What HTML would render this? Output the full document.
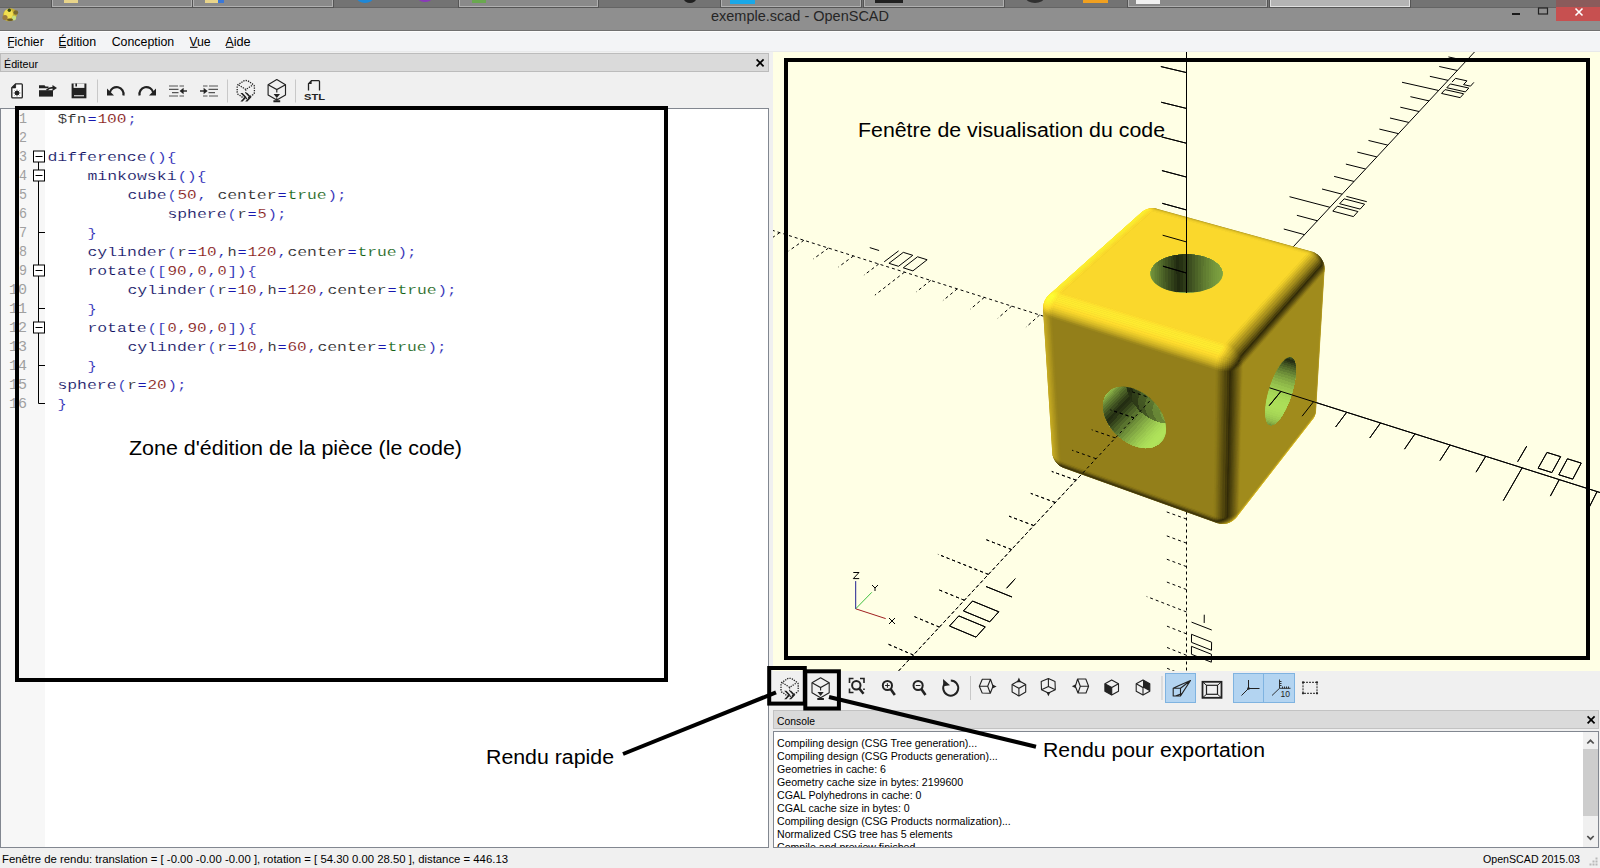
<!DOCTYPE html><html><head><meta charset="utf-8"><style>html,body{margin:0;padding:0;overflow:hidden;background:#f0f0f0}svg{display:block}</style></head><body><svg width="1600" height="868" viewBox="0 0 1600 868"><rect x="0" y="0" width="1600" height="868" fill="#f0f0f0"/>
<rect x="0" y="0" width="1600" height="8" fill="#737373"/>
<rect x="0" y="7" width="1600" height="1" fill="#646464"/>
<rect x="51" y="-2" width="142" height="10" fill="#555555"/>
<rect x="52" y="-2" width="140" height="9" fill="#b0b0b0"/>
<rect x="53" y="-2" width="138" height="8" fill="#8a8a8a"/>
<rect x="192" y="-2" width="142" height="10" fill="#555555"/>
<rect x="193" y="-2" width="140" height="9" fill="#b0b0b0"/>
<rect x="194" y="-2" width="138" height="8" fill="#8a8a8a"/>
<rect x="458" y="-2" width="141" height="10" fill="#555555"/>
<rect x="459" y="-2" width="139" height="9" fill="#b0b0b0"/>
<rect x="460" y="-2" width="137" height="8" fill="#8a8a8a"/>
<rect x="720" y="-2" width="142" height="10" fill="#555555"/>
<rect x="721" y="-2" width="140" height="9" fill="#b0b0b0"/>
<rect x="722" y="-2" width="138" height="8" fill="#8a8a8a"/>
<rect x="863" y="-2" width="142" height="10" fill="#555555"/>
<rect x="864" y="-2" width="140" height="9" fill="#b0b0b0"/>
<rect x="865" y="-2" width="138" height="8" fill="#8a8a8a"/>
<rect x="1127" y="-2" width="141" height="10" fill="#555555"/>
<rect x="1128" y="-2" width="139" height="9" fill="#b0b0b0"/>
<rect x="1129" y="-2" width="137" height="8" fill="#8a8a8a"/>
<rect x="1269" y="-2" width="142" height="10" fill="#555555"/>
<rect x="1270" y="-2" width="140" height="9" fill="#e0e0e0"/>
<rect x="1271" y="-2" width="138" height="8" fill="#b4b4b4"/>
<rect x="64" y="0" width="14" height="3" fill="#e8d48a"/>
<rect x="205" y="0" width="14" height="3" fill="#e8d48a"/>
<rect x="218" y="0" width="6" height="3" fill="#3a78d8"/>
<ellipse cx="365" cy="-2" rx="8" ry="5" fill="#1e88d8"/>
<ellipse cx="425" cy="-2" rx="7" ry="4" fill="#8a3ab8"/>
<rect x="472" y="0" width="14" height="3" fill="#6aa84f"/>
<ellipse cx="690" cy="-1" rx="6" ry="4" fill="#202020"/>
<rect x="730" y="0" width="25" height="4" fill="#1aa8e8"/>
<rect x="875" y="0" width="28" height="3" fill="#202020"/>
<ellipse cx="1035" cy="-2" rx="9" ry="5" fill="#303030"/>
<rect x="1083" y="0" width="25" height="3" fill="#f0a020"/>
<rect x="1136" y="0" width="24" height="4" fill="#f0f0f0"/>
<rect x="0" y="8" width="1600" height="22" fill="#8f8f8f"/>
<rect x="0" y="30" width="1600" height="1" fill="#707070"/>
<rect x="0" y="31" width="1600" height="1" fill="#fdfdfd"/>
<g><ellipse cx="10" cy="14.8" rx="7.3" ry="6.2" transform="rotate(-25 10 14.8)" fill="#c8b030"/><ellipse cx="8.5" cy="14" rx="4.5" ry="4.8" fill="#f2e050"/><ellipse cx="15.8" cy="12.5" rx="2.4" ry="2.2" fill="#7a6a30"/><ellipse cx="5" cy="17.5" rx="2.6" ry="2.6" fill="#9a7a40"/><ellipse cx="14" cy="18" rx="2.2" ry="2.4" fill="#c8e080"/><circle cx="9.3" cy="10.3" r="1.7" fill="#3a4a10"/><ellipse cx="10" cy="19.8" rx="3" ry="1.2" fill="#6a5a20"/></g>
<text x="711" y="20.6" font-family="Liberation Sans" font-size="14.5" fill="#262626" textLength="178" lengthAdjust="spacingAndGlyphs">exemple.scad - OpenSCAD</text>
<rect x="1556" y="0" width="44" height="7" fill="#8a5b5b"/>
<rect x="1556" y="7" width="44" height="14" fill="#c75050"/>
<path d="M1575.5,8.5 L1582.5,15.5 M1582.5,8.5 L1575.5,15.5" stroke="#fff" stroke-width="1.6"/>
<rect x="1512" y="13" width="8" height="2" fill="#1a1a1a"/>
<rect x="1538.5" y="8" width="9" height="6" fill="none" stroke="#222" stroke-width="1.2"/>
<rect x="0" y="32" width="1600" height="19" fill="#f3f4f6"/>
<rect x="0" y="51" width="1600" height="1" fill="#e8e9ea"/>
<text x="7.2" y="45.8" font-family="Liberation Sans" font-size="12" fill="#000" textLength="36.5" lengthAdjust="spacingAndGlyphs">Fichier</text>
<rect x="8" y="46.8" width="6" height="1" fill="#000"/>
<text x="58.2" y="45.8" font-family="Liberation Sans" font-size="12" fill="#000" textLength="38.0" lengthAdjust="spacingAndGlyphs">Édition</text>
<rect x="59" y="46.8" width="7" height="1" fill="#000"/>
<text x="111.7" y="45.8" font-family="Liberation Sans" font-size="12" fill="#000" textLength="62.5" lengthAdjust="spacingAndGlyphs">Conception</text>
<text x="189.2" y="45.8" font-family="Liberation Sans" font-size="12" fill="#000" textLength="21.5" lengthAdjust="spacingAndGlyphs">Vue</text>
<rect x="190" y="46.8" width="7.5" height="1" fill="#000"/>
<text x="225.2" y="45.8" font-family="Liberation Sans" font-size="12" fill="#000" textLength="25.5" lengthAdjust="spacingAndGlyphs">Aide</text>
<rect x="226" y="46.8" width="7.5" height="1" fill="#000"/>
<rect x="0.5" y="53.5" width="768" height="18" fill="#dadada" stroke="#bcbcbc" stroke-width="1"/>
<text x="4" y="67.8" font-family="Liberation Sans" font-size="11" fill="#000" textLength="34" lengthAdjust="spacingAndGlyphs">Éditeur</text>
<path d="M756.6,59.4 L763.6,66.4 M763.6,59.4 L756.6,66.4" stroke="#000" stroke-width="1.7"/>
<rect x="0.5" y="108.5" width="768" height="739" fill="#ffffff" stroke="#828790" stroke-width="1"/>
<rect x="1" y="109" width="44" height="738" fill="#f7f7f7"/>
<path d="M15.6,83.9 L21.4,83.9 Q22.3,83.9 22.3,84.8 L22.3,96.9 Q22.3,97.8 21.4,97.8 L12.7,97.8 Q11.8,97.8 11.8,96.9 L11.8,87.8 Z" fill="#fff" stroke="#222" stroke-width="1.3" stroke-linejoin="round"/>
<path d="M11.8,87.9 L15.6,87.9 L15.6,83.9" fill="#222" stroke="#222" stroke-width="0.8"/>
<circle cx="17" cy="93" r="2.3" fill="#222"/>
<path d="M17,89.6 L17,96.4 M13.6,93 L20.4,93 M14.6,90.6 L19.4,95.4 M19.4,90.6 L14.6,95.4" stroke="#222" stroke-width="0.7"/>
<path d="M39,85.3 L44.5,85.3 L45.5,86.5 L48.5,86.5 L48.5,88.3 L39,88.3 Z" fill="#222"/>
<path d="M39,90.2 L53,90.2 L53,96.6 L39,96.6 Z" fill="#222"/>
<path d="M46.5,90.2 Q49,87.6 53,87.6" fill="none" stroke="#222" stroke-width="1.6"/>
<path d="M52.5,85 L57,88 L52.5,91 Z" fill="#222"/>
<path d="M71.6,83.5 L86.4,83.5 L86.4,98.3 L71.6,98.3 Z" fill="#222"/>
<rect x="73.6" y="83.5" width="10.8" height="4.4" fill="#f0f0f0"/>
<rect x="75.4" y="83.5" width="1.6" height="3" fill="#222"/>
<rect x="74" y="95" width="10" height="1.4" fill="#bdbdbd"/>
<rect x="97" y="79.5" width="1" height="23" fill="#c8c8c8"/>
<path d="M109.8,92.5 A6.6,6.6 0 0 1 123.4,95.6" fill="none" stroke="#222" stroke-width="2.2"/>
<path d="M107,88.6 L107,95.6 L114,95.6 Z" fill="#222"/>
<path d="M153.2,92.5 A6.6,6.6 0 0 0 139.6,95.6" fill="none" stroke="#222" stroke-width="2.2"/>
<path d="M156,88.6 L156,95.6 L149,95.6 Z" fill="#222"/>
<path d="M169,86 L178,86 M179.5,86 L184,86 M169,89.3 L178.5,89.3 M172,92.6 L178.5,92.6 M169,96 L178,96 M179.5,96 L184,96" stroke="#555" stroke-width="1.2"/>
<path d="M181,91 L187,91" stroke="#222" stroke-width="1.4"/><path d="M179.6,91 L183.6,87.8 L183.6,94.2 Z" fill="#222"/>
<path d="M203,86 L207.5,86 M209,86 L218,86 M208.5,89.3 L218,89.3 M208.5,92.6 L215,92.6 M203,96 L207.5,96 M209,96 L218,96" stroke="#555" stroke-width="1.2"/>
<path d="M200,91 L206,91" stroke="#222" stroke-width="1.4"/><path d="M207.6,91 L203.6,87.8 L203.6,94.2 Z" fill="#222"/>
<rect x="227" y="79.5" width="1" height="23" fill="#c8c8c8"/>
<path d="M243.30,81.10 Q245.80,79.90 248.30,81.10 L252.60,84.10 Q254.40,84.70 254.40,86.70 L254.40,92.30 Q254.40,94.30 252.60,94.90 L248.30,97.90 Q245.80,99.10 243.30,97.90 L239.00,94.90 Q237.20,94.30 237.20,92.30 L237.20,86.70 Q237.20,84.70 239.00,84.10 Z" fill="none" stroke="#222" stroke-width="1.3" stroke-dasharray="1.3 1.1"/>
<path d="M238.70,85.00 L245.80,89.50 L252.90,85.00 M245.80,89.50 L245.80,93.00" fill="none" stroke="#222" stroke-width="1.2" stroke-dasharray="1.3 1.1"/>
<path d="M240.40,93.00 L242.60,93.00 L246.60,97.20 L242.60,101.50 L240.40,101.50 L244.40,97.20 Z" fill="#222"/>
<path d="M245.20,93.00 L247.40,93.00 L251.40,97.20 L247.40,101.50 L245.20,101.50 L249.20,97.20 Z" fill="#222"/>
<path d="M276.80,79.50 L285.50,84.65 L285.50,94.95 L276.80,100.10 L268.10,94.95 L268.10,84.65 Z" fill="none" stroke="#222" stroke-width="1.15" stroke-linejoin="round"/>
<path d="M268.1,84.7 L276.8,89.6 L285.5,84.7 M276.8,89.6 L276.8,92.5" fill="none" stroke="#222" stroke-width="1.15"/>
<path d="M273.6,94 L280,94 L276.8,98 Z M273.4,100.2 L280.2,100.2 L280.2,102.2 L273.4,102.2 Z" fill="#222"/>
<path d="M276.8,98 L276.8,100.2" stroke="#222" stroke-width="1"/>
<rect x="295" y="79.5" width="1" height="23" fill="#c8c8c8"/>
<path d="M308.5,90.5 L308.5,83.8 L311.5,80.6 L318.6,80.6 Q319.5,80.6 319.5,81.5 L319.5,90.5" fill="none" stroke="#222" stroke-width="1.3"/>
<path d="M308.5,84 L311.6,84 L311.6,80.8 Z" fill="#222"/>
<text x="304" y="100.3" font-family="Liberation Sans" font-weight="bold" font-size="9" fill="#222" textLength="21" lengthAdjust="spacingAndGlyphs">STL</text>
<text x="19.00" y="122.50" font-family="Liberation Mono" font-size="14" fill="#a0a0a0" textLength="8.00" lengthAdjust="spacingAndGlyphs">1</text>
<text x="57.40" y="122.50" font-family="Liberation Mono" font-size="13.2" fill="#202020" textLength="29.20" lengthAdjust="spacingAndGlyphs" stroke="#fff" stroke-width="0.15">$fn</text>
<text x="87.40" y="122.50" font-family="Liberation Mono" font-size="13.2" fill="#1818b0" textLength="9.20" lengthAdjust="spacingAndGlyphs" stroke="#fff" stroke-width="0.15">=</text>
<text x="97.40" y="122.50" font-family="Liberation Mono" font-size="13.2" fill="#801010" textLength="29.20" lengthAdjust="spacingAndGlyphs" stroke="#fff" stroke-width="0.15">100</text>
<text x="127.40" y="122.50" font-family="Liberation Mono" font-size="13.2" fill="#1818b0" textLength="9.20" lengthAdjust="spacingAndGlyphs" stroke="#fff" stroke-width="0.15">;</text>
<text x="19.00" y="141.50" font-family="Liberation Mono" font-size="14" fill="#a0a0a0" textLength="8.00" lengthAdjust="spacingAndGlyphs">2</text>
<text x="19.00" y="160.50" font-family="Liberation Mono" font-size="14" fill="#a0a0a0" textLength="8.00" lengthAdjust="spacingAndGlyphs">3</text>
<text x="47.40" y="160.50" font-family="Liberation Mono" font-size="13.2" fill="#0c0c60" textLength="99.20" lengthAdjust="spacingAndGlyphs" stroke="#fff" stroke-width="0.15">difference</text>
<text x="147.40" y="160.50" font-family="Liberation Mono" font-size="13.2" fill="#1818b0" textLength="29.20" lengthAdjust="spacingAndGlyphs" stroke="#fff" stroke-width="0.15">(){</text>
<text x="19.00" y="179.50" font-family="Liberation Mono" font-size="14" fill="#a0a0a0" textLength="8.00" lengthAdjust="spacingAndGlyphs">4</text>
<text x="87.40" y="179.50" font-family="Liberation Mono" font-size="13.2" fill="#0c0c60" textLength="89.20" lengthAdjust="spacingAndGlyphs" stroke="#fff" stroke-width="0.15">minkowski</text>
<text x="177.40" y="179.50" font-family="Liberation Mono" font-size="13.2" fill="#1818b0" textLength="29.20" lengthAdjust="spacingAndGlyphs" stroke="#fff" stroke-width="0.15">(){</text>
<text x="19.00" y="198.50" font-family="Liberation Mono" font-size="14" fill="#a0a0a0" textLength="8.00" lengthAdjust="spacingAndGlyphs">5</text>
<text x="127.40" y="198.50" font-family="Liberation Mono" font-size="13.2" fill="#0c0c60" textLength="39.20" lengthAdjust="spacingAndGlyphs" stroke="#fff" stroke-width="0.15">cube</text>
<text x="167.40" y="198.50" font-family="Liberation Mono" font-size="13.2" fill="#1818b0" textLength="9.20" lengthAdjust="spacingAndGlyphs" stroke="#fff" stroke-width="0.15">(</text>
<text x="177.40" y="198.50" font-family="Liberation Mono" font-size="13.2" fill="#801010" textLength="19.20" lengthAdjust="spacingAndGlyphs" stroke="#fff" stroke-width="0.15">50</text>
<text x="197.40" y="198.50" font-family="Liberation Mono" font-size="13.2" fill="#1818b0" textLength="9.20" lengthAdjust="spacingAndGlyphs" stroke="#fff" stroke-width="0.15">,</text>
<text x="217.40" y="198.50" font-family="Liberation Mono" font-size="13.2" fill="#202020" textLength="59.20" lengthAdjust="spacingAndGlyphs" stroke="#fff" stroke-width="0.15">center</text>
<text x="277.40" y="198.50" font-family="Liberation Mono" font-size="13.2" fill="#1818b0" textLength="9.20" lengthAdjust="spacingAndGlyphs" stroke="#fff" stroke-width="0.15">=</text>
<text x="287.40" y="198.50" font-family="Liberation Mono" font-size="13.2" fill="#106010" textLength="39.20" lengthAdjust="spacingAndGlyphs" stroke="#fff" stroke-width="0.15">true</text>
<text x="327.40" y="198.50" font-family="Liberation Mono" font-size="13.2" fill="#1818b0" textLength="19.20" lengthAdjust="spacingAndGlyphs" stroke="#fff" stroke-width="0.15">);</text>
<text x="19.00" y="217.50" font-family="Liberation Mono" font-size="14" fill="#a0a0a0" textLength="8.00" lengthAdjust="spacingAndGlyphs">6</text>
<text x="167.40" y="217.50" font-family="Liberation Mono" font-size="13.2" fill="#0c0c60" textLength="59.20" lengthAdjust="spacingAndGlyphs" stroke="#fff" stroke-width="0.15">sphere</text>
<text x="227.40" y="217.50" font-family="Liberation Mono" font-size="13.2" fill="#1818b0" textLength="9.20" lengthAdjust="spacingAndGlyphs" stroke="#fff" stroke-width="0.15">(</text>
<text x="237.40" y="217.50" font-family="Liberation Mono" font-size="13.2" fill="#202020" textLength="9.20" lengthAdjust="spacingAndGlyphs" stroke="#fff" stroke-width="0.15">r</text>
<text x="247.40" y="217.50" font-family="Liberation Mono" font-size="13.2" fill="#1818b0" textLength="9.20" lengthAdjust="spacingAndGlyphs" stroke="#fff" stroke-width="0.15">=</text>
<text x="257.40" y="217.50" font-family="Liberation Mono" font-size="13.2" fill="#801010" textLength="9.20" lengthAdjust="spacingAndGlyphs" stroke="#fff" stroke-width="0.15">5</text>
<text x="267.40" y="217.50" font-family="Liberation Mono" font-size="13.2" fill="#1818b0" textLength="19.20" lengthAdjust="spacingAndGlyphs" stroke="#fff" stroke-width="0.15">);</text>
<text x="19.00" y="236.50" font-family="Liberation Mono" font-size="14" fill="#a0a0a0" textLength="8.00" lengthAdjust="spacingAndGlyphs">7</text>
<text x="87.40" y="236.50" font-family="Liberation Mono" font-size="13.2" fill="#1818b0" textLength="9.20" lengthAdjust="spacingAndGlyphs" stroke="#fff" stroke-width="0.15">}</text>
<text x="19.00" y="255.50" font-family="Liberation Mono" font-size="14" fill="#a0a0a0" textLength="8.00" lengthAdjust="spacingAndGlyphs">8</text>
<text x="87.40" y="255.50" font-family="Liberation Mono" font-size="13.2" fill="#0c0c60" textLength="79.20" lengthAdjust="spacingAndGlyphs" stroke="#fff" stroke-width="0.15">cylinder</text>
<text x="167.40" y="255.50" font-family="Liberation Mono" font-size="13.2" fill="#1818b0" textLength="9.20" lengthAdjust="spacingAndGlyphs" stroke="#fff" stroke-width="0.15">(</text>
<text x="177.40" y="255.50" font-family="Liberation Mono" font-size="13.2" fill="#202020" textLength="9.20" lengthAdjust="spacingAndGlyphs" stroke="#fff" stroke-width="0.15">r</text>
<text x="187.40" y="255.50" font-family="Liberation Mono" font-size="13.2" fill="#1818b0" textLength="9.20" lengthAdjust="spacingAndGlyphs" stroke="#fff" stroke-width="0.15">=</text>
<text x="197.40" y="255.50" font-family="Liberation Mono" font-size="13.2" fill="#801010" textLength="19.20" lengthAdjust="spacingAndGlyphs" stroke="#fff" stroke-width="0.15">10</text>
<text x="217.40" y="255.50" font-family="Liberation Mono" font-size="13.2" fill="#1818b0" textLength="9.20" lengthAdjust="spacingAndGlyphs" stroke="#fff" stroke-width="0.15">,</text>
<text x="227.40" y="255.50" font-family="Liberation Mono" font-size="13.2" fill="#202020" textLength="9.20" lengthAdjust="spacingAndGlyphs" stroke="#fff" stroke-width="0.15">h</text>
<text x="237.40" y="255.50" font-family="Liberation Mono" font-size="13.2" fill="#1818b0" textLength="9.20" lengthAdjust="spacingAndGlyphs" stroke="#fff" stroke-width="0.15">=</text>
<text x="247.40" y="255.50" font-family="Liberation Mono" font-size="13.2" fill="#801010" textLength="29.20" lengthAdjust="spacingAndGlyphs" stroke="#fff" stroke-width="0.15">120</text>
<text x="277.40" y="255.50" font-family="Liberation Mono" font-size="13.2" fill="#1818b0" textLength="9.20" lengthAdjust="spacingAndGlyphs" stroke="#fff" stroke-width="0.15">,</text>
<text x="287.40" y="255.50" font-family="Liberation Mono" font-size="13.2" fill="#202020" textLength="59.20" lengthAdjust="spacingAndGlyphs" stroke="#fff" stroke-width="0.15">center</text>
<text x="347.40" y="255.50" font-family="Liberation Mono" font-size="13.2" fill="#1818b0" textLength="9.20" lengthAdjust="spacingAndGlyphs" stroke="#fff" stroke-width="0.15">=</text>
<text x="357.40" y="255.50" font-family="Liberation Mono" font-size="13.2" fill="#106010" textLength="39.20" lengthAdjust="spacingAndGlyphs" stroke="#fff" stroke-width="0.15">true</text>
<text x="397.40" y="255.50" font-family="Liberation Mono" font-size="13.2" fill="#1818b0" textLength="19.20" lengthAdjust="spacingAndGlyphs" stroke="#fff" stroke-width="0.15">);</text>
<text x="19.00" y="274.50" font-family="Liberation Mono" font-size="14" fill="#a0a0a0" textLength="8.00" lengthAdjust="spacingAndGlyphs">9</text>
<text x="87.40" y="274.50" font-family="Liberation Mono" font-size="13.2" fill="#0c0c60" textLength="59.20" lengthAdjust="spacingAndGlyphs" stroke="#fff" stroke-width="0.15">rotate</text>
<text x="147.40" y="274.50" font-family="Liberation Mono" font-size="13.2" fill="#1818b0" textLength="19.20" lengthAdjust="spacingAndGlyphs" stroke="#fff" stroke-width="0.15">([</text>
<text x="167.40" y="274.50" font-family="Liberation Mono" font-size="13.2" fill="#801010" textLength="19.20" lengthAdjust="spacingAndGlyphs" stroke="#fff" stroke-width="0.15">90</text>
<text x="187.40" y="274.50" font-family="Liberation Mono" font-size="13.2" fill="#1818b0" textLength="9.20" lengthAdjust="spacingAndGlyphs" stroke="#fff" stroke-width="0.15">,</text>
<text x="197.40" y="274.50" font-family="Liberation Mono" font-size="13.2" fill="#801010" textLength="9.20" lengthAdjust="spacingAndGlyphs" stroke="#fff" stroke-width="0.15">0</text>
<text x="207.40" y="274.50" font-family="Liberation Mono" font-size="13.2" fill="#1818b0" textLength="9.20" lengthAdjust="spacingAndGlyphs" stroke="#fff" stroke-width="0.15">,</text>
<text x="217.40" y="274.50" font-family="Liberation Mono" font-size="13.2" fill="#801010" textLength="9.20" lengthAdjust="spacingAndGlyphs" stroke="#fff" stroke-width="0.15">0</text>
<text x="227.40" y="274.50" font-family="Liberation Mono" font-size="13.2" fill="#1818b0" textLength="19.20" lengthAdjust="spacingAndGlyphs" stroke="#fff" stroke-width="0.15">])</text>
<text x="247.40" y="274.50" font-family="Liberation Mono" font-size="13.2" fill="#1818b0" textLength="9.20" lengthAdjust="spacingAndGlyphs" stroke="#fff" stroke-width="0.15">{</text>
<text x="9.00" y="293.50" font-family="Liberation Mono" font-size="14" fill="#a0a0a0" textLength="18.00" lengthAdjust="spacingAndGlyphs">10</text>
<text x="127.40" y="293.50" font-family="Liberation Mono" font-size="13.2" fill="#0c0c60" textLength="79.20" lengthAdjust="spacingAndGlyphs" stroke="#fff" stroke-width="0.15">cylinder</text>
<text x="207.40" y="293.50" font-family="Liberation Mono" font-size="13.2" fill="#1818b0" textLength="9.20" lengthAdjust="spacingAndGlyphs" stroke="#fff" stroke-width="0.15">(</text>
<text x="217.40" y="293.50" font-family="Liberation Mono" font-size="13.2" fill="#202020" textLength="9.20" lengthAdjust="spacingAndGlyphs" stroke="#fff" stroke-width="0.15">r</text>
<text x="227.40" y="293.50" font-family="Liberation Mono" font-size="13.2" fill="#1818b0" textLength="9.20" lengthAdjust="spacingAndGlyphs" stroke="#fff" stroke-width="0.15">=</text>
<text x="237.40" y="293.50" font-family="Liberation Mono" font-size="13.2" fill="#801010" textLength="19.20" lengthAdjust="spacingAndGlyphs" stroke="#fff" stroke-width="0.15">10</text>
<text x="257.40" y="293.50" font-family="Liberation Mono" font-size="13.2" fill="#1818b0" textLength="9.20" lengthAdjust="spacingAndGlyphs" stroke="#fff" stroke-width="0.15">,</text>
<text x="267.40" y="293.50" font-family="Liberation Mono" font-size="13.2" fill="#202020" textLength="9.20" lengthAdjust="spacingAndGlyphs" stroke="#fff" stroke-width="0.15">h</text>
<text x="277.40" y="293.50" font-family="Liberation Mono" font-size="13.2" fill="#1818b0" textLength="9.20" lengthAdjust="spacingAndGlyphs" stroke="#fff" stroke-width="0.15">=</text>
<text x="287.40" y="293.50" font-family="Liberation Mono" font-size="13.2" fill="#801010" textLength="29.20" lengthAdjust="spacingAndGlyphs" stroke="#fff" stroke-width="0.15">120</text>
<text x="317.40" y="293.50" font-family="Liberation Mono" font-size="13.2" fill="#1818b0" textLength="9.20" lengthAdjust="spacingAndGlyphs" stroke="#fff" stroke-width="0.15">,</text>
<text x="327.40" y="293.50" font-family="Liberation Mono" font-size="13.2" fill="#202020" textLength="59.20" lengthAdjust="spacingAndGlyphs" stroke="#fff" stroke-width="0.15">center</text>
<text x="387.40" y="293.50" font-family="Liberation Mono" font-size="13.2" fill="#1818b0" textLength="9.20" lengthAdjust="spacingAndGlyphs" stroke="#fff" stroke-width="0.15">=</text>
<text x="397.40" y="293.50" font-family="Liberation Mono" font-size="13.2" fill="#106010" textLength="39.20" lengthAdjust="spacingAndGlyphs" stroke="#fff" stroke-width="0.15">true</text>
<text x="437.40" y="293.50" font-family="Liberation Mono" font-size="13.2" fill="#1818b0" textLength="19.20" lengthAdjust="spacingAndGlyphs" stroke="#fff" stroke-width="0.15">);</text>
<text x="9.00" y="312.50" font-family="Liberation Mono" font-size="14" fill="#a0a0a0" textLength="18.00" lengthAdjust="spacingAndGlyphs">11</text>
<text x="87.40" y="312.50" font-family="Liberation Mono" font-size="13.2" fill="#1818b0" textLength="9.20" lengthAdjust="spacingAndGlyphs" stroke="#fff" stroke-width="0.15">}</text>
<text x="9.00" y="331.50" font-family="Liberation Mono" font-size="14" fill="#a0a0a0" textLength="18.00" lengthAdjust="spacingAndGlyphs">12</text>
<text x="87.40" y="331.50" font-family="Liberation Mono" font-size="13.2" fill="#0c0c60" textLength="59.20" lengthAdjust="spacingAndGlyphs" stroke="#fff" stroke-width="0.15">rotate</text>
<text x="147.40" y="331.50" font-family="Liberation Mono" font-size="13.2" fill="#1818b0" textLength="19.20" lengthAdjust="spacingAndGlyphs" stroke="#fff" stroke-width="0.15">([</text>
<text x="167.40" y="331.50" font-family="Liberation Mono" font-size="13.2" fill="#801010" textLength="9.20" lengthAdjust="spacingAndGlyphs" stroke="#fff" stroke-width="0.15">0</text>
<text x="177.40" y="331.50" font-family="Liberation Mono" font-size="13.2" fill="#1818b0" textLength="9.20" lengthAdjust="spacingAndGlyphs" stroke="#fff" stroke-width="0.15">,</text>
<text x="187.40" y="331.50" font-family="Liberation Mono" font-size="13.2" fill="#801010" textLength="19.20" lengthAdjust="spacingAndGlyphs" stroke="#fff" stroke-width="0.15">90</text>
<text x="207.40" y="331.50" font-family="Liberation Mono" font-size="13.2" fill="#1818b0" textLength="9.20" lengthAdjust="spacingAndGlyphs" stroke="#fff" stroke-width="0.15">,</text>
<text x="217.40" y="331.50" font-family="Liberation Mono" font-size="13.2" fill="#801010" textLength="9.20" lengthAdjust="spacingAndGlyphs" stroke="#fff" stroke-width="0.15">0</text>
<text x="227.40" y="331.50" font-family="Liberation Mono" font-size="13.2" fill="#1818b0" textLength="19.20" lengthAdjust="spacingAndGlyphs" stroke="#fff" stroke-width="0.15">])</text>
<text x="247.40" y="331.50" font-family="Liberation Mono" font-size="13.2" fill="#1818b0" textLength="9.20" lengthAdjust="spacingAndGlyphs" stroke="#fff" stroke-width="0.15">{</text>
<text x="9.00" y="350.50" font-family="Liberation Mono" font-size="14" fill="#a0a0a0" textLength="18.00" lengthAdjust="spacingAndGlyphs">13</text>
<text x="127.40" y="350.50" font-family="Liberation Mono" font-size="13.2" fill="#0c0c60" textLength="79.20" lengthAdjust="spacingAndGlyphs" stroke="#fff" stroke-width="0.15">cylinder</text>
<text x="207.40" y="350.50" font-family="Liberation Mono" font-size="13.2" fill="#1818b0" textLength="9.20" lengthAdjust="spacingAndGlyphs" stroke="#fff" stroke-width="0.15">(</text>
<text x="217.40" y="350.50" font-family="Liberation Mono" font-size="13.2" fill="#202020" textLength="9.20" lengthAdjust="spacingAndGlyphs" stroke="#fff" stroke-width="0.15">r</text>
<text x="227.40" y="350.50" font-family="Liberation Mono" font-size="13.2" fill="#1818b0" textLength="9.20" lengthAdjust="spacingAndGlyphs" stroke="#fff" stroke-width="0.15">=</text>
<text x="237.40" y="350.50" font-family="Liberation Mono" font-size="13.2" fill="#801010" textLength="19.20" lengthAdjust="spacingAndGlyphs" stroke="#fff" stroke-width="0.15">10</text>
<text x="257.40" y="350.50" font-family="Liberation Mono" font-size="13.2" fill="#1818b0" textLength="9.20" lengthAdjust="spacingAndGlyphs" stroke="#fff" stroke-width="0.15">,</text>
<text x="267.40" y="350.50" font-family="Liberation Mono" font-size="13.2" fill="#202020" textLength="9.20" lengthAdjust="spacingAndGlyphs" stroke="#fff" stroke-width="0.15">h</text>
<text x="277.40" y="350.50" font-family="Liberation Mono" font-size="13.2" fill="#1818b0" textLength="9.20" lengthAdjust="spacingAndGlyphs" stroke="#fff" stroke-width="0.15">=</text>
<text x="287.40" y="350.50" font-family="Liberation Mono" font-size="13.2" fill="#801010" textLength="19.20" lengthAdjust="spacingAndGlyphs" stroke="#fff" stroke-width="0.15">60</text>
<text x="307.40" y="350.50" font-family="Liberation Mono" font-size="13.2" fill="#1818b0" textLength="9.20" lengthAdjust="spacingAndGlyphs" stroke="#fff" stroke-width="0.15">,</text>
<text x="317.40" y="350.50" font-family="Liberation Mono" font-size="13.2" fill="#202020" textLength="59.20" lengthAdjust="spacingAndGlyphs" stroke="#fff" stroke-width="0.15">center</text>
<text x="377.40" y="350.50" font-family="Liberation Mono" font-size="13.2" fill="#1818b0" textLength="9.20" lengthAdjust="spacingAndGlyphs" stroke="#fff" stroke-width="0.15">=</text>
<text x="387.40" y="350.50" font-family="Liberation Mono" font-size="13.2" fill="#106010" textLength="39.20" lengthAdjust="spacingAndGlyphs" stroke="#fff" stroke-width="0.15">true</text>
<text x="427.40" y="350.50" font-family="Liberation Mono" font-size="13.2" fill="#1818b0" textLength="19.20" lengthAdjust="spacingAndGlyphs" stroke="#fff" stroke-width="0.15">);</text>
<text x="9.00" y="369.50" font-family="Liberation Mono" font-size="14" fill="#a0a0a0" textLength="18.00" lengthAdjust="spacingAndGlyphs">14</text>
<text x="87.40" y="369.50" font-family="Liberation Mono" font-size="13.2" fill="#1818b0" textLength="9.20" lengthAdjust="spacingAndGlyphs" stroke="#fff" stroke-width="0.15">}</text>
<text x="9.00" y="388.50" font-family="Liberation Mono" font-size="14" fill="#a0a0a0" textLength="18.00" lengthAdjust="spacingAndGlyphs">15</text>
<text x="57.40" y="388.50" font-family="Liberation Mono" font-size="13.2" fill="#0c0c60" textLength="59.20" lengthAdjust="spacingAndGlyphs" stroke="#fff" stroke-width="0.15">sphere</text>
<text x="117.40" y="388.50" font-family="Liberation Mono" font-size="13.2" fill="#1818b0" textLength="9.20" lengthAdjust="spacingAndGlyphs" stroke="#fff" stroke-width="0.15">(</text>
<text x="127.40" y="388.50" font-family="Liberation Mono" font-size="13.2" fill="#202020" textLength="9.20" lengthAdjust="spacingAndGlyphs" stroke="#fff" stroke-width="0.15">r</text>
<text x="137.40" y="388.50" font-family="Liberation Mono" font-size="13.2" fill="#1818b0" textLength="9.20" lengthAdjust="spacingAndGlyphs" stroke="#fff" stroke-width="0.15">=</text>
<text x="147.40" y="388.50" font-family="Liberation Mono" font-size="13.2" fill="#801010" textLength="19.20" lengthAdjust="spacingAndGlyphs" stroke="#fff" stroke-width="0.15">20</text>
<text x="167.40" y="388.50" font-family="Liberation Mono" font-size="13.2" fill="#1818b0" textLength="19.20" lengthAdjust="spacingAndGlyphs" stroke="#fff" stroke-width="0.15">);</text>
<text x="9.00" y="407.50" font-family="Liberation Mono" font-size="14" fill="#a0a0a0" textLength="18.00" lengthAdjust="spacingAndGlyphs">16</text>
<text x="57.40" y="407.50" font-family="Liberation Mono" font-size="13.2" fill="#1818b0" textLength="9.20" lengthAdjust="spacingAndGlyphs" stroke="#fff" stroke-width="0.15">}</text>
<line x1="38.5" y1="162.0" x2="38.5" y2="403.5" stroke="#000" stroke-width="1"/>
<line x1="38.5" y1="232.5" x2="45" y2="232.5" stroke="#000" stroke-width="1"/>
<line x1="38.5" y1="308.5" x2="45" y2="308.5" stroke="#000" stroke-width="1"/>
<line x1="38.5" y1="365.5" x2="45" y2="365.5" stroke="#000" stroke-width="1"/>
<line x1="38.5" y1="403.5" x2="45" y2="403.5" stroke="#000" stroke-width="1"/>
<rect x="33.5" y="151.0" width="11" height="11" fill="#fff" stroke="#000" stroke-width="1"/>
<line x1="35.5" y1="156.5" x2="42.5" y2="156.5" stroke="#000" stroke-width="1"/>
<rect x="33.5" y="170.0" width="11" height="11" fill="#fff" stroke="#000" stroke-width="1"/>
<line x1="35.5" y1="175.5" x2="42.5" y2="175.5" stroke="#000" stroke-width="1"/>
<rect x="33.5" y="265.0" width="11" height="11" fill="#fff" stroke="#000" stroke-width="1"/>
<line x1="35.5" y1="270.5" x2="42.5" y2="270.5" stroke="#000" stroke-width="1"/>
<rect x="33.5" y="322.0" width="11" height="11" fill="#fff" stroke="#000" stroke-width="1"/>
<line x1="35.5" y1="327.5" x2="42.5" y2="327.5" stroke="#000" stroke-width="1"/>
<rect x="773" y="52" width="827" height="619" fill="#ffffe5"/>
<defs><clipPath id="vp"><rect x="773" y="52" width="827" height="619"/></clipPath></defs>
<g clip-path="url(#vp)">
<path d="M1186.50,361.50 L3418.97,1068.83 M1186.50,361.50 L1619.75,-104.13 M1186.50,361.50 L1186.50,-2672.58 M1217.42,371.30 L1205.16,384.99 M1202.88,343.90 L1180.49,336.94 M1186.50,332.80 L1163.56,325.72 M1248.88,381.27 L1236.90,395.21 M1218.75,326.84 L1196.60,320.10 M1186.50,303.33 L1163.25,296.35 M1280.91,391.41 L1269.22,405.61 M1234.14,310.30 L1212.23,303.77 M1186.50,273.06 L1162.94,266.19 M1313.51,401.74 L1302.12,416.19 M1249.06,294.26 L1227.40,287.92 M1186.50,241.95 L1162.61,235.19 M1346.71,412.26 L1335.63,426.98 M1263.55,278.69 L1242.11,272.54 M1186.50,209.98 L1162.28,203.34 M1380.51,422.97 L1369.76,437.96 M1277.61,263.58 L1256.40,257.61 M1186.50,177.09 L1161.94,170.59 M1414.94,433.88 L1404.53,449.15 M1291.26,248.91 L1270.28,243.10 M1186.50,143.26 L1161.59,136.91 M1450.01,444.99 L1439.96,460.55 M1304.53,234.65 L1283.77,229.00 M1186.50,108.44 L1161.23,102.24 M1485.75,456.31 L1476.06,472.17 M1317.43,220.79 L1296.88,215.30 M1186.50,72.58 L1160.86,66.56 M1522.16,467.85 L1503.31,500.60 M1329.97,207.31 L1289.53,196.69 M1186.50,35.65 L1134.83,24.05 M1559.27,479.61 L1550.37,496.08 M1342.17,194.20 L1322.04,189.00 M1186.50,-2.41 L1160.08,-8.06 M1597.10,491.59 L1588.63,508.39 M1354.04,181.44 L1334.12,176.38 M1186.50,-41.65 L1159.67,-47.09 M1635.67,503.81 L1627.64,520.94 M1365.60,169.01 L1345.88,164.09 M1186.50,-82.13 L1159.25,-87.34 M1675.01,516.28 L1667.43,533.75 M1376.85,156.92 L1357.33,152.12 M1186.50,-123.91 L1158.82,-128.87 M1715.13,528.99 L1708.03,546.81 M1387.82,145.13 L1368.49,140.46 M1186.50,-167.05 L1158.37,-171.74 M1756.06,541.96 L1749.46,560.15 M1398.51,133.65 L1379.37,129.09 M1186.50,-211.61 L1157.91,-216.02 M1797.82,555.19 L1791.75,573.75 M1408.92,122.45 L1389.97,118.01 M1186.50,-257.67 L1157.43,-261.78 M1840.45,568.69 L1834.92,587.65 M1419.08,111.53 L1400.31,107.20 M1186.50,-305.31 L1156.94,-309.09 M1883.96,582.48 L1879.00,601.83 M1428.99,100.88 L1410.40,96.66 M1186.50,-354.60 L1156.43,-358.03 M1928.38,596.56 L1919.54,636.67 M1438.66,90.49 L1402.02,82.28 M1186.50,-405.64 L1125.83,-411.68 M1973.75,610.93 L1970.02,631.12 M1448.10,80.35 L1429.86,76.32 M1186.50,-458.53 L1155.36,-461.16 M2020.10,625.61 L2017.01,646.24 M1457.31,70.45 L1439.25,66.51 M1186.50,-513.35 L1154.79,-515.54 M2067.45,640.62 L2065.04,661.70 M1466.31,60.77 L1448.41,56.93 M1186.50,-570.23 L1154.20,-571.94 M2115.83,655.95 L2114.14,677.50 M1475.10,51.33 L1457.37,47.57 M1186.50,-629.28 L1153.59,-630.46 M2165.30,671.62 L2164.35,693.65 M1483.69,42.09 L1466.12,38.43 M1186.50,-690.62 L1152.96,-691.24 M2215.87,687.64 L2215.70,710.18 M1492.09,33.07 L1474.68,29.49 M1186.50,-754.39 L1152.30,-754.41 M2267.59,704.03 L2268.23,727.08 M1500.29,24.25 L1483.04,20.74 M1186.50,-820.74 L1151.62,-820.11 M2320.50,720.79 L2321.99,744.38 M1508.32,15.62 L1491.22,12.19 M1186.50,-889.83 L1150.90,-888.49 M2374.63,737.94 L2377.02,762.09 M1516.17,7.18 L1499.23,3.83 M1186.50,-961.84 L1150.16,-959.72 M2430.04,755.50 L2436.80,805.76 M1523.85,-1.07 L1490.40,-7.61 M1186.50,-1036.94 L1113.04,-1031.10 M2486.76,773.47 L2491.07,798.79 M1531.37,-9.15 L1514.72,-12.36 M1186.50,-1115.35 L1148.58,-1111.49 M2544.85,791.88 L2550.18,817.81 M1538.73,-17.06 L1522.22,-20.20 M1186.50,-1197.28 L1147.73,-1192.44 M2604.36,810.73 L2610.76,837.31 M1545.93,-24.80 L1529.57,-27.88 M1186.50,-1282.99 L1146.85,-1277.07 M2665.33,830.05 L2672.86,857.29 M1552.99,-32.38 L1536.76,-35.40 M1186.50,-1372.73 L1145.93,-1365.65 M2727.82,849.85 L2736.53,877.78 M1559.90,-39.81 L1543.81,-42.77 M1186.50,-1466.81 L1144.96,-1458.44 M2791.89,870.15 L2801.85,898.80 M1566.67,-47.09 L1550.71,-49.98 M1186.50,-1565.53 L1143.95,-1555.78 M2857.61,890.97 L2868.86,920.36 M1573.30,-54.22 L1557.48,-57.05 M1186.50,-1669.26 L1142.88,-1657.98 M2925.02,912.33 L2937.64,942.49 M1579.80,-61.20 L1564.11,-63.99 M1186.50,-1778.39 L1141.76,-1765.43 M2994.21,934.25 L3008.27,965.22 M1586.18,-68.05 L1570.62,-70.78 M1186.50,-1893.34 L1140.58,-1878.55 M3065.24,956.75 L3096.96,1021.57 M1592.43,-74.77 L1561.68,-80.10 M1186.50,-2014.60 L1093.42,-1981.42 M3138.18,979.87 L3155.34,1012.55 M1598.56,-81.36 L1583.25,-83.98 M1186.50,-2142.70 L1138.03,-2123.66 M3213.12,1003.61 L3231.94,1037.20 M1604.57,-87.82 L1589.38,-90.39 M1186.50,-2278.24 L1136.64,-2256.74 M3290.14,1028.01 L3310.72,1062.55 M1610.46,-94.16 L1595.40,-96.68 M1186.50,-2421.88 L1135.17,-2397.65 M3369.32,1053.10 L3391.75,1088.62 M1616.25,-100.38 L1601.30,-102.85 M1186.50,-2574.37 L1133.61,-2547.13 M1526.72,446.14 L1517.64,461.73 M1546.98,452.44 L1560.61,456.67 L1551.90,472.54 L1538.12,468.19 L1546.98,452.44 M1567.46,458.80 L1581.23,463.09 L1572.74,479.12 L1558.82,474.72 L1567.46,458.80 M1353.45,216.58 L1357.95,211.56 L1337.37,206.18 L1332.79,211.14 L1353.45,216.58 M1360.18,209.08 L1364.61,204.14 L1344.15,198.84 L1339.64,203.72 L1360.18,209.08 M1366.80,201.69 L1346.39,196.42 M1219.49,50.07 L1219.68,36.04 L1193.09,30.13 L1193.05,44.08 L1219.49,50.07 M1219.77,28.97 L1219.96,14.70 L1193.14,8.90 L1193.10,23.09 L1219.77,28.97 M1220.06,7.51 L1193.16,1.74 M927.13,259.76 L917.56,256.78 L903.29,267.82 L912.92,270.86 L927.13,259.76 M912.79,255.30 L903.31,252.35 L888.95,263.30 L898.50,266.31 L912.79,255.30 M898.59,250.88 L884.20,261.80 M879.11,250.54 L869.77,247.62 M1015.27,578.67 L1006.60,588.23 M1012.03,597.01 L986.00,586.51 M998.76,611.79 L989.76,621.82 L963.44,610.93 L972.56,601.06 L998.76,611.79 M985.21,626.89 L976.00,637.15 L949.50,626.02 L958.83,615.92 L985.21,626.89 M1204.26,614.71 L1204.19,622.96 M1211.76,630.02 L1191.52,622.13 M1211.60,642.22 L1211.49,650.26 L1191.47,642.33 L1191.49,634.30 L1211.60,642.22 M1211.44,654.25 L1211.34,662.19 L1191.44,654.25 L1191.46,646.32 L1211.44,654.25 M1925.47,570.09 L1941.88,575.19 L1940.36,582.31 L1923.86,577.15 L1921.15,589.08 L1937.79,594.33 M1950.14,577.76 L1966.74,582.92 L1962.98,602.29 L1946.15,596.97 L1950.14,577.76 M1975.09,585.52 L1991.89,590.74 L1988.48,610.33 L1971.45,604.96 L1975.09,585.52 M1460.19,97.64 L1463.66,93.78 L1445.05,89.62 L1441.52,93.45 L1460.19,97.64 M1465.38,91.86 L1468.80,88.05 L1450.30,83.95 L1446.81,87.72 L1465.38,91.86 M1473.87,82.39 L1470.50,86.15 L1463.55,84.62 L1466.95,80.87 L1455.47,78.35 L1452.03,82.07 M1225.38,-392.05 L1225.64,-411.55 L1194.26,-414.58 L1194.21,-395.23 L1225.38,-392.05 M1225.77,-421.40 L1226.03,-441.29 L1194.34,-444.09 L1194.28,-424.35 L1225.77,-421.40 M1226.44,-471.64 L1226.17,-451.34 L1214.17,-452.37 L1214.36,-472.61 L1194.42,-474.20 L1194.36,-454.06 M687.88,185.39 L679.66,182.83 L664.04,192.31 L672.30,194.92 L687.88,185.39 M675.57,181.56 L667.41,179.02 L651.74,188.43 L659.93,191.01 L675.57,181.56 M655.26,175.25 L663.35,177.76 L657.50,181.26 L649.40,178.72 L639.53,184.58 L647.65,187.14 M645.36,177.46 L637.33,174.95 M729.15,894.00 L715.88,908.62 M720.26,922.11 L706.69,937.24 L695.54,931.05 L709.16,916.03 L690.85,905.99 L677.14,920.83 M699.81,944.90 L685.86,960.44 L656.12,943.58 L670.20,928.34 L699.81,944.90 M678.79,968.32 L664.46,984.29 L634.52,966.96 L648.99,951.30 L678.79,968.32 M1202.41,814.23 L1202.35,820.85 M1209.14,827.19 L1209.05,833.73 L1202.26,830.68 L1202.32,824.14 L1191.00,819.10 L1190.99,825.64 M1209.01,836.98 L1208.92,843.45 L1190.96,835.36 L1190.98,828.89 L1209.01,836.98 M1208.88,846.66 L1208.79,853.06 L1190.94,844.96 L1190.95,838.57 L1208.88,846.66 M2415.85,722.53 L2436.26,728.87 L2437.51,737.73 L2416.97,731.31 L2437.51,737.73 L2439.63,752.73 L2418.87,746.17 M2446.54,732.07 L2467.21,738.50 L2471.10,762.66 L2450.07,756.02 L2446.54,732.07 M2477.62,741.73 L2498.57,748.24 L2502.99,772.72 L2481.68,766.00 L2477.62,741.73 M1543.68,4.61 L1546.43,1.54 L1529.48,-1.76 L1526.67,1.28 L1543.68,4.61 M1547.80,0.02 L1550.53,-3.02 L1533.65,-6.28 L1530.88,-3.28 L1547.80,0.02 M1554.57,-7.52 L1551.88,-4.52 L1545.54,-5.75 L1548.25,-8.73 L1545.54,-5.75 L1535.03,-7.78 L1537.78,-10.75 M1233.83,-1026.30 L1234.21,-1055.24 L1195.94,-1052.04 L1195.86,-1023.44 L1233.83,-1026.30 M1234.41,-1069.89 L1234.80,-1099.54 L1196.06,-1095.83 L1195.98,-1066.52 L1234.41,-1069.89 M1235.41,-1144.95 L1235.00,-1114.55 L1220.31,-1113.08 L1220.59,-1143.34 L1220.31,-1113.08 L1196.09,-1110.66 L1196.17,-1140.69 M481.26,121.16 L474.12,118.94 L457.65,127.17 L464.81,129.43 L481.26,121.16 M470.57,117.83 L463.48,115.63 L446.97,123.80 L454.08,126.04 L470.57,117.83 M452.92,112.35 L459.95,114.53 L453.79,117.57 L446.75,115.37 L453.79,117.57 L443.43,122.68 L436.37,120.45 M443.24,114.27 L436.25,112.09 M266.12,1404.31 L243.32,1429.44 M244.04,1452.75 L220.46,1479.02 L208.11,1468.25 L231.72,1442.22 L208.11,1468.25 L187.79,1450.52 L211.45,1424.91 M208.46,1492.39 L184.02,1519.62 L151.23,1490.08 L175.75,1463.55 L208.46,1492.39 M171.58,1533.48 L146.23,1561.72 L113.35,1531.09 L138.76,1503.59 L171.58,1533.48 M1200.91,976.06 L1200.85,981.48 M1207.01,987.22 L1206.94,992.59 L1200.78,989.56 L1200.83,984.18 L1200.78,989.56 L1190.57,984.52 L1190.58,979.15 M1206.90,995.26 L1206.83,1000.58 L1190.55,992.51 L1190.56,987.20 L1206.90,995.26 M1206.79,1003.22 L1206.72,1008.48 L1190.53,1000.42 L1190.54,995.16 L1206.79,1003.22 M3033.56,914.54 L3038.97,925.76 L3065.24,933.97 L3059.63,922.65 L3074.78,953.19 M3072.76,926.73 L3099.21,934.95 L3115.20,965.95 L3088.18,957.42 L3072.76,926.73 M3112.54,939.10 L3139.38,947.44 L3156.23,978.90 L3128.81,970.25 L3112.54,939.10 M1610.77,-70.15 L1613.01,-72.64 L1597.45,-75.33 L1595.16,-72.86 L1610.77,-70.15 M1614.13,-73.89 L1616.34,-76.36 L1600.85,-79.02 L1598.59,-76.57 L1614.13,-73.89 M1619.64,-80.03 L1613.84,-81.02 L1611.63,-78.58 L1617.45,-77.58 L1601.98,-80.24 M1246.96,-2012.72 L1247.59,-2060.06 L1198.55,-2042.25 L1198.43,-1995.73 L1246.96,-2012.72 M1247.91,-2084.10 L1248.56,-2132.95 L1198.74,-2113.86 L1198.61,-2065.87 L1247.91,-2084.10 M1249.57,-2208.20 L1230.41,-2200.46 L1229.95,-2150.38 L1248.90,-2157.77 L1198.80,-2138.22 M301.02,65.13 L294.76,63.18 L277.77,70.40 L284.04,72.38 L301.02,65.13 M291.65,62.21 L285.43,60.28 L268.41,67.44 L274.64,69.41 L291.65,62.21 M276.17,57.40 L269.81,60.05 L275.99,61.98 L282.34,59.32 L265.31,66.46 M266.73,59.09 L260.60,57.18 M-611.37,2371.39 L-659.39,2424.32 M-672.41,2473.91 L-684.02,2451.46 L-734.55,2507.15 L-723.10,2530.39 L-753.27,2469.14 M-749.12,2559.38 L-802.55,2618.91 L-832.00,2554.36 L-779.06,2497.06 L-749.12,2559.38 M-829.99,2649.49 L-886.40,2712.34 L-915.00,2644.20 L-859.17,2583.77 L-829.99,2649.49 M1199.66,1109.94 L1199.62,1114.47 M1205.24,1119.71 L1199.60,1116.72 L1199.56,1121.21 L1205.18,1124.20 L1190.22,1116.26 M1205.15,1126.43 L1205.09,1130.87 L1190.20,1122.95 L1190.21,1118.50 L1205.15,1126.43 M1205.06,1133.09 L1205.01,1137.49 L1190.19,1129.58 L1190.20,1125.17 L1205.06,1133.09" stroke="#000" stroke-width="1" fill="none"/>
<path d="M1186.50,361.50 L200.98,49.25 M1186.50,361.50 L-1406.48,3148.30 M1186.50,361.50 L1186.50,1159.44 M1156.11,351.87 L1143.34,365.10 M1169.59,379.68 L1146.69,372.27 M1186.50,389.46 L1164.15,382.20 M1126.25,342.41 L1113.23,355.41 M1152.12,398.45 L1128.96,390.80 M1186.50,416.70 L1164.43,409.36 M1096.88,333.11 L1083.63,345.89 M1134.06,417.86 L1110.63,409.95 M1186.50,443.26 L1164.71,435.85 M1068.01,323.96 L1054.54,336.52 M1115.38,437.93 L1091.69,429.75 M1186.50,469.16 L1164.98,461.68 M1039.63,314.97 L1025.94,327.32 M1096.06,458.70 L1072.09,450.23 M1186.50,494.42 L1165.24,486.88 M1011.71,306.12 L997.81,318.27 M1076.05,480.21 L1051.80,471.44 M1186.50,519.07 L1165.49,511.48 M984.24,297.42 L970.15,309.37 M1055.32,502.49 L1030.79,493.40 M1186.50,543.13 L1165.74,535.49 M957.23,288.86 L942.95,300.62 M1033.83,525.59 L1009.01,516.16 M1186.50,566.62 L1165.99,558.93 M930.65,280.44 L916.19,292.00 M1011.53,549.55 L986.42,539.77 M1186.50,589.56 L1166.23,581.83 M904.49,272.15 L874.90,295.17 M988.39,574.42 L937.95,554.26 M1186.50,611.97 L1146.65,596.51 M878.75,263.99 L863.95,275.20 M964.35,600.26 L938.63,589.71 M1186.50,633.86 L1166.69,626.06 M853.41,255.97 L838.46,266.99 M939.36,627.12 L913.33,616.15 M1186.50,655.27 L1166.91,647.43 M828.47,248.06 L813.36,258.92 M913.35,655.06 L887.02,643.65 M1186.50,676.19 L1167.13,668.32 M803.92,240.28 L788.66,250.97 M886.28,684.16 L859.63,672.27 M1186.50,696.65 L1167.34,688.76 M779.74,232.62 L764.35,243.14 M858.06,714.49 L831.10,702.09 M1186.50,716.66 L1167.55,708.75 M755.93,225.08 L740.41,235.44 M828.64,746.12 L801.35,733.18 M1186.50,736.24 L1167.75,728.31 M732.48,217.65 L716.83,227.85 M797.91,779.13 L770.30,765.63 M1186.50,755.40 L1167.95,747.46 M709.39,210.33 L693.61,220.38 M765.81,813.63 L737.88,799.52 M1186.50,774.16 L1168.15,766.20 M686.63,203.12 L670.75,213.02 M732.24,849.72 L703.97,834.95 M1186.50,792.52 L1168.34,784.55 M664.22,196.02 L631.89,215.73 M697.08,887.51 L640.43,856.86 M1186.50,810.50 L1150.74,794.62 M642.13,189.02 L626.03,198.63 M660.23,927.11 L631.31,910.89 M1186.50,828.11 L1168.71,820.12 M620.37,182.13 L604.17,191.60 M621.56,968.67 L592.31,951.65 M1186.50,845.37 L1168.89,837.37 M598.92,175.33 L582.62,184.66 M580.93,1012.33 L551.36,994.44 M1186.50,862.27 L1169.07,854.28 M577.78,168.64 L561.39,177.83 M538.19,1058.27 L508.31,1039.44 M1186.50,878.84 L1169.24,870.85 M556.94,162.03 L540.46,171.10 M493.18,1106.65 L462.99,1086.81 M1186.50,895.09 L1169.41,887.09 M536.40,155.52 L519.84,164.46 M445.70,1157.68 L415.21,1136.74 M1186.50,911.02 L1169.58,903.02 M516.15,149.11 L499.50,157.92 M395.54,1211.58 L364.77,1189.46 M1186.50,926.63 L1169.74,918.64 M496.17,142.78 L479.46,151.47 M342.48,1268.61 L311.44,1245.19 M1186.50,941.95 L1169.90,933.96 M476.48,136.54 L459.69,145.11 M286.25,1329.04 L254.96,1304.22 M1186.50,956.98 L1170.05,949.00 M457.06,130.39 L423.02,147.45 M226.56,1393.19 L164.31,1341.10 M1186.50,971.73 L1154.07,955.85 M437.90,124.32 L420.98,132.65 M163.09,1461.41 L131.40,1433.36 M1186.50,986.20 L1170.36,978.23 M419.01,118.33 L402.02,126.55 M95.45,1534.10 L63.62,1504.19 M1186.50,1000.41 L1170.51,992.45 M400.36,112.42 L383.32,120.53 M23.23,1611.72 L-8.69,1579.76 M1186.50,1014.36 L1170.65,1006.40 M381.97,106.60 L364.88,114.60 M-54.06,1694.79 L-86.00,1660.56 M1186.50,1028.05 L1170.80,1020.11 M363.83,100.85 L346.68,108.74 M-136.96,1783.89 L-168.86,1747.15 M1186.50,1041.50 L1170.94,1033.57 M345.92,95.17 L328.72,102.96 M-226.12,1879.71 L-257.86,1840.17 M1186.50,1054.71 L1171.07,1046.79 M328.25,89.57 L311.00,97.26 M-322.27,1983.05 L-353.74,1940.37 M1186.50,1067.68 L1171.21,1059.78 M310.81,84.05 L293.52,91.63 M-426.26,2094.82 L-457.31,2048.61 M1186.50,1080.43 L1171.34,1072.54 M293.60,78.60 L276.27,86.08 M-539.10,2216.09 L-569.54,2165.91 M1186.50,1092.96 L1171.47,1085.08 M276.61,73.21 L241.56,88.13 M-661.97,2348.14 L-720.15,2240.64 M1186.50,1105.27 L1156.83,1089.62 M259.83,67.90 L242.43,75.19 M-796.25,2492.46 L-824.74,2432.61 M1186.50,1117.38 L1171.73,1109.53 M243.27,62.65 L225.83,69.85 M-943.64,2650.86 L-970.63,2585.09 M1186.50,1129.28 L1171.85,1121.45 M226.92,57.47 L209.45,64.58 M-1106.12,2825.50 L-1131.18,2752.88 M1186.50,1140.98 L1171.97,1133.16 M210.77,52.35 L193.27,59.38 M-1286.17,3019.00 L-1308.71,2938.42 M1186.50,1152.48 L1172.09,1144.69" stroke="#000" stroke-width="1" fill="none" stroke-dasharray="3 3"/>
<path d="M1043.48,307.62 L1043.64,306.16 L1043.81,304.85 L1044.18,303.35 L1044.60,302.07 L1045.20,300.60 L1045.82,299.43 L1046.63,298.07 L1047.39,297.06 L1048.37,295.90 L1049.19,295.07 L1140.79,213.27 L1141.87,212.35 L1142.57,211.79 L1143.86,210.98 L1144.71,210.48 L1146.16,209.84 L1147.13,209.47 L1148.68,209.04 L1149.74,208.86 L1151.30,208.65 L1152.85,208.63 L1153.85,208.70 L1155.31,208.86 L1156.73,209.17 L1311.11,251.78 L1312.62,252.28 L1313.13,252.47 L1314.49,253.06 L1315.81,253.79 L1317.08,254.67 L1318.34,255.68 L1319.46,256.77 L1320.54,258.06 L1321.37,259.21 L1322.30,260.82 L1322.88,262.09 L1323.57,264.08 L1323.89,265.48 L1324.02,266.35 L1324.20,267.86 L1324.20,269.38 L1315.55,411.05 L1315.38,412.43 L1315.09,413.58 L1314.71,414.95 L1314.14,416.26 L1313.65,417.35 L1312.90,418.54 L1312.26,419.50 L1236.84,516.48 L1235.95,517.49 L1235.11,518.44 L1234.15,519.28 L1233.25,520.01 L1232.28,520.69 L1230.42,521.74 L1229.37,522.17 L1228.78,522.40 L1227.68,522.80 L1225.99,523.20 L1224.80,523.37 L1223.18,523.52 L1221.62,523.50 L1220.10,523.34 L1219.16,523.17 L1217.83,522.87 L1216.54,522.47 L1064.03,467.66 L1062.89,467.19 L1062.02,466.75 L1060.81,466.10 L1059.66,465.32 L1058.56,464.41 L1057.64,463.57 L1056.61,462.43 L1055.86,461.44 L1055.00,460.12 L1054.46,459.06 L1053.83,457.65 L1053.48,456.63 L1053.23,455.66 L1052.96,454.51 L1052.82,453.34 L1052.72,452.14 L1043.49,309.07 Z" fill="#a08a22"/>
<path d="M1313.7,417.3 1314.1,416.3 1314.7,415.0 1314.2,416.1Z" fill="#e1c328" stroke="#e1c328" stroke-width="0.6"/>
<path d="M1312.3,419.5 1312.9,418.5 1313.7,417.3 1313.0,418.3Z" fill="#eaca29" stroke="#eaca29" stroke-width="0.6"/>
<path d="M1315.1,413.6 1315.4,412.4 1315.6,411.0 1315.3,412.2Z" fill="#c2a722" stroke="#c2a722" stroke-width="0.6"/>
<path d="M1314.2,416.1 1314.7,415.0 1315.1,413.6 1314.6,414.7Z" fill="#cfb325" stroke="#cfb325" stroke-width="0.6"/>
<path d="M1313.0,418.3 1313.7,417.3 1314.2,416.1 1313.5,417.1Z" fill="#d9bb26" stroke="#d9bb26" stroke-width="0.6"/>
<path d="M1314.6,414.7 1315.1,413.6 1315.3,412.2 1314.8,413.2Z" fill="#baa121" stroke="#baa121" stroke-width="0.6"/>
<path d="M1313.5,417.1 1314.2,416.1 1314.6,414.7 1313.9,415.7Z" fill="#c6ab23" stroke="#c6ab23" stroke-width="0.6"/>
<path d="M1313.9,415.7 1314.6,414.7 1314.8,413.2 1314.1,414.3Z" fill="#b1991f" stroke="#b1991f" stroke-width="0.6"/>
<path d="M1148.7,209.0 1150.3,208.8 1151.3,208.7 1149.7,208.9Z" fill="#e3c428" stroke="#e3c428" stroke-width="0.6"/>
<path d="M1152.9,208.6 1154.4,208.8 1155.3,208.9 1153.9,208.7Z" fill="#c1a722" stroke="#c1a722" stroke-width="0.6"/>
<path d="M1146.2,209.8 1147.7,209.4 1148.7,209.0 1147.1,209.5Z" fill="#f8d62c" stroke="#f8d62c" stroke-width="0.6"/>
<path d="M1141.9,212.3 1143.1,211.6 1143.9,211.0 1142.6,211.8Z" fill="#ffe82f" stroke="#ffe82f" stroke-width="0.6"/>
<path d="M1143.9,211.0 1145.2,210.4 1146.2,209.8 1144.7,210.5Z" fill="#ffe22e" stroke="#ffe22e" stroke-width="0.6"/>
<path d="M1154.4,208.8 1155.9,209.1 1156.7,209.2 1155.3,208.9Z" fill="#b79e20" stroke="#b79e20" stroke-width="0.6"/>
<path d="M1150.3,208.8 1151.9,208.8 1152.9,208.6 1151.3,208.7Z" fill="#ddbf27" stroke="#ddbf27" stroke-width="0.6"/>
<path d="M1147.7,209.4 1149.3,209.2 1150.3,208.8 1148.7,209.0Z" fill="#f5d32b" stroke="#f5d32b" stroke-width="0.6"/>
<path d="M1151.9,208.8 1153.4,208.9 1154.4,208.8 1152.9,208.6Z" fill="#d5b826" stroke="#d5b826" stroke-width="0.6"/>
<path d="M1145.2,210.4 1146.7,209.9 1147.7,209.4 1146.2,209.8Z" fill="#ffe22e" stroke="#ffe22e" stroke-width="0.6"/>
<path d="M1143.1,211.6 1144.4,211.0 1145.2,210.4 1143.9,211.0Z" fill="#ffeb30" stroke="#ffeb30" stroke-width="0.6"/>
<path d="M1149.3,209.2 1150.9,209.1 1151.9,208.8 1150.3,208.8Z" fill="#efce2a" stroke="#efce2a" stroke-width="0.6"/>
<path d="M1153.4,208.9 1155.0,209.3 1155.9,209.1 1154.4,208.8Z" fill="#cbaf24" stroke="#cbaf24" stroke-width="0.6"/>
<path d="M1146.7,209.9 1148.3,209.7 1149.3,209.2 1147.7,209.4Z" fill="#ffe02e" stroke="#ffe02e" stroke-width="0.6"/>
<path d="M1144.4,211.0 1145.8,210.6 1146.7,209.9 1145.2,210.4Z" fill="#ffec30" stroke="#ffec30" stroke-width="0.6"/>
<path d="M1150.9,209.1 1152.5,209.3 1153.4,208.9 1151.9,208.8Z" fill="#e7c829" stroke="#e7c829" stroke-width="0.6"/>
<path d="M1148.3,209.7 1149.9,209.6 1150.9,209.1 1149.3,209.2Z" fill="#ffdc2d" stroke="#ffdc2d" stroke-width="0.6"/>
<path d="M1152.5,209.3 1154.1,209.6 1155.0,209.3 1153.4,208.9Z" fill="#ddbf27" stroke="#ddbf27" stroke-width="0.6"/>
<path d="M1145.8,210.6 1147.4,210.4 1148.3,209.7 1146.7,209.9Z" fill="#ffeb30" stroke="#ffeb30" stroke-width="0.6"/>
<path d="M1149.9,209.6 1151.5,209.8 1152.5,209.3 1150.9,209.1Z" fill="#f7d52c" stroke="#f7d52c" stroke-width="0.6"/>
<path d="M1147.4,210.4 1149.0,210.4 1149.9,209.6 1148.3,209.7Z" fill="#ffe72f" stroke="#ffe72f" stroke-width="0.6"/>
<path d="M1151.5,209.8 1153.2,210.2 1154.1,209.6 1152.5,209.3Z" fill="#edcd2a" stroke="#edcd2a" stroke-width="0.6"/>
<path d="M1149.0,210.4 1150.6,210.6 1151.5,209.8 1149.9,209.6Z" fill="#ffe12e" stroke="#ffe12e" stroke-width="0.6"/>
<path d="M1150.6,210.6 1152.2,210.9 1153.2,210.2 1151.5,209.8Z" fill="#fbd82c" stroke="#fbd82c" stroke-width="0.6"/>
<path d="M1315.3,412.2 1315.6,411.0 1324.1,270.4 1323.8,271.5Z" fill="#b79e20" stroke="#b79e20" stroke-width="0.6"/>
<path d="M1314.8,413.2 1315.3,412.2 1323.8,271.5 1323.3,272.5Z" fill="#af971f" stroke="#af971f" stroke-width="0.6"/>
<path d="M1058.6,464.4 1059.7,465.3 1058.8,464.6 1057.6,463.6Z" fill="#322b09" stroke="#322b09" stroke-width="0.6"/>
<path d="M1053.5,456.6 1053.2,455.7 1053.0,454.5 1053.2,455.6Z" fill="#ab941e" stroke="#ab941e" stroke-width="0.6"/>
<path d="M1062.9,467.2 1064.0,467.7 1063.3,467.3 1062.0,466.7Z" fill="#6b5c13" stroke="#6b5c13" stroke-width="0.6"/>
<path d="M1056.6,462.4 1057.6,463.6 1056.9,462.6 1055.9,461.4Z" fill="#574b0f" stroke="#574b0f" stroke-width="0.6"/>
<path d="M1053.8,457.7 1054.5,459.1 1054.1,458.0 1053.5,456.6Z" fill="#97821b" stroke="#97821b" stroke-width="0.6"/>
<path d="M1059.7,465.3 1060.8,466.1 1060.0,465.4 1058.8,464.6Z" fill="#3d340b" stroke="#3d340b" stroke-width="0.6"/>
<path d="M1055.0,460.1 1055.9,461.4 1055.3,460.4 1054.5,459.1Z" fill="#796915" stroke="#796915" stroke-width="0.6"/>
<path d="M1053.2,455.6 1053.0,454.5 1052.8,453.3 1053.1,454.5Z" fill="#bda321" stroke="#bda321" stroke-width="0.6"/>
<path d="M1314.1,414.3 1314.8,413.2 1323.3,272.5 1322.6,273.5Z" fill="#a68f1d" stroke="#a68f1d" stroke-width="0.6"/>
<path d="M1057.6,463.6 1058.8,464.6 1058.0,463.6 1056.9,462.6Z" fill="#4c420d" stroke="#4c420d" stroke-width="0.6"/>
<path d="M1060.8,466.1 1062.0,466.7 1061.2,466.1 1060.0,465.4Z" fill="#473e0d" stroke="#473e0d" stroke-width="0.6"/>
<path d="M1053.5,456.6 1054.1,458.0 1053.8,456.8 1053.2,455.6Z" fill="#aa931e" stroke="#aa931e" stroke-width="0.6"/>
<path d="M1055.9,461.4 1056.9,462.6 1056.3,461.5 1055.3,460.4Z" fill="#706114" stroke="#706114" stroke-width="0.6"/>
<path d="M1054.5,459.1 1055.3,460.4 1054.8,459.2 1054.1,458.0Z" fill="#907c19" stroke="#907c19" stroke-width="0.6"/>
<path d="M1062.0,466.7 1063.3,467.3 1062.6,466.7 1061.2,466.1Z" fill="#52470e" stroke="#52470e" stroke-width="0.6"/>
<path d="M1058.8,464.6 1060.0,465.4 1059.2,464.5 1058.0,463.6Z" fill="#41380c" stroke="#41380c" stroke-width="0.6"/>
<path d="M1053.2,455.6 1053.8,456.8 1053.7,455.7 1053.1,454.5Z" fill="#bca221" stroke="#bca221" stroke-width="0.6"/>
<path d="M1056.9,462.6 1058.0,463.6 1057.4,462.6 1056.3,461.5Z" fill="#665812" stroke="#665812" stroke-width="0.6"/>
<path d="M1054.1,458.0 1054.8,459.2 1054.5,458.0 1053.8,456.8Z" fill="#a48e1d" stroke="#a48e1d" stroke-width="0.6"/>
<path d="M1055.3,460.4 1056.3,461.5 1055.8,460.4 1054.8,459.2Z" fill="#877518" stroke="#877518" stroke-width="0.6"/>
<path d="M1060.0,465.4 1061.2,466.1 1060.6,465.3 1059.2,464.5Z" fill="#362f0a" stroke="#362f0a" stroke-width="0.6"/>
<path d="M1058.0,463.6 1059.2,464.5 1058.7,463.5 1057.4,462.6Z" fill="#5b4e10" stroke="#5b4e10" stroke-width="0.6"/>
<path d="M1061.2,466.1 1062.6,466.7 1062.0,465.9 1060.6,465.3Z" fill="#38310a" stroke="#38310a" stroke-width="0.6"/>
<path d="M1053.8,456.8 1054.5,458.0 1054.4,456.8 1053.7,455.7Z" fill="#b89f21" stroke="#b89f21" stroke-width="0.6"/>
<path d="M1056.3,461.5 1057.4,462.6 1056.9,461.4 1055.8,460.4Z" fill="#7e6d16" stroke="#7e6d16" stroke-width="0.6"/>
<path d="M1054.8,459.2 1055.8,460.4 1055.5,459.1 1054.5,458.0Z" fill="#9e881c" stroke="#9e881c" stroke-width="0.6"/>
<path d="M1059.2,464.5 1060.6,465.3 1060.0,464.3 1058.7,463.5Z" fill="#50450e" stroke="#50450e" stroke-width="0.6"/>
<path d="M1057.4,462.6 1058.7,463.5 1058.2,462.4 1056.9,461.4Z" fill="#746414" stroke="#746414" stroke-width="0.6"/>
<path d="M1054.5,458.0 1055.5,459.1 1055.3,457.8 1054.4,456.8Z" fill="#b39a20" stroke="#b39a20" stroke-width="0.6"/>
<path d="M1055.8,460.4 1056.9,461.4 1056.6,460.1 1055.5,459.1Z" fill="#95811a" stroke="#95811a" stroke-width="0.6"/>
<path d="M1060.6,465.3 1062.0,465.9 1061.5,464.9 1060.0,464.3Z" fill="#453b0c" stroke="#453b0c" stroke-width="0.6"/>
<path d="M1058.7,463.5 1060.0,464.3 1059.6,463.1 1058.2,462.4Z" fill="#695b13" stroke="#695b13" stroke-width="0.6"/>
<path d="M1056.9,461.4 1058.2,462.4 1057.9,461.1 1056.6,460.1Z" fill="#8c7919" stroke="#8c7919" stroke-width="0.6"/>
<path d="M1055.5,459.1 1056.6,460.1 1056.4,458.8 1055.3,457.8Z" fill="#ac941e" stroke="#ac941e" stroke-width="0.6"/>
<path d="M1060.0,464.3 1061.5,464.9 1061.2,463.8 1059.6,463.1Z" fill="#5e5111" stroke="#5e5111" stroke-width="0.6"/>
<path d="M1058.2,462.4 1059.6,463.1 1059.3,461.8 1057.9,461.1Z" fill="#827017" stroke="#827017" stroke-width="0.6"/>
<path d="M1056.6,460.1 1057.9,461.1 1057.7,459.6 1056.4,458.8Z" fill="#a38d1d" stroke="#a38d1d" stroke-width="0.6"/>
<path d="M1236.8,516.5 1312.3,419.5 1313.0,418.3 1237.6,515.3Z" fill="#e5c628" stroke="#e5c628" stroke-width="0.6"/>
<path d="M1059.6,463.1 1061.2,463.8 1060.9,462.5 1059.3,461.8Z" fill="#766615" stroke="#766615" stroke-width="0.6"/>
<path d="M1057.9,461.1 1059.3,461.8 1059.2,460.4 1057.7,459.6Z" fill="#99841b" stroke="#99841b" stroke-width="0.6"/>
<path d="M1237.6,515.3 1313.0,418.3 1313.5,417.1 1238.1,514.0Z" fill="#d4b725" stroke="#d4b725" stroke-width="0.6"/>
<path d="M1059.3,461.8 1060.9,462.5 1060.8,461.0 1059.2,460.4Z" fill="#8e7b19" stroke="#8e7b19" stroke-width="0.6"/>
<path d="M1238.1,514.0 1313.5,417.1 1313.9,415.7 1238.4,512.6Z" fill="#c1a622" stroke="#c1a622" stroke-width="0.6"/>
<path d="M1238.4,512.6 1313.9,415.7 1314.1,414.3 1238.6,511.1Z" fill="#ac941e" stroke="#ac941e" stroke-width="0.6"/>
<path d="M1155.9,209.1 1310.4,251.8 1311.1,251.8 1156.7,209.2Z" fill="#b29a1f" stroke="#b29a1f" stroke-width="0.6"/>
<path d="M1155.0,209.3 1309.7,252.0 1310.4,251.8 1155.9,209.1Z" fill="#c6ab23" stroke="#c6ab23" stroke-width="0.6"/>
<path d="M1154.1,209.6 1308.9,252.4 1309.7,252.0 1155.0,209.3Z" fill="#d7ba26" stroke="#d7ba26" stroke-width="0.6"/>
<path d="M1153.2,210.2 1308.1,253.0 1308.9,252.4 1154.1,209.6Z" fill="#e7c829" stroke="#e7c829" stroke-width="0.6"/>
<path d="M1152.2,210.9 1307.3,253.8 1308.1,253.0 1153.2,210.2Z" fill="#f5d32b" stroke="#f5d32b" stroke-width="0.6"/>
<path d="M1064.0,467.7 1216.5,522.5 1215.9,522.1 1063.3,467.3Z" fill="#6f6014" stroke="#6f6014" stroke-width="0.6"/>
<path d="M1063.3,467.3 1215.9,522.1 1215.4,521.6 1062.6,466.7Z" fill="#574b0f" stroke="#574b0f" stroke-width="0.6"/>
<path d="M1062.6,466.7 1215.4,521.6 1215.0,520.8 1062.0,465.9Z" fill="#3e350b" stroke="#3e350b" stroke-width="0.6"/>
<path d="M1049.2,295.1 1140.8,213.3 1141.9,212.3 1050.3,294.1Z" fill="#ffe62f" stroke="#ffe62f" stroke-width="0.6"/>
<path d="M1062.0,465.9 1215.0,520.8 1214.6,519.9 1061.5,464.9Z" fill="#3f360b" stroke="#3f360b" stroke-width="0.6"/>
<path d="M1050.3,294.1 1051.5,293.4 1143.1,211.6 1141.9,212.3Z" fill="#ffec30" stroke="#ffec30" stroke-width="0.6"/>
<path d="M1061.5,464.9 1214.6,519.9 1214.4,518.7 1061.2,463.8Z" fill="#584c10" stroke="#584c10" stroke-width="0.6"/>
<path d="M1051.5,293.4 1052.9,292.8 1144.4,211.0 1143.1,211.6Z" fill="#fff031" stroke="#fff031" stroke-width="0.6"/>
<path d="M1317.1,254.7 1318.3,255.7 1318.3,255.7 1317.2,254.8Z" fill="#554a0f" stroke="#554a0f" stroke-width="0.6"/>
<path d="M1312.6,252.3 1314.1,252.9 1314.5,253.1 1313.1,252.5Z" fill="#8c7919" stroke="#8c7919" stroke-width="0.6"/>
<path d="M1324.1,270.4 1324.2,269.4 1324.2,267.9 1324.1,268.8Z" fill="#b39a20" stroke="#b39a20" stroke-width="0.6"/>
<path d="M1061.2,463.8 1214.4,518.7 1214.3,517.4 1060.9,462.5Z" fill="#706114" stroke="#706114" stroke-width="0.6"/>
<path d="M1318.3,255.7 1319.5,256.9 1319.5,256.8 1318.3,255.7Z" fill="#483e0d" stroke="#483e0d" stroke-width="0.6"/>
<path d="M1324.0,266.3 1323.9,265.5 1323.6,264.1 1323.6,264.8Z" fill="#8c7919" stroke="#8c7919" stroke-width="0.6"/>
<path d="M1323.1,262.7 1322.9,262.1 1322.3,260.8 1322.4,261.3Z" fill="#655712" stroke="#655712" stroke-width="0.6"/>
<path d="M1314.1,252.9 1315.5,253.8 1315.8,253.8 1314.5,253.1Z" fill="#806f17" stroke="#806f17" stroke-width="0.6"/>
<path d="M1321.5,259.6 1321.4,259.2 1320.5,258.1 1320.6,258.4Z" fill="#3d350b" stroke="#3d350b" stroke-width="0.6"/>
<path d="M1052.9,292.8 1054.4,292.5 1145.8,210.6 1144.4,211.0Z" fill="#fff131" stroke="#fff131" stroke-width="0.6"/>
<path d="M1319.5,256.9 1320.6,258.4 1320.5,258.1 1319.5,256.8Z" fill="#3a320a" stroke="#3a320a" stroke-width="0.6"/>
<path d="M1315.5,253.8 1316.9,254.7 1317.1,254.7 1315.8,253.8Z" fill="#736414" stroke="#736414" stroke-width="0.6"/>
<path d="M1324.1,268.8 1324.2,267.9 1324.0,266.3 1323.9,267.2Z" fill="#9d871c" stroke="#9d871c" stroke-width="0.6"/>
<path d="M1323.6,264.8 1323.6,264.1 1323.1,262.7 1323.1,263.4Z" fill="#756515" stroke="#756515" stroke-width="0.6"/>
<path d="M1310.4,251.8 1312.0,252.3 1312.6,252.3 1311.1,251.8Z" fill="#ac951e" stroke="#ac951e" stroke-width="0.6"/>
<path d="M1322.4,261.3 1322.3,260.8 1321.5,259.6 1321.5,260.0Z" fill="#4c420d" stroke="#4c420d" stroke-width="0.6"/>
<path d="M1316.9,254.7 1318.2,255.9 1318.3,255.7 1317.1,254.7Z" fill="#665812" stroke="#665812" stroke-width="0.6"/>
<path d="M1060.9,462.5 1214.3,517.4 1214.2,516.0 1060.8,461.0Z" fill="#887518" stroke="#887518" stroke-width="0.6"/>
<path d="M1323.8,271.5 1324.1,270.4 1324.1,268.8 1323.8,269.8Z" fill="#ac951e" stroke="#ac951e" stroke-width="0.6"/>
<path d="M1312.0,252.3 1313.6,253.0 1314.1,252.9 1312.6,252.3Z" fill="#a08a1c" stroke="#a08a1c" stroke-width="0.6"/>
<path d="M1323.9,267.2 1324.0,266.3 1323.6,264.8 1323.5,265.7Z" fill="#857317" stroke="#857317" stroke-width="0.6"/>
<path d="M1054.4,292.5 1055.9,292.3 1147.4,210.4 1145.8,210.6Z" fill="#fff031" stroke="#fff031" stroke-width="0.6"/>
<path d="M1318.2,255.9 1319.4,257.2 1319.5,256.9 1318.3,255.7Z" fill="#574b0f" stroke="#574b0f" stroke-width="0.6"/>
<path d="M1323.1,263.4 1323.1,262.7 1322.4,261.3 1322.3,261.9Z" fill="#5c4f10" stroke="#5c4f10" stroke-width="0.6"/>
<path d="M1313.6,253.0 1315.1,253.9 1315.5,253.8 1314.1,252.9Z" fill="#937f1a" stroke="#937f1a" stroke-width="0.6"/>
<path d="M1321.5,260.0 1321.5,259.6 1320.6,258.4 1320.5,258.7Z" fill="#322b09" stroke="#322b09" stroke-width="0.6"/>
<path d="M1319.4,257.2 1320.5,258.7 1320.6,258.4 1319.5,256.9Z" fill="#473d0c" stroke="#473d0c" stroke-width="0.6"/>
<path d="M1323.8,269.8 1324.1,268.8 1323.9,267.2 1323.6,268.2Z" fill="#95811a" stroke="#95811a" stroke-width="0.6"/>
<path d="M1315.1,253.9 1316.5,255.0 1316.9,254.7 1315.5,253.8Z" fill="#847217" stroke="#847217" stroke-width="0.6"/>
<path d="M1323.5,265.7 1323.6,264.8 1323.1,263.4 1322.9,264.1Z" fill="#6c5d13" stroke="#6c5d13" stroke-width="0.6"/>
<path d="M1322.3,261.9 1322.4,261.3 1321.5,260.0 1321.4,260.5Z" fill="#42390c" stroke="#42390c" stroke-width="0.6"/>
<path d="M1309.7,252.0 1311.4,252.5 1312.0,252.3 1310.4,251.8Z" fill="#c0a622" stroke="#c0a622" stroke-width="0.6"/>
<path d="M1055.9,292.3 1057.6,292.3 1149.0,210.4 1147.4,210.4Z" fill="#ffec30" stroke="#ffec30" stroke-width="0.6"/>
<path d="M1316.5,255.0 1317.9,256.2 1318.2,255.9 1316.9,254.7Z" fill="#756515" stroke="#756515" stroke-width="0.6"/>
<path d="M1323.3,272.5 1323.8,271.5 1323.8,269.8 1323.3,270.8Z" fill="#a48e1d" stroke="#a48e1d" stroke-width="0.6"/>
<path d="M1311.4,252.5 1313.0,253.3 1313.6,253.0 1312.0,252.3Z" fill="#b39a20" stroke="#b39a20" stroke-width="0.6"/>
<path d="M1323.6,268.2 1323.9,267.2 1323.5,265.7 1323.2,266.5Z" fill="#7d6c16" stroke="#7d6c16" stroke-width="0.6"/>
<path d="M1317.9,256.2 1319.1,257.6 1319.4,257.2 1318.2,255.9Z" fill="#645612" stroke="#645612" stroke-width="0.6"/>
<path d="M1322.9,264.1 1323.1,263.4 1322.3,261.9 1322.1,262.6Z" fill="#53470f" stroke="#53470f" stroke-width="0.6"/>
<path d="M1321.4,260.5 1321.5,260.0 1320.5,258.7 1320.2,259.2Z" fill="#3d340b" stroke="#3d340b" stroke-width="0.6"/>
<path d="M1313.0,253.3 1314.6,254.2 1315.1,253.9 1313.6,253.0Z" fill="#a48e1d" stroke="#a48e1d" stroke-width="0.6"/>
<path d="M1319.1,257.6 1320.2,259.2 1320.5,258.7 1319.4,257.2Z" fill="#52470f" stroke="#52470f" stroke-width="0.6"/>
<path d="M1057.6,292.3 1059.3,292.6 1150.6,210.6 1149.0,210.4Z" fill="#ffe62f" stroke="#ffe62f" stroke-width="0.6"/>
<path d="M1323.3,270.8 1323.8,269.8 1323.6,268.2 1323.1,269.1Z" fill="#8c7919" stroke="#8c7919" stroke-width="0.6"/>
<path d="M1323.2,266.5 1323.5,265.7 1322.9,264.1 1322.6,264.8Z" fill="#635612" stroke="#635612" stroke-width="0.6"/>
<path d="M1314.6,254.2 1316.1,255.3 1316.5,255.0 1315.1,253.9Z" fill="#94801a" stroke="#94801a" stroke-width="0.6"/>
<path d="M1322.1,262.6 1322.3,261.9 1321.4,260.5 1321.1,261.1Z" fill="#38300a" stroke="#38300a" stroke-width="0.6"/>
<path d="M1308.9,252.4 1310.7,253.0 1311.4,252.5 1309.7,252.0Z" fill="#d1b525" stroke="#d1b525" stroke-width="0.6"/>
<path d="M1322.6,273.5 1323.3,272.5 1323.3,270.8 1322.6,271.7Z" fill="#9a851b" stroke="#9a851b" stroke-width="0.6"/>
<path d="M1316.1,255.3 1317.5,256.6 1317.9,256.2 1316.5,255.0Z" fill="#837117" stroke="#837117" stroke-width="0.6"/>
<path d="M1323.1,269.1 1323.6,268.2 1323.2,266.5 1322.7,267.4Z" fill="#736414" stroke="#736414" stroke-width="0.6"/>
<path d="M1059.3,292.6 1061.1,293.0 1152.2,210.9 1150.6,210.6Z" fill="#ffdd2d" stroke="#ffdd2d" stroke-width="0.6"/>
<path d="M1322.6,264.8 1322.9,264.1 1322.1,262.6 1321.7,263.2Z" fill="#493f0d" stroke="#493f0d" stroke-width="0.6"/>
<path d="M1317.5,256.6 1318.8,258.1 1319.1,257.6 1317.9,256.2Z" fill="#706114" stroke="#706114" stroke-width="0.6"/>
<path d="M1310.7,253.0 1312.4,253.8 1313.0,253.3 1311.4,252.5Z" fill="#c3a923" stroke="#c3a923" stroke-width="0.6"/>
<path d="M1321.1,261.1 1321.4,260.5 1320.2,259.2 1319.9,259.7Z" fill="#473d0c" stroke="#473d0c" stroke-width="0.6"/>
<path d="M1318.8,258.1 1319.9,259.7 1320.2,259.2 1319.1,257.6Z" fill="#5d5010" stroke="#5d5010" stroke-width="0.6"/>
<path d="M1312.4,253.8 1314.0,254.7 1314.6,254.2 1313.0,253.3Z" fill="#b49b20" stroke="#b49b20" stroke-width="0.6"/>
<path d="M1322.6,271.7 1323.3,270.8 1323.1,269.1 1322.4,270.0Z" fill="#827117" stroke="#827117" stroke-width="0.6"/>
<path d="M1322.7,267.4 1323.2,266.5 1322.6,264.8 1322.1,265.6Z" fill="#5a4e10" stroke="#5a4e10" stroke-width="0.6"/>
<path d="M1321.7,263.2 1322.1,262.6 1321.1,261.1 1320.7,261.7Z" fill="#352e09" stroke="#352e09" stroke-width="0.6"/>
<path d="M1314.0,254.7 1315.6,255.9 1316.1,255.3 1314.6,254.2Z" fill="#a38c1d" stroke="#a38c1d" stroke-width="0.6"/>
<path d="M1308.1,253.0 1309.9,253.6 1310.7,253.0 1308.9,252.4Z" fill="#e1c228" stroke="#e1c228" stroke-width="0.6"/>
<path d="M1315.6,255.9 1317.0,257.2 1317.5,256.6 1316.1,255.3Z" fill="#907c19" stroke="#907c19" stroke-width="0.6"/>
<path d="M1322.4,270.0 1323.1,269.1 1322.7,267.4 1322.0,268.2Z" fill="#6a5b13" stroke="#6a5b13" stroke-width="0.6"/>
<path d="M1320.7,261.7 1321.1,261.1 1319.9,259.7 1319.5,260.2Z" fill="#50450e" stroke="#50450e" stroke-width="0.6"/>
<path d="M1322.1,265.6 1322.6,264.8 1321.7,263.2 1321.2,264.0Z" fill="#40370b" stroke="#40370b" stroke-width="0.6"/>
<path d="M1317.0,257.2 1318.3,258.6 1318.8,258.1 1317.5,256.6Z" fill="#7c6b16" stroke="#7c6b16" stroke-width="0.6"/>
<path d="M1318.3,258.6 1319.5,260.2 1319.9,259.7 1318.8,258.1Z" fill="#675912" stroke="#675912" stroke-width="0.6"/>
<path d="M1309.9,253.6 1311.6,254.4 1312.4,253.8 1310.7,253.0Z" fill="#d2b625" stroke="#d2b625" stroke-width="0.6"/>
<path d="M1321.2,264.0 1321.7,263.2 1320.7,261.7 1320.2,262.4Z" fill="#3f360b" stroke="#3f360b" stroke-width="0.6"/>
<path d="M1311.6,254.4 1313.3,255.4 1314.0,254.7 1312.4,253.8Z" fill="#c2a722" stroke="#c2a722" stroke-width="0.6"/>
<path d="M1322.0,268.2 1322.7,267.4 1322.1,265.6 1321.4,266.5Z" fill="#50450e" stroke="#50450e" stroke-width="0.6"/>
<path d="M1313.3,255.4 1314.9,256.5 1315.6,255.9 1314.0,254.7Z" fill="#b0981f" stroke="#b0981f" stroke-width="0.6"/>
<path d="M1320.2,262.4 1320.7,261.7 1319.5,260.2 1319.0,260.8Z" fill="#594d10" stroke="#594d10" stroke-width="0.6"/>
<path d="M1307.3,253.8 1309.1,254.4 1309.9,253.6 1308.1,253.0Z" fill="#eece2a" stroke="#eece2a" stroke-width="0.6"/>
<path d="M1314.9,256.5 1316.4,257.8 1317.0,257.2 1315.6,255.9Z" fill="#9c871c" stroke="#9c871c" stroke-width="0.6"/>
<path d="M1052.8,453.3 1052.7,452.1 1043.5,309.1 1043.6,310.2Z" fill="#c4aa23" stroke="#c4aa23" stroke-width="0.6"/>
<path d="M1321.4,266.5 1322.1,265.6 1321.2,264.0 1320.6,264.7Z" fill="#362f0a" stroke="#362f0a" stroke-width="0.6"/>
<path d="M1316.4,257.8 1317.8,259.3 1318.3,258.6 1317.0,257.2Z" fill="#877418" stroke="#877418" stroke-width="0.6"/>
<path d="M1317.8,259.3 1319.0,260.8 1319.5,260.2 1318.3,258.6Z" fill="#706114" stroke="#706114" stroke-width="0.6"/>
<path d="M1309.1,254.4 1310.8,255.2 1311.6,254.4 1309.9,253.6Z" fill="#dfc127" stroke="#dfc127" stroke-width="0.6"/>
<path d="M1320.6,264.7 1321.2,264.0 1320.2,262.4 1319.6,263.1Z" fill="#483e0d" stroke="#483e0d" stroke-width="0.6"/>
<path d="M1310.8,255.2 1312.6,256.2 1313.3,255.4 1311.6,254.4Z" fill="#ceb224" stroke="#ceb224" stroke-width="0.6"/>
<path d="M1319.6,263.1 1320.2,262.4 1319.0,260.8 1318.5,261.5Z" fill="#615411" stroke="#615411" stroke-width="0.6"/>
<path d="M1312.6,256.2 1314.2,257.3 1314.9,256.5 1313.3,255.4Z" fill="#bba221" stroke="#bba221" stroke-width="0.6"/>
<path d="M1317.2,260.0 1318.5,261.5 1319.0,260.8 1317.8,259.3Z" fill="#796815" stroke="#796815" stroke-width="0.6"/>
<path d="M1314.2,257.3 1315.8,258.6 1316.4,257.8 1314.9,256.5Z" fill="#a7901d" stroke="#a7901d" stroke-width="0.6"/>
<path d="M1315.8,258.6 1317.2,260.0 1317.8,259.3 1316.4,257.8Z" fill="#907d1a" stroke="#907d1a" stroke-width="0.6"/>
<path d="M1053.1,454.5 1052.8,453.3 1043.6,310.2 1043.9,311.3Z" fill="#c5aa23" stroke="#c5aa23" stroke-width="0.6"/>
<path d="M1053.1,454.5 1053.7,455.7 1044.5,312.4 1043.9,311.3Z" fill="#c4a923" stroke="#c4a923" stroke-width="0.6"/>
<path d="M1053.7,455.7 1054.4,456.8 1045.2,313.5 1044.5,312.4Z" fill="#c1a722" stroke="#c1a722" stroke-width="0.6"/>
<path d="M1054.4,456.8 1055.3,457.8 1046.2,314.4 1045.2,313.5Z" fill="#bda321" stroke="#bda321" stroke-width="0.6"/>
<path d="M1055.3,457.8 1056.4,458.8 1047.4,315.3 1046.2,314.4Z" fill="#b69d20" stroke="#b69d20" stroke-width="0.6"/>
<path d="M1056.4,458.8 1057.7,459.6 1048.8,316.1 1047.4,315.3Z" fill="#ae961f" stroke="#ae961f" stroke-width="0.6"/>
<path d="M1057.7,459.6 1059.2,460.4 1050.3,316.9 1048.8,316.1Z" fill="#a48e1d" stroke="#a48e1d" stroke-width="0.6"/>
<path d="M1059.2,460.4 1060.8,461.0 1052.0,317.5 1050.3,316.9Z" fill="#99841b" stroke="#99841b" stroke-width="0.6"/>
<path d="M1238.6,511.1 1314.1,414.3 1322.6,273.5 1242.4,364.9Z" fill="#a08b1c" stroke="#a08b1c" stroke-width="0.6"/>
<path d="M1235.1,518.4 1235.9,517.5 1236.8,516.5 1235.9,517.5Z" fill="#efce2a" stroke="#efce2a" stroke-width="0.6"/>
<path d="M1227.7,522.8 1229.4,522.2 1230.4,521.7 1228.8,522.4Z" fill="#dbbd27" stroke="#dbbd27" stroke-width="0.6"/>
<path d="M1230.4,521.7 1231.4,521.2 1232.3,520.7 1231.2,521.2Z" fill="#e4c528" stroke="#e4c528" stroke-width="0.6"/>
<path d="M1219.2,523.2 1220.5,523.4 1221.6,523.5 1220.1,523.3Z" fill="#9b861b" stroke="#9b861b" stroke-width="0.6"/>
<path d="M1224.8,523.4 1226.5,523.0 1227.7,522.8 1226.0,523.2Z" fill="#c6ab23" stroke="#c6ab23" stroke-width="0.6"/>
<path d="M1232.3,520.7 1233.2,520.0 1234.1,519.3 1233.1,520.0Z" fill="#e5c528" stroke="#e5c528" stroke-width="0.6"/>
<path d="M1220.5,523.4 1222.0,523.4 1223.2,523.5 1221.6,523.5Z" fill="#a38d1d" stroke="#a38d1d" stroke-width="0.6"/>
<path d="M1216.5,522.5 1217.8,522.9 1217.4,522.6 1215.9,522.1Z" fill="#746414" stroke="#746414" stroke-width="0.6"/>
<path d="M1234.1,519.3 1235.1,518.4 1235.9,517.5 1234.9,518.4Z" fill="#e3c428" stroke="#e3c428" stroke-width="0.6"/>
<path d="M1226.5,523.0 1228.2,522.5 1229.4,522.2 1227.7,522.8Z" fill="#c9ae24" stroke="#c9ae24" stroke-width="0.6"/>
<path d="M1229.4,522.2 1230.4,521.7 1231.2,521.2 1230.0,521.7Z" fill="#d5b826" stroke="#d5b826" stroke-width="0.6"/>
<path d="M1222.0,523.4 1223.5,523.3 1224.8,523.4 1223.2,523.5Z" fill="#aa931e" stroke="#aa931e" stroke-width="0.6"/>
<path d="M1235.9,517.5 1236.8,516.5 1237.6,515.3 1236.6,516.4Z" fill="#e0c128" stroke="#e0c128" stroke-width="0.6"/>
<path d="M1217.8,522.9 1219.2,523.2 1218.8,522.9 1217.4,522.6Z" fill="#7d6c16" stroke="#7d6c16" stroke-width="0.6"/>
<path d="M1231.2,521.2 1232.3,520.7 1233.1,520.0 1231.9,520.6Z" fill="#d6b926" stroke="#d6b926" stroke-width="0.6"/>
<path d="M1223.5,523.3 1225.2,523.1 1226.5,523.0 1224.8,523.4Z" fill="#b0981f" stroke="#b0981f" stroke-width="0.6"/>
<path d="M1219.2,523.2 1220.5,523.4 1220.4,523.1 1218.8,522.9Z" fill="#857318" stroke="#857318" stroke-width="0.6"/>
<path d="M1233.1,520.0 1234.1,519.3 1234.9,518.4 1233.7,519.1Z" fill="#d6b926" stroke="#d6b926" stroke-width="0.6"/>
<path d="M1228.2,522.5 1229.4,522.2 1230.0,521.7 1228.7,522.0Z" fill="#c3a923" stroke="#c3a923" stroke-width="0.6"/>
<path d="M1225.2,523.1 1226.9,522.7 1228.2,522.5 1226.5,523.0Z" fill="#b59c20" stroke="#b59c20" stroke-width="0.6"/>
<path d="M1220.5,523.4 1222.0,523.4 1222.0,523.1 1220.4,523.1Z" fill="#8d7a19" stroke="#8d7a19" stroke-width="0.6"/>
<path d="M1234.9,518.4 1235.9,517.5 1236.6,516.4 1235.5,517.3Z" fill="#d4b725" stroke="#d4b725" stroke-width="0.6"/>
<path d="M1236.6,516.4 1237.6,515.3 1238.1,514.0 1237.1,515.1Z" fill="#ceb224" stroke="#ceb224" stroke-width="0.6"/>
<path d="M1230.0,521.7 1231.2,521.2 1231.9,520.6 1230.5,521.0Z" fill="#c6ab23" stroke="#c6ab23" stroke-width="0.6"/>
<path d="M1215.9,522.1 1217.4,522.6 1217.0,522.0 1215.4,521.6Z" fill="#5c4f10" stroke="#5c4f10" stroke-width="0.6"/>
<path d="M1222.0,523.4 1223.5,523.3 1223.7,522.9 1222.0,523.1Z" fill="#95811a" stroke="#95811a" stroke-width="0.6"/>
<path d="M1231.9,520.6 1233.1,520.0 1233.7,519.1 1232.4,519.8Z" fill="#c7ac23" stroke="#c7ac23" stroke-width="0.6"/>
<path d="M1217.4,522.6 1218.8,522.9 1218.6,522.4 1217.0,522.0Z" fill="#665812" stroke="#665812" stroke-width="0.6"/>
<path d="M1223.5,523.3 1225.2,523.1 1225.4,522.6 1223.7,522.9Z" fill="#9c871c" stroke="#9c871c" stroke-width="0.6"/>
<path d="M1226.9,522.7 1228.2,522.5 1228.7,522.0 1227.2,522.1Z" fill="#b0981f" stroke="#b0981f" stroke-width="0.6"/>
<path d="M1233.7,519.1 1234.9,518.4 1235.5,517.3 1234.2,518.1Z" fill="#c6ab23" stroke="#c6ab23" stroke-width="0.6"/>
<path d="M1225.2,523.1 1226.9,522.7 1227.2,522.1 1225.4,522.6Z" fill="#a38c1d" stroke="#a38c1d" stroke-width="0.6"/>
<path d="M1218.8,522.9 1220.4,523.1 1220.2,522.5 1218.6,522.4Z" fill="#6f6014" stroke="#6f6014" stroke-width="0.6"/>
<path d="M1228.7,522.0 1230.0,521.7 1230.5,521.0 1229.1,521.3Z" fill="#b49b20" stroke="#b49b20" stroke-width="0.6"/>
<path d="M1235.5,517.3 1236.6,516.4 1237.1,515.1 1236.0,516.1Z" fill="#c2a722" stroke="#c2a722" stroke-width="0.6"/>
<path d="M1237.1,515.1 1238.1,514.0 1238.4,512.6 1237.4,513.8Z" fill="#bba121" stroke="#bba121" stroke-width="0.6"/>
<path d="M1220.4,523.1 1222.0,523.1 1222.0,522.5 1220.2,522.5Z" fill="#786815" stroke="#786815" stroke-width="0.6"/>
<path d="M1230.5,521.0 1231.9,520.6 1232.4,519.8 1230.9,520.2Z" fill="#b69d20" stroke="#b69d20" stroke-width="0.6"/>
<path d="M1215.4,521.6 1217.0,522.0 1216.6,521.3 1215.0,520.8Z" fill="#433a0c" stroke="#433a0c" stroke-width="0.6"/>
<path d="M1222.0,523.1 1223.7,522.9 1223.8,522.4 1222.0,522.5Z" fill="#817017" stroke="#817017" stroke-width="0.6"/>
<path d="M1232.4,519.8 1233.7,519.1 1234.2,518.1 1232.8,518.8Z" fill="#b69d20" stroke="#b69d20" stroke-width="0.6"/>
<path d="M1227.2,522.1 1228.7,522.0 1229.1,521.3 1227.5,521.5Z" fill="#9f891c" stroke="#9f891c" stroke-width="0.6"/>
<path d="M1223.7,522.9 1225.4,522.6 1225.6,522.0 1223.8,522.4Z" fill="#897718" stroke="#897718" stroke-width="0.6"/>
<path d="M1217.0,522.0 1218.6,522.4 1218.4,521.7 1216.6,521.3Z" fill="#4e430e" stroke="#4e430e" stroke-width="0.6"/>
<path d="M1234.2,518.1 1235.5,517.3 1236.0,516.1 1234.6,517.0Z" fill="#b49b20" stroke="#b49b20" stroke-width="0.6"/>
<path d="M1236.0,516.1 1237.1,515.1 1237.4,513.8 1236.2,514.8Z" fill="#ae971f" stroke="#ae971f" stroke-width="0.6"/>
<path d="M1225.4,522.6 1227.2,522.1 1227.5,521.5 1225.6,522.0Z" fill="#917d1a" stroke="#917d1a" stroke-width="0.6"/>
<path d="M1229.1,521.3 1230.5,521.0 1230.9,520.2 1229.4,520.6Z" fill="#a38d1d" stroke="#a38d1d" stroke-width="0.6"/>
<path d="M1237.4,513.8 1238.4,512.6 1238.6,511.1 1237.6,512.3Z" fill="#a68f1d" stroke="#a68f1d" stroke-width="0.6"/>
<path d="M1218.6,522.4 1220.2,522.5 1220.1,521.8 1218.4,521.7Z" fill="#594d10" stroke="#594d10" stroke-width="0.6"/>
<path d="M1230.9,520.2 1232.4,519.8 1232.8,518.8 1231.3,519.3Z" fill="#a58e1d" stroke="#a58e1d" stroke-width="0.6"/>
<path d="M1220.2,522.5 1222.0,522.5 1222.0,521.8 1220.1,521.8Z" fill="#635511" stroke="#635511" stroke-width="0.6"/>
<path d="M1232.8,518.8 1234.2,518.1 1234.6,517.0 1233.1,517.7Z" fill="#a48e1d" stroke="#a48e1d" stroke-width="0.6"/>
<path d="M1215.0,520.8 1216.6,521.3 1216.4,520.4 1214.6,519.9Z" fill="#39310a" stroke="#39310a" stroke-width="0.6"/>
<path d="M1222.0,522.5 1223.8,522.4 1223.9,521.6 1222.0,521.8Z" fill="#6d5e13" stroke="#6d5e13" stroke-width="0.6"/>
<path d="M1227.5,521.5 1229.1,521.3 1229.4,520.6 1227.7,520.7Z" fill="#8e7b19" stroke="#8e7b19" stroke-width="0.6"/>
<path d="M1234.6,517.0 1236.0,516.1 1236.2,514.8 1234.9,515.7Z" fill="#a08b1c" stroke="#a08b1c" stroke-width="0.6"/>
<path d="M1223.8,522.4 1225.6,522.0 1225.8,521.3 1223.9,521.6Z" fill="#776615" stroke="#776615" stroke-width="0.6"/>
<path d="M1236.2,514.8 1237.4,513.8 1237.6,512.3 1236.4,513.3Z" fill="#99851b" stroke="#99851b" stroke-width="0.6"/>
<path d="M1216.6,521.3 1218.4,521.7 1218.2,520.8 1216.4,520.4Z" fill="#362f0a" stroke="#362f0a" stroke-width="0.6"/>
<path d="M1229.4,520.6 1230.9,520.2 1231.3,519.3 1229.6,519.7Z" fill="#927e1a" stroke="#927e1a" stroke-width="0.6"/>
<path d="M1225.6,522.0 1227.5,521.5 1227.7,520.7 1225.8,521.3Z" fill="#806e17" stroke="#806e17" stroke-width="0.6"/>
<path d="M1231.3,519.3 1232.8,518.8 1233.1,517.7 1231.5,518.3Z" fill="#937f1a" stroke="#937f1a" stroke-width="0.6"/>
<path d="M1218.4,521.7 1220.1,521.8 1220.1,520.9 1218.2,520.8Z" fill="#42390c" stroke="#42390c" stroke-width="0.6"/>
<path d="M1233.1,517.7 1234.6,517.0 1234.9,515.7 1233.3,516.5Z" fill="#917d1a" stroke="#917d1a" stroke-width="0.6"/>
<path d="M1220.1,521.8 1222.0,521.8 1222.0,520.9 1220.1,520.9Z" fill="#4d430e" stroke="#4d430e" stroke-width="0.6"/>
<path d="M1234.9,515.7 1236.2,514.8 1236.4,513.3 1235.0,514.3Z" fill="#8c7919" stroke="#8c7919" stroke-width="0.6"/>
<path d="M1227.7,520.7 1229.4,520.6 1229.6,519.7 1227.8,519.9Z" fill="#7d6c16" stroke="#7d6c16" stroke-width="0.6"/>
<path d="M1214.6,519.9 1216.4,520.4 1216.2,519.3 1214.4,518.7Z" fill="#52470e" stroke="#52470e" stroke-width="0.6"/>
<path d="M1222.0,521.8 1223.9,521.6 1223.9,520.8 1222.0,520.9Z" fill="#594d10" stroke="#594d10" stroke-width="0.6"/>
<path d="M1223.9,521.6 1225.8,521.3 1225.9,520.4 1223.9,520.8Z" fill="#645612" stroke="#645612" stroke-width="0.6"/>
<path d="M1229.6,519.7 1231.3,519.3 1231.5,518.3 1229.8,518.7Z" fill="#806f17" stroke="#806f17" stroke-width="0.6"/>
<path d="M1225.8,521.3 1227.7,520.7 1227.8,519.9 1225.9,520.4Z" fill="#6e5f14" stroke="#6e5f14" stroke-width="0.6"/>
<path d="M1216.4,520.4 1218.2,520.8 1218.1,519.7 1216.2,519.3Z" fill="#453c0c" stroke="#453c0c" stroke-width="0.6"/>
<path d="M1231.5,518.3 1233.1,517.7 1233.3,516.5 1231.7,517.1Z" fill="#806f17" stroke="#806f17" stroke-width="0.6"/>
<path d="M1233.3,516.5 1234.9,515.7 1235.0,514.3 1233.4,515.1Z" fill="#7d6c16" stroke="#7d6c16" stroke-width="0.6"/>
<path d="M1218.2,520.8 1220.1,520.9 1220.0,519.9 1218.1,519.7Z" fill="#39310a" stroke="#39310a" stroke-width="0.6"/>
<path d="M1227.8,519.9 1229.6,519.7 1229.8,518.7 1227.9,518.9Z" fill="#6d5e13" stroke="#6d5e13" stroke-width="0.6"/>
<path d="M1220.1,520.9 1222.0,520.9 1222.0,519.9 1220.0,519.9Z" fill="#38300a" stroke="#38300a" stroke-width="0.6"/>
<path d="M1222.0,520.9 1223.9,520.8 1224.0,519.8 1222.0,519.9Z" fill="#443b0c" stroke="#443b0c" stroke-width="0.6"/>
<path d="M1229.8,518.7 1231.5,518.3 1231.7,517.1 1229.9,517.6Z" fill="#6f5f14" stroke="#6f5f14" stroke-width="0.6"/>
<path d="M1214.4,518.7 1216.2,519.3 1216.1,518.0 1214.3,517.4Z" fill="#6a5b13" stroke="#6a5b13" stroke-width="0.6"/>
<path d="M1225.9,520.4 1227.8,519.9 1227.9,518.9 1226.0,519.4Z" fill="#5d5111" stroke="#5d5111" stroke-width="0.6"/>
<path d="M1223.9,520.8 1225.9,520.4 1226.0,519.4 1224.0,519.8Z" fill="#51460e" stroke="#51460e" stroke-width="0.6"/>
<path d="M1231.7,517.1 1233.3,516.5 1233.4,515.1 1231.7,515.9Z" fill="#6d5e13" stroke="#6d5e13" stroke-width="0.6"/>
<path d="M1216.2,519.3 1218.1,519.7 1218.0,518.4 1216.1,518.0Z" fill="#5d5010" stroke="#5d5010" stroke-width="0.6"/>
<path d="M1227.9,518.9 1229.8,518.7 1229.9,517.6 1228.0,518.0Z" fill="#5c4f10" stroke="#5c4f10" stroke-width="0.6"/>
<path d="M1218.1,519.7 1220.0,519.9 1220.0,518.6 1218.0,518.4Z" fill="#4f450e" stroke="#4f450e" stroke-width="0.6"/>
<path d="M1229.9,517.6 1231.7,517.1 1231.7,515.9 1229.9,516.5Z" fill="#5c5010" stroke="#5c5010" stroke-width="0.6"/>
<path d="M1226.0,519.4 1227.9,518.9 1228.0,518.0 1226.0,518.4Z" fill="#4c420e" stroke="#4c420e" stroke-width="0.6"/>
<path d="M1220.0,519.9 1222.0,519.9 1222.0,518.7 1220.0,518.6Z" fill="#42390c" stroke="#42390c" stroke-width="0.6"/>
<path d="M1224.0,519.8 1226.0,519.4 1226.0,518.4 1224.0,518.6Z" fill="#3e360b" stroke="#3e360b" stroke-width="0.6"/>
<path d="M1222.0,519.9 1224.0,519.8 1224.0,518.6 1222.0,518.7Z" fill="#332c09" stroke="#332c09" stroke-width="0.6"/>
<path d="M1214.3,517.4 1216.1,518.0 1216.1,516.5 1214.2,516.0Z" fill="#817017" stroke="#817017" stroke-width="0.6"/>
<path d="M1228.0,518.0 1229.9,517.6 1229.9,516.5 1228.0,516.9Z" fill="#4b410d" stroke="#4b410d" stroke-width="0.6"/>
<path d="M1216.1,518.0 1218.0,518.4 1218.0,517.0 1216.1,516.5Z" fill="#746415" stroke="#746415" stroke-width="0.6"/>
<path d="M1226.0,518.4 1228.0,518.0 1228.0,516.9 1226.1,517.2Z" fill="#3c340b" stroke="#3c340b" stroke-width="0.6"/>
<path d="M1218.0,518.4 1220.0,518.6 1220.0,517.3 1218.0,517.0Z" fill="#665812" stroke="#665812" stroke-width="0.6"/>
<path d="M1224.0,518.6 1226.0,518.4 1226.1,517.2 1224.1,517.4Z" fill="#38300a" stroke="#38300a" stroke-width="0.6"/>
<path d="M1220.0,518.6 1222.0,518.7 1222.0,517.4 1220.0,517.3Z" fill="#574b0f" stroke="#574b0f" stroke-width="0.6"/>
<path d="M1222.0,518.7 1224.0,518.6 1224.1,517.4 1222.0,517.4Z" fill="#473e0d" stroke="#473e0d" stroke-width="0.6"/>
<path d="M1061.1,293.0 1225.5,343.7 1307.3,253.8 1152.2,210.9Z" fill="#fad82c" stroke="#fad82c" stroke-width="0.6"/>
<path d="M1060.8,461.0 1214.2,516.0 1216.2,369.4 1052.0,317.5Z" fill="#937f1a" stroke="#937f1a" stroke-width="0.6"/>
<path d="M1045.2,300.6 1045.8,299.4 1046.6,298.1 1046.0,299.2Z" fill="#ffe22e" stroke="#ffe22e" stroke-width="0.6"/>
<path d="M1046.6,298.1 1047.4,297.1 1048.4,295.9 1047.6,296.8Z" fill="#ffe72f" stroke="#ffe72f" stroke-width="0.6"/>
<path d="M1044.2,303.3 1044.6,302.1 1045.2,300.6 1044.8,301.9Z" fill="#fcda2d" stroke="#fcda2d" stroke-width="0.6"/>
<path d="M1043.6,310.2 1043.5,309.1 1043.5,307.6 1043.6,308.9Z" fill="#ceb124" stroke="#ceb124" stroke-width="0.6"/>
<path d="M1048.4,295.9 1049.2,295.1 1050.3,294.1 1049.5,294.9Z" fill="#ffe930" stroke="#ffe930" stroke-width="0.6"/>
<path d="M1043.6,306.2 1043.8,304.9 1044.2,303.3 1044.0,304.7Z" fill="#efce2a" stroke="#efce2a" stroke-width="0.6"/>
<path d="M1043.6,308.9 1043.5,307.6 1043.6,306.2 1043.7,307.5Z" fill="#dfc027" stroke="#dfc027" stroke-width="0.6"/>
<path d="M1046.0,299.2 1046.6,298.1 1047.6,296.8 1047.0,297.9Z" fill="#ffec30" stroke="#ffec30" stroke-width="0.6"/>
<path d="M1044.8,301.9 1045.2,300.6 1046.0,299.2 1045.5,300.4Z" fill="#ffe52f" stroke="#ffe52f" stroke-width="0.6"/>
<path d="M1047.6,296.8 1048.4,295.9 1049.5,294.9 1048.8,295.7Z" fill="#ffef31" stroke="#ffef31" stroke-width="0.6"/>
<path d="M1044.0,304.7 1044.2,303.3 1044.8,301.9 1044.5,303.2Z" fill="#fedb2d" stroke="#fedb2d" stroke-width="0.6"/>
<path d="M1049.5,294.9 1050.7,294.2 1051.5,293.4 1050.3,294.1Z" fill="#ffef31" stroke="#ffef31" stroke-width="0.6"/>
<path d="M1043.9,311.3 1043.6,310.2 1043.6,308.9 1043.9,310.1Z" fill="#ceb124" stroke="#ceb124" stroke-width="0.6"/>
<path d="M1043.7,307.5 1043.6,306.2 1044.0,304.7 1044.0,306.1Z" fill="#efce2a" stroke="#efce2a" stroke-width="0.6"/>
<path d="M1045.5,300.4 1046.0,299.2 1047.0,297.9 1046.5,299.1Z" fill="#ffef31" stroke="#ffef31" stroke-width="0.6"/>
<path d="M1047.0,297.9 1047.6,296.8 1048.8,295.7 1048.2,296.7Z" fill="#fff332" stroke="#fff332" stroke-width="0.6"/>
<path d="M1044.5,303.2 1044.8,301.9 1045.5,300.4 1045.2,301.8Z" fill="#ffe72f" stroke="#ffe72f" stroke-width="0.6"/>
<path d="M1043.9,310.1 1043.6,308.9 1043.7,307.5 1044.0,308.9Z" fill="#ddbf27" stroke="#ddbf27" stroke-width="0.6"/>
<path d="M1048.8,295.7 1049.9,295.2 1050.7,294.2 1049.5,294.9Z" fill="#fff532" stroke="#fff532" stroke-width="0.6"/>
<path d="M1044.0,306.1 1044.0,304.7 1044.5,303.2 1044.4,304.7Z" fill="#fddb2d" stroke="#fddb2d" stroke-width="0.6"/>
<path d="M1050.7,294.2 1052.0,293.7 1052.9,292.8 1051.5,293.4Z" fill="#fff332" stroke="#fff332" stroke-width="0.6"/>
<path d="M1043.9,311.3 1044.5,312.4 1044.4,311.1 1043.9,310.1Z" fill="#cdb124" stroke="#cdb124" stroke-width="0.6"/>
<path d="M1046.5,299.1 1047.0,297.9 1048.2,296.7 1047.7,297.8Z" fill="#fff632" stroke="#fff632" stroke-width="0.6"/>
<path d="M1044.0,308.9 1043.7,307.5 1044.0,306.1 1044.2,307.6Z" fill="#eccc2a" stroke="#eccc2a" stroke-width="0.6"/>
<path d="M1045.2,301.8 1045.5,300.4 1046.5,299.1 1046.1,300.4Z" fill="#fff031" stroke="#fff031" stroke-width="0.6"/>
<path d="M1048.2,296.7 1049.3,296.3 1049.9,295.2 1048.8,295.7Z" fill="#fff933" stroke="#fff933" stroke-width="0.6"/>
<path d="M1044.4,304.7 1044.5,303.2 1045.2,301.8 1045.0,303.3Z" fill="#ffe62f" stroke="#ffe62f" stroke-width="0.6"/>
<path d="M1043.9,310.1 1044.4,311.1 1044.6,309.7 1044.0,308.9Z" fill="#dcbe27" stroke="#dcbe27" stroke-width="0.6"/>
<path d="M1044.2,307.6 1044.0,306.1 1044.4,304.7 1044.6,306.2Z" fill="#fad82c" stroke="#fad82c" stroke-width="0.6"/>
<path d="M1049.9,295.2 1051.2,294.8 1052.0,293.7 1050.7,294.2Z" fill="#fff933" stroke="#fff933" stroke-width="0.6"/>
<path d="M1046.1,300.4 1046.5,299.1 1047.7,297.8 1047.2,299.0Z" fill="#fff833" stroke="#fff833" stroke-width="0.6"/>
<path d="M1052.0,293.7 1053.4,293.4 1054.4,292.5 1052.9,292.8Z" fill="#fff532" stroke="#fff532" stroke-width="0.6"/>
<path d="M1045.0,303.3 1045.2,301.8 1046.1,300.4 1045.9,301.8Z" fill="#fff031" stroke="#fff031" stroke-width="0.6"/>
<path d="M1047.7,297.8 1048.7,297.5 1049.3,296.3 1048.2,296.7Z" fill="#fffc34" stroke="#fffc34" stroke-width="0.6"/>
<path d="M1044.0,308.9 1044.6,309.7 1044.8,308.2 1044.2,307.6Z" fill="#ebcb2a" stroke="#ebcb2a" stroke-width="0.6"/>
<path d="M1044.5,312.4 1045.2,313.5 1045.2,312.0 1044.4,311.1Z" fill="#caaf24" stroke="#caaf24" stroke-width="0.6"/>
<path d="M1044.6,306.2 1044.4,304.7 1045.0,303.3 1045.1,304.8Z" fill="#ffe32e" stroke="#ffe32e" stroke-width="0.6"/>
<path d="M1049.3,296.3 1050.4,296.0 1051.2,294.8 1049.9,295.2Z" fill="#fffe34" stroke="#fffe34" stroke-width="0.6"/>
<path d="M1045.9,301.8 1046.1,300.4 1047.2,299.0 1046.9,300.4Z" fill="#fff833" stroke="#fff833" stroke-width="0.6"/>
<path d="M1047.2,299.0 1048.2,298.9 1048.7,297.5 1047.7,297.8Z" fill="#fffd34" stroke="#fffd34" stroke-width="0.6"/>
<path d="M1044.2,307.6 1044.8,308.2 1045.2,306.8 1044.6,306.2Z" fill="#f9d72c" stroke="#f9d72c" stroke-width="0.6"/>
<path d="M1051.2,294.8 1052.5,294.6 1053.4,293.4 1052.0,293.7Z" fill="#fffb33" stroke="#fffb33" stroke-width="0.6"/>
<path d="M1045.1,304.8 1045.0,303.3 1045.9,301.8 1045.8,303.4Z" fill="#ffed30" stroke="#ffed30" stroke-width="0.6"/>
<path d="M1044.4,311.1 1045.2,312.0 1045.4,310.5 1044.6,309.7Z" fill="#dcbe27" stroke="#dcbe27" stroke-width="0.6"/>
<path d="M1053.4,293.4 1054.9,293.3 1055.9,292.3 1054.4,292.5Z" fill="#fff432" stroke="#fff432" stroke-width="0.6"/>
<path d="M1048.7,297.5 1049.8,297.4 1050.4,296.0 1049.3,296.3Z" fill="#ffff34" stroke="#ffff34" stroke-width="0.6"/>
<path d="M1044.6,306.2 1045.2,306.8 1045.8,305.2 1045.1,304.8Z" fill="#ffe22e" stroke="#ffe22e" stroke-width="0.6"/>
<path d="M1045.8,303.4 1045.9,301.8 1046.9,300.4 1046.7,301.9Z" fill="#fff532" stroke="#fff532" stroke-width="0.6"/>
<path d="M1045.2,313.5 1046.2,314.4 1046.2,312.8 1045.2,312.0Z" fill="#c6ab23" stroke="#c6ab23" stroke-width="0.6"/>
<path d="M1044.6,309.7 1045.4,310.5 1045.7,308.9 1044.8,308.2Z" fill="#eccb2a" stroke="#eccb2a" stroke-width="0.6"/>
<path d="M1046.9,300.4 1047.8,300.4 1048.2,298.9 1047.2,299.0Z" fill="#fffd34" stroke="#fffd34" stroke-width="0.6"/>
<path d="M1050.4,296.0 1051.7,295.9 1052.5,294.6 1051.2,294.8Z" fill="#ffff34" stroke="#ffff34" stroke-width="0.6"/>
<path d="M1052.5,294.6 1054.0,294.5 1054.9,293.3 1053.4,293.4Z" fill="#fffa33" stroke="#fffa33" stroke-width="0.6"/>
<path d="M1045.1,304.8 1045.8,305.2 1046.6,303.7 1045.8,303.4Z" fill="#ffec30" stroke="#ffec30" stroke-width="0.6"/>
<path d="M1054.9,293.3 1056.5,293.4 1057.6,292.3 1055.9,292.3Z" fill="#fff031" stroke="#fff031" stroke-width="0.6"/>
<path d="M1048.2,298.9 1049.3,298.9 1049.8,297.4 1048.7,297.5Z" fill="#ffff35" stroke="#ffff35" stroke-width="0.6"/>
<path d="M1044.8,308.2 1045.7,308.9 1046.1,307.3 1045.2,306.8Z" fill="#fad82c" stroke="#fad82c" stroke-width="0.6"/>
<path d="M1045.2,312.0 1046.2,312.8 1046.4,311.2 1045.4,310.5Z" fill="#d9bb26" stroke="#d9bb26" stroke-width="0.6"/>
<path d="M1046.7,301.9 1047.6,302.1 1047.8,300.4 1046.9,300.4Z" fill="#fffa33" stroke="#fffa33" stroke-width="0.6"/>
<path d="M1045.8,303.4 1046.6,303.7 1047.6,302.1 1046.7,301.9Z" fill="#fff432" stroke="#fff432" stroke-width="0.6"/>
<path d="M1049.8,297.4 1051.0,297.3 1051.7,295.9 1050.4,296.0Z" fill="#ffff35" stroke="#ffff35" stroke-width="0.6"/>
<path d="M1046.2,314.4 1047.4,315.3 1047.4,313.7 1046.2,312.8Z" fill="#c1a622" stroke="#c1a622" stroke-width="0.6"/>
<path d="M1045.2,306.8 1046.1,307.3 1046.7,305.6 1045.8,305.2Z" fill="#ffe32f" stroke="#ffe32f" stroke-width="0.6"/>
<path d="M1051.7,295.9 1053.1,295.9 1054.0,294.5 1052.5,294.6Z" fill="#ffff34" stroke="#ffff34" stroke-width="0.6"/>
<path d="M1045.4,310.5 1046.4,311.2 1046.7,309.5 1045.7,308.9Z" fill="#eaca29" stroke="#eaca29" stroke-width="0.6"/>
<path d="M1047.8,300.4 1048.9,300.5 1049.3,298.9 1048.2,298.9Z" fill="#ffff34" stroke="#ffff34" stroke-width="0.6"/>
<path d="M1056.5,293.4 1058.2,293.7 1059.3,292.6 1057.6,292.3Z" fill="#ffea30" stroke="#ffea30" stroke-width="0.6"/>
<path d="M1054.0,294.5 1055.5,294.7 1056.5,293.4 1054.9,293.3Z" fill="#fff733" stroke="#fff733" stroke-width="0.6"/>
<path d="M1045.8,305.2 1046.7,305.6 1047.6,304.0 1046.6,303.7Z" fill="#ffed31" stroke="#ffed31" stroke-width="0.6"/>
<path d="M1049.3,298.9 1050.4,298.9 1051.0,297.3 1049.8,297.4Z" fill="#ffff35" stroke="#ffff35" stroke-width="0.6"/>
<path d="M1046.2,312.8 1047.4,313.7 1047.5,311.9 1046.4,311.2Z" fill="#d4b725" stroke="#d4b725" stroke-width="0.6"/>
<path d="M1045.7,308.9 1046.7,309.5 1047.1,307.8 1046.1,307.3Z" fill="#f9d72c" stroke="#f9d72c" stroke-width="0.6"/>
<path d="M1047.6,302.1 1048.6,302.3 1048.9,300.5 1047.8,300.4Z" fill="#fffb33" stroke="#fffb33" stroke-width="0.6"/>
<path d="M1051.0,297.3 1052.4,297.4 1053.1,295.9 1051.7,295.9Z" fill="#ffff35" stroke="#ffff35" stroke-width="0.6"/>
<path d="M1046.6,303.7 1047.6,304.0 1048.6,302.3 1047.6,302.1Z" fill="#fff532" stroke="#fff532" stroke-width="0.6"/>
<path d="M1047.4,315.3 1048.8,316.1 1048.8,314.4 1047.4,313.7Z" fill="#b9a021" stroke="#b9a021" stroke-width="0.6"/>
<path d="M1058.2,293.7 1060.0,294.1 1061.1,293.0 1059.3,292.6Z" fill="#ffe22e" stroke="#ffe22e" stroke-width="0.6"/>
<path d="M1053.1,295.9 1054.6,296.1 1055.5,294.7 1054.0,294.5Z" fill="#fffb33" stroke="#fffb33" stroke-width="0.6"/>
<path d="M1055.5,294.7 1057.2,295.0 1058.2,293.7 1056.5,293.4Z" fill="#fff131" stroke="#fff131" stroke-width="0.6"/>
<path d="M1046.1,307.3 1047.1,307.8 1047.8,306.1 1046.7,305.6Z" fill="#ffe32e" stroke="#ffe32e" stroke-width="0.6"/>
<path d="M1048.9,300.5 1050.0,300.7 1050.4,298.9 1049.3,298.9Z" fill="#ffff34" stroke="#ffff34" stroke-width="0.6"/>
<path d="M1046.4,311.2 1047.5,311.9 1047.8,310.2 1046.7,309.5Z" fill="#e6c629" stroke="#e6c629" stroke-width="0.6"/>
<path d="M1050.4,298.9 1051.7,299.1 1052.4,297.4 1051.0,297.3Z" fill="#ffff34" stroke="#ffff34" stroke-width="0.6"/>
<path d="M1046.7,305.6 1047.8,306.1 1048.6,304.3 1047.6,304.0Z" fill="#ffec30" stroke="#ffec30" stroke-width="0.6"/>
<path d="M1047.4,313.7 1048.8,314.4 1048.9,312.6 1047.5,311.9Z" fill="#cdb124" stroke="#cdb124" stroke-width="0.6"/>
<path d="M1046.7,309.5 1047.8,310.2 1048.3,308.3 1047.1,307.8Z" fill="#f5d42b" stroke="#f5d42b" stroke-width="0.6"/>
<path d="M1048.6,302.3 1049.6,302.6 1050.0,300.7 1048.9,300.5Z" fill="#fffb33" stroke="#fffb33" stroke-width="0.6"/>
<path d="M1052.4,297.4 1053.8,297.7 1054.6,296.1 1053.1,295.9Z" fill="#fffd34" stroke="#fffd34" stroke-width="0.6"/>
<path d="M1048.8,316.1 1050.3,316.9 1050.3,315.1 1048.8,314.4Z" fill="#af971f" stroke="#af971f" stroke-width="0.6"/>
<path d="M1057.2,295.0 1058.9,295.4 1060.0,294.1 1058.2,293.7Z" fill="#ffe930" stroke="#ffe930" stroke-width="0.6"/>
<path d="M1054.6,296.1 1056.2,296.4 1057.2,295.0 1055.5,294.7Z" fill="#fff632" stroke="#fff632" stroke-width="0.6"/>
<path d="M1047.6,304.0 1048.6,304.3 1049.6,302.6 1048.6,302.3Z" fill="#fff432" stroke="#fff432" stroke-width="0.6"/>
<path d="M1050.0,300.7 1051.2,300.9 1051.7,299.1 1050.4,298.9Z" fill="#fffe34" stroke="#fffe34" stroke-width="0.6"/>
<path d="M1047.1,307.8 1048.3,308.3 1049.0,306.5 1047.8,306.1Z" fill="#ffe02e" stroke="#ffe02e" stroke-width="0.6"/>
<path d="M1047.5,311.9 1048.9,312.6 1049.2,310.8 1047.8,310.2Z" fill="#dfc127" stroke="#dfc127" stroke-width="0.6"/>
<path d="M1051.7,299.1 1053.0,299.4 1053.8,297.7 1052.4,297.4Z" fill="#fffd34" stroke="#fffd34" stroke-width="0.6"/>
<path d="M1048.8,314.4 1050.3,315.1 1050.4,313.3 1048.9,312.6Z" fill="#c4a923" stroke="#c4a923" stroke-width="0.6"/>
<path d="M1047.8,306.1 1049.0,306.5 1049.8,304.7 1048.6,304.3Z" fill="#ffea30" stroke="#ffea30" stroke-width="0.6"/>
<path d="M1050.3,316.9 1052.0,317.5 1052.0,315.7 1050.3,315.1Z" fill="#a48e1d" stroke="#a48e1d" stroke-width="0.6"/>
<path d="M1053.8,297.7 1055.3,298.0 1056.2,296.4 1054.6,296.1Z" fill="#fff833" stroke="#fff833" stroke-width="0.6"/>
<path d="M1049.6,302.6 1050.7,302.9 1051.2,300.9 1050.0,300.7Z" fill="#fff833" stroke="#fff833" stroke-width="0.6"/>
<path d="M1056.2,296.4 1057.8,296.9 1058.9,295.4 1057.2,295.0Z" fill="#ffee31" stroke="#ffee31" stroke-width="0.6"/>
<path d="M1047.8,310.2 1049.2,310.8 1049.6,308.9 1048.3,308.3Z" fill="#f0cf2a" stroke="#f0cf2a" stroke-width="0.6"/>
<path d="M1048.6,304.3 1049.8,304.7 1050.7,302.9 1049.6,302.6Z" fill="#fff231" stroke="#fff231" stroke-width="0.6"/>
<path d="M1051.2,300.9 1052.4,301.2 1053.0,299.4 1051.7,299.1Z" fill="#fffa33" stroke="#fffa33" stroke-width="0.6"/>
<path d="M1048.9,312.6 1050.4,313.3 1050.7,311.3 1049.2,310.8Z" fill="#d7ba26" stroke="#d7ba26" stroke-width="0.6"/>
<path d="M1048.3,308.3 1049.6,308.9 1050.2,307.0 1049.0,306.5Z" fill="#fedb2d" stroke="#fedb2d" stroke-width="0.6"/>
<path d="M1053.0,299.4 1054.4,299.7 1055.3,298.0 1053.8,297.7Z" fill="#fff733" stroke="#fff733" stroke-width="0.6"/>
<path d="M1050.3,315.1 1052.0,315.7 1052.1,313.8 1050.4,313.3Z" fill="#baa021" stroke="#baa021" stroke-width="0.6"/>
<path d="M1055.3,298.0 1056.8,298.4 1057.8,296.9 1056.2,296.4Z" fill="#fff031" stroke="#fff031" stroke-width="0.6"/>
<path d="M1049.0,306.5 1050.2,307.0 1051.0,305.1 1049.8,304.7Z" fill="#ffe52f" stroke="#ffe52f" stroke-width="0.6"/>
<path d="M1050.7,302.9 1051.9,303.2 1052.4,301.2 1051.2,300.9Z" fill="#fff432" stroke="#fff432" stroke-width="0.6"/>
<path d="M1049.8,304.7 1051.0,305.1 1051.9,303.2 1050.7,302.9Z" fill="#ffed31" stroke="#ffed31" stroke-width="0.6"/>
<path d="M1049.2,310.8 1050.7,311.3 1051.1,309.4 1049.6,308.9Z" fill="#e8c829" stroke="#e8c829" stroke-width="0.6"/>
<path d="M1052.4,301.2 1053.7,301.6 1054.4,299.7 1053.0,299.4Z" fill="#fff432" stroke="#fff432" stroke-width="0.6"/>
<path d="M1050.4,313.3 1052.1,313.8 1052.3,311.9 1050.7,311.3Z" fill="#cdb124" stroke="#cdb124" stroke-width="0.6"/>
<path d="M1049.6,308.9 1051.1,309.4 1051.6,307.4 1050.2,307.0Z" fill="#f7d52c" stroke="#f7d52c" stroke-width="0.6"/>
<path d="M1054.4,299.7 1055.9,300.2 1056.8,298.4 1055.3,298.0Z" fill="#fff031" stroke="#fff031" stroke-width="0.6"/>
<path d="M1051.9,303.2 1053.1,303.5 1053.7,301.6 1052.4,301.2Z" fill="#ffef31" stroke="#ffef31" stroke-width="0.6"/>
<path d="M1050.2,307.0 1051.6,307.4 1052.3,305.5 1051.0,305.1Z" fill="#ffe02e" stroke="#ffe02e" stroke-width="0.6"/>
<path d="M1051.0,305.1 1052.3,305.5 1053.1,303.5 1051.9,303.2Z" fill="#ffe82f" stroke="#ffe82f" stroke-width="0.6"/>
<path d="M1050.7,311.3 1052.3,311.9 1052.6,309.9 1051.1,309.4Z" fill="#dec027" stroke="#dec027" stroke-width="0.6"/>
<path d="M1053.7,301.6 1055.1,302.0 1055.9,300.2 1054.4,299.7Z" fill="#ffed31" stroke="#ffed31" stroke-width="0.6"/>
<path d="M1242.4,364.9 1322.6,273.5 1322.6,271.7 1242.3,363.1Z" fill="#95811a" stroke="#95811a" stroke-width="0.6"/>
<path d="M1051.1,309.4 1052.6,309.9 1053.1,307.9 1051.6,307.4Z" fill="#eecd2a" stroke="#eecd2a" stroke-width="0.6"/>
<path d="M1053.1,303.5 1054.3,303.9 1055.1,302.0 1053.7,301.6Z" fill="#ffe82f" stroke="#ffe82f" stroke-width="0.6"/>
<path d="M1051.6,307.4 1053.1,307.9 1053.6,305.9 1052.3,305.5Z" fill="#fad82c" stroke="#fad82c" stroke-width="0.6"/>
<path d="M1052.3,305.5 1053.6,305.9 1054.3,303.9 1053.1,303.5Z" fill="#ffe12e" stroke="#ffe12e" stroke-width="0.6"/>
<path d="M1242.3,363.1 1322.6,271.7 1322.4,270.0 1242.0,361.2Z" fill="#7d6c16" stroke="#7d6c16" stroke-width="0.6"/>
<path d="M1242.0,361.2 1322.4,270.0 1322.0,268.2 1241.5,359.4Z" fill="#645712" stroke="#645712" stroke-width="0.6"/>
<path d="M1241.5,359.4 1322.0,268.2 1321.4,266.5 1240.8,357.5Z" fill="#4b410d" stroke="#4b410d" stroke-width="0.6"/>
<path d="M1225.5,343.7 1227.4,344.4 1309.1,254.4 1307.3,253.8Z" fill="#f4d32b" stroke="#f4d32b" stroke-width="0.6"/>
<path d="M1240.8,357.5 1321.4,266.5 1320.6,264.7 1239.9,355.7Z" fill="#322c09" stroke="#322c09" stroke-width="0.6"/>
<path d="M1227.4,344.4 1229.3,345.3 1310.8,255.2 1309.1,254.4Z" fill="#e5c628" stroke="#e5c628" stroke-width="0.6"/>
<path d="M1239.9,355.7 1320.6,264.7 1319.6,263.1 1238.8,353.9Z" fill="#4c420d" stroke="#4c420d" stroke-width="0.6"/>
<path d="M1229.3,345.3 1231.1,346.4 1312.6,256.2 1310.8,255.2Z" fill="#d4b725" stroke="#d4b725" stroke-width="0.6"/>
<path d="M1238.8,353.9 1319.6,263.1 1318.5,261.5 1237.6,352.2Z" fill="#665812" stroke="#665812" stroke-width="0.6"/>
<path d="M1236.2,350.5 1237.6,352.2 1318.5,261.5 1317.2,260.0Z" fill="#7d6c16" stroke="#7d6c16" stroke-width="0.6"/>
<path d="M1231.1,346.4 1232.9,347.6 1314.2,257.3 1312.6,256.2Z" fill="#c1a622" stroke="#c1a622" stroke-width="0.6"/>
<path d="M1234.6,349.0 1236.2,350.5 1317.2,260.0 1315.8,258.6Z" fill="#95811a" stroke="#95811a" stroke-width="0.6"/>
<path d="M1232.9,347.6 1234.6,349.0 1315.8,258.6 1314.2,257.3Z" fill="#ac941e" stroke="#ac941e" stroke-width="0.6"/>
<path d="M1237.6,512.3 1238.6,511.1 1242.4,364.9 1241.3,366.0Z" fill="#9b861b" stroke="#9b861b" stroke-width="0.6"/>
<path d="M1236.4,513.3 1237.6,512.3 1241.3,366.0 1240.0,367.0Z" fill="#8f7b19" stroke="#8f7b19" stroke-width="0.6"/>
<path d="M1235.0,514.3 1236.4,513.3 1240.0,367.0 1238.5,367.9Z" fill="#816f17" stroke="#816f17" stroke-width="0.6"/>
<path d="M1233.4,515.1 1235.0,514.3 1238.5,367.9 1236.8,368.7Z" fill="#736314" stroke="#736314" stroke-width="0.6"/>
<path d="M1231.7,515.9 1233.4,515.1 1236.8,368.7 1235.0,369.4Z" fill="#635612" stroke="#635612" stroke-width="0.6"/>
<path d="M1229.9,516.5 1231.7,515.9 1235.0,369.4 1233.1,369.9Z" fill="#53480f" stroke="#53480f" stroke-width="0.6"/>
<path d="M1214.2,516.0 1216.1,516.5 1218.2,370.0 1216.2,369.4Z" fill="#8d7a19" stroke="#8d7a19" stroke-width="0.6"/>
<path d="M1228.0,516.9 1229.9,516.5 1233.1,369.9 1231.1,370.4Z" fill="#433a0c" stroke="#433a0c" stroke-width="0.6"/>
<path d="M1216.1,516.5 1218.0,517.0 1220.3,370.4 1218.2,370.0Z" fill="#7f6e16" stroke="#7f6e16" stroke-width="0.6"/>
<path d="M1226.1,517.2 1228.0,516.9 1231.1,370.4 1229.0,370.7Z" fill="#332c09" stroke="#332c09" stroke-width="0.6"/>
<path d="M1218.0,517.0 1220.0,517.3 1222.4,370.7 1220.3,370.4Z" fill="#716114" stroke="#716114" stroke-width="0.6"/>
<path d="M1224.1,517.4 1226.1,517.2 1229.0,370.7 1226.8,370.8Z" fill="#41380b" stroke="#41380b" stroke-width="0.6"/>
<path d="M1220.0,517.3 1222.0,517.4 1224.6,370.8 1222.4,370.7Z" fill="#615411" stroke="#615411" stroke-width="0.6"/>
<path d="M1222.0,517.4 1224.1,517.4 1226.8,370.8 1224.6,370.8Z" fill="#51460e" stroke="#51460e" stroke-width="0.6"/>
<path d="M1060.0,294.1 1224.5,344.9 1225.5,343.7 1061.1,293.0Z" fill="#ffdd2d" stroke="#ffdd2d" stroke-width="0.6"/>
<path d="M1058.9,295.4 1223.5,346.3 1224.5,344.9 1060.0,294.1Z" fill="#ffe42f" stroke="#ffe42f" stroke-width="0.6"/>
<path d="M1052.0,317.5 1216.2,369.4 1216.3,367.6 1052.0,315.7Z" fill="#9e891c" stroke="#9e891c" stroke-width="0.6"/>
<path d="M1057.8,296.9 1222.5,347.9 1223.5,346.3 1058.9,295.4Z" fill="#ffe930" stroke="#ffe930" stroke-width="0.6"/>
<path d="M1052.0,315.7 1216.3,367.6 1216.5,365.7 1052.1,313.8Z" fill="#b49b20" stroke="#b49b20" stroke-width="0.6"/>
<path d="M1056.8,298.4 1221.5,349.6 1222.5,347.9 1057.8,296.9Z" fill="#ffeb30" stroke="#ffeb30" stroke-width="0.6"/>
<path d="M1052.1,313.8 1216.5,365.7 1216.8,363.7 1052.3,311.9Z" fill="#c7ac23" stroke="#c7ac23" stroke-width="0.6"/>
<path d="M1055.9,300.2 1220.7,351.4 1221.5,349.6 1056.8,298.4Z" fill="#ffeb30" stroke="#ffeb30" stroke-width="0.6"/>
<path d="M1052.3,311.9 1216.8,363.7 1217.2,361.6 1052.6,309.9Z" fill="#d9bb26" stroke="#d9bb26" stroke-width="0.6"/>
<path d="M1055.1,302.0 1219.8,353.3 1220.7,351.4 1055.9,300.2Z" fill="#ffe930" stroke="#ffe930" stroke-width="0.6"/>
<path d="M1052.6,309.9 1217.2,361.6 1217.7,359.5 1053.1,307.9Z" fill="#e8c929" stroke="#e8c929" stroke-width="0.6"/>
<path d="M1054.3,303.9 1219.0,355.4 1219.8,353.3 1055.1,302.0Z" fill="#ffe42f" stroke="#ffe42f" stroke-width="0.6"/>
<path d="M1053.1,307.9 1217.7,359.5 1218.4,357.4 1053.6,305.9Z" fill="#f6d42b" stroke="#f6d42b" stroke-width="0.6"/>
<path d="M1053.6,305.9 1218.4,357.4 1219.0,355.4 1054.3,303.9Z" fill="#ffdd2d" stroke="#ffdd2d" stroke-width="0.6"/>
<path d="M1241.3,366.0 1242.4,364.9 1242.3,363.1 1241.2,364.2Z" fill="#8f7c19" stroke="#8f7c19" stroke-width="0.6"/>
<path d="M1241.2,364.2 1242.3,363.1 1242.0,361.2 1241.0,362.3Z" fill="#786715" stroke="#786715" stroke-width="0.6"/>
<path d="M1240.0,367.0 1241.3,366.0 1241.2,364.2 1239.9,365.2Z" fill="#837117" stroke="#837117" stroke-width="0.6"/>
<path d="M1241.0,362.3 1242.0,361.2 1241.5,359.4 1240.5,360.4Z" fill="#5f5211" stroke="#5f5211" stroke-width="0.6"/>
<path d="M1239.9,365.2 1241.2,364.2 1241.0,362.3 1239.7,363.4Z" fill="#6c5d13" stroke="#6c5d13" stroke-width="0.6"/>
<path d="M1238.5,367.9 1240.0,367.0 1239.9,365.2 1238.5,366.2Z" fill="#766615" stroke="#766615" stroke-width="0.6"/>
<path d="M1240.5,360.4 1241.5,359.4 1240.8,357.5 1239.9,358.5Z" fill="#463c0c" stroke="#463c0c" stroke-width="0.6"/>
<path d="M1239.7,363.4 1241.0,362.3 1240.5,360.4 1239.3,361.5Z" fill="#54490f" stroke="#54490f" stroke-width="0.6"/>
<path d="M1239.9,358.5 1240.8,357.5 1239.9,355.7 1239.0,356.6Z" fill="#37300a" stroke="#37300a" stroke-width="0.6"/>
<path d="M1238.5,366.2 1239.9,365.2 1239.7,363.4 1238.3,364.4Z" fill="#605311" stroke="#605311" stroke-width="0.6"/>
<path d="M1224.5,344.9 1226.4,345.6 1227.4,344.4 1225.5,343.7Z" fill="#f9d72c" stroke="#f9d72c" stroke-width="0.6"/>
<path d="M1236.8,368.7 1238.5,367.9 1238.5,366.2 1236.8,367.0Z" fill="#685a12" stroke="#685a12" stroke-width="0.6"/>
<path d="M1239.3,361.5 1240.5,360.4 1239.9,358.5 1238.7,359.6Z" fill="#3b330b" stroke="#3b330b" stroke-width="0.6"/>
<path d="M1239.0,356.6 1239.9,355.7 1238.8,353.9 1238.0,354.8Z" fill="#51460e" stroke="#51460e" stroke-width="0.6"/>
<path d="M1226.4,345.6 1228.3,346.5 1229.3,345.3 1227.4,344.4Z" fill="#eaca29" stroke="#eaca29" stroke-width="0.6"/>
<path d="M1238.3,364.4 1239.7,363.4 1239.3,361.5 1237.9,362.5Z" fill="#483f0d" stroke="#483f0d" stroke-width="0.6"/>
<path d="M1238.0,354.8 1238.8,353.9 1237.6,352.2 1236.8,353.0Z" fill="#6a5b13" stroke="#6a5b13" stroke-width="0.6"/>
<path d="M1228.3,346.5 1230.2,347.5 1231.1,346.4 1229.3,345.3Z" fill="#d9bb26" stroke="#d9bb26" stroke-width="0.6"/>
<path d="M1236.8,367.0 1238.5,366.2 1238.3,364.4 1236.7,365.3Z" fill="#53470f" stroke="#53470f" stroke-width="0.6"/>
<path d="M1235.0,369.4 1236.8,368.7 1236.8,367.0 1235.0,367.8Z" fill="#594d10" stroke="#594d10" stroke-width="0.6"/>
<path d="M1238.7,359.6 1239.9,358.5 1239.0,356.6 1238.0,357.6Z" fill="#41380b" stroke="#41380b" stroke-width="0.6"/>
<path d="M1235.3,351.4 1236.8,353.0 1237.6,352.2 1236.2,350.5Z" fill="#816f17" stroke="#816f17" stroke-width="0.6"/>
<path d="M1230.2,347.5 1232.0,348.7 1232.9,347.6 1231.1,346.4Z" fill="#c5aa23" stroke="#c5aa23" stroke-width="0.6"/>
<path d="M1223.5,346.3 1225.4,347.0 1226.4,345.6 1224.5,344.9Z" fill="#ffde2e" stroke="#ffde2e" stroke-width="0.6"/>
<path d="M1233.7,350.0 1235.3,351.4 1236.2,350.5 1234.6,349.0Z" fill="#99841b" stroke="#99841b" stroke-width="0.6"/>
<path d="M1232.0,348.7 1233.7,350.0 1234.6,349.0 1232.9,347.6Z" fill="#b0981f" stroke="#b0981f" stroke-width="0.6"/>
<path d="M1237.9,362.5 1239.3,361.5 1238.7,359.6 1237.4,360.6Z" fill="#332c09" stroke="#332c09" stroke-width="0.6"/>
<path d="M1238.0,357.6 1239.0,356.6 1238.0,354.8 1237.1,355.7Z" fill="#594d10" stroke="#594d10" stroke-width="0.6"/>
<path d="M1233.1,369.9 1235.0,369.4 1235.0,367.8 1233.1,368.5Z" fill="#4a400d" stroke="#4a400d" stroke-width="0.6"/>
<path d="M1236.7,365.3 1238.3,364.4 1237.9,362.5 1236.4,363.5Z" fill="#3d340b" stroke="#3d340b" stroke-width="0.6"/>
<path d="M1225.4,347.0 1227.3,347.8 1228.3,346.5 1226.4,345.6Z" fill="#f3d22b" stroke="#f3d22b" stroke-width="0.6"/>
<path d="M1237.1,355.7 1238.0,354.8 1236.8,353.0 1236.0,353.8Z" fill="#716214" stroke="#716214" stroke-width="0.6"/>
<path d="M1235.0,367.8 1236.8,367.0 1236.7,365.3 1234.9,366.2Z" fill="#453c0c" stroke="#453c0c" stroke-width="0.6"/>
<path d="M1237.4,360.6 1238.7,359.6 1238.0,357.6 1236.8,358.6Z" fill="#4a400d" stroke="#4a400d" stroke-width="0.6"/>
<path d="M1234.4,352.4 1236.0,353.8 1236.8,353.0 1235.3,351.4Z" fill="#897618" stroke="#897618" stroke-width="0.6"/>
<path d="M1227.3,347.8 1229.1,348.7 1230.2,347.5 1228.3,346.5Z" fill="#e1c328" stroke="#e1c328" stroke-width="0.6"/>
<path d="M1216.2,369.4 1218.2,370.0 1218.3,368.2 1216.3,367.6Z" fill="#98831b" stroke="#98831b" stroke-width="0.6"/>
<path d="M1222.5,347.9 1224.3,348.5 1225.4,347.0 1223.5,346.3Z" fill="#ffe32f" stroke="#ffe32f" stroke-width="0.6"/>
<path d="M1232.7,351.1 1234.4,352.4 1235.3,351.4 1233.7,350.0Z" fill="#a18b1d" stroke="#a18b1d" stroke-width="0.6"/>
<path d="M1231.1,370.4 1233.1,369.9 1233.1,368.5 1231.1,369.1Z" fill="#3b330a" stroke="#3b330a" stroke-width="0.6"/>
<path d="M1229.1,348.7 1231.0,349.8 1232.0,348.7 1230.2,347.5Z" fill="#ceb224" stroke="#ceb224" stroke-width="0.6"/>
<path d="M1236.4,363.5 1237.9,362.5 1237.4,360.6 1236.0,361.6Z" fill="#3d350b" stroke="#3d350b" stroke-width="0.6"/>
<path d="M1236.8,358.6 1238.0,357.6 1237.1,355.7 1236.0,356.7Z" fill="#625411" stroke="#625411" stroke-width="0.6"/>
<path d="M1231.0,349.8 1232.7,351.1 1233.7,350.0 1232.0,348.7Z" fill="#b99f21" stroke="#b99f21" stroke-width="0.6"/>
<path d="M1233.1,368.5 1235.0,367.8 1234.9,366.2 1233.0,367.0Z" fill="#37300a" stroke="#37300a" stroke-width="0.6"/>
<path d="M1234.9,366.2 1236.7,365.3 1236.4,363.5 1234.7,364.5Z" fill="#332c09" stroke="#332c09" stroke-width="0.6"/>
<path d="M1236.0,356.7 1237.1,355.7 1236.0,353.8 1235.1,354.7Z" fill="#796815" stroke="#796815" stroke-width="0.6"/>
<path d="M1229.0,370.7 1231.1,370.4 1231.1,369.1 1229.0,369.2Z" fill="#39310a" stroke="#39310a" stroke-width="0.6"/>
<path d="M1218.2,370.0 1220.3,370.4 1220.4,368.6 1218.3,368.2Z" fill="#8a7718" stroke="#8a7718" stroke-width="0.6"/>
<path d="M1224.3,348.5 1226.2,349.3 1227.3,347.8 1225.4,347.0Z" fill="#f9d72c" stroke="#f9d72c" stroke-width="0.6"/>
<path d="M1236.0,361.6 1237.4,360.6 1236.8,358.6 1235.5,359.7Z" fill="#54480f" stroke="#54480f" stroke-width="0.6"/>
<path d="M1233.4,353.4 1235.1,354.7 1236.0,353.8 1234.4,352.4Z" fill="#907c19" stroke="#907c19" stroke-width="0.6"/>
<path d="M1231.1,369.1 1233.1,368.5 1233.0,367.0 1231.0,367.7Z" fill="#3a320a" stroke="#3a320a" stroke-width="0.6"/>
<path d="M1220.3,370.4 1222.4,370.7 1222.5,369.0 1220.4,368.6Z" fill="#7b6b16" stroke="#7b6b16" stroke-width="0.6"/>
<path d="M1226.8,370.8 1229.0,370.7 1229.0,369.2 1226.8,369.3Z" fill="#4a400d" stroke="#4a400d" stroke-width="0.6"/>
<path d="M1234.7,364.5 1236.4,363.5 1236.0,361.6 1234.4,362.7Z" fill="#483e0d" stroke="#483e0d" stroke-width="0.6"/>
<path d="M1226.2,349.3 1228.0,350.1 1229.1,348.7 1227.3,347.8Z" fill="#e8c829" stroke="#e8c829" stroke-width="0.6"/>
<path d="M1216.3,367.6 1218.3,368.2 1218.5,366.2 1216.5,365.7Z" fill="#ad961f" stroke="#ad961f" stroke-width="0.6"/>
<path d="M1233.0,367.0 1234.9,366.2 1234.7,364.5 1232.9,365.4Z" fill="#3f370b" stroke="#3f370b" stroke-width="0.6"/>
<path d="M1221.5,349.6 1223.3,350.2 1224.3,348.5 1222.5,347.9Z" fill="#ffe62f" stroke="#ffe62f" stroke-width="0.6"/>
<path d="M1231.7,352.2 1233.4,353.4 1234.4,352.4 1232.7,351.1Z" fill="#a9921e" stroke="#a9921e" stroke-width="0.6"/>
<path d="M1235.5,359.7 1236.8,358.6 1236.0,356.7 1234.8,357.7Z" fill="#6a5c13" stroke="#6a5c13" stroke-width="0.6"/>
<path d="M1222.4,370.7 1224.6,370.8 1224.7,369.2 1222.5,369.0Z" fill="#6c5d13" stroke="#6c5d13" stroke-width="0.6"/>
<path d="M1224.6,370.8 1226.8,370.8 1226.8,369.3 1224.7,369.2Z" fill="#5b4f10" stroke="#5b4f10" stroke-width="0.6"/>
<path d="M1228.0,350.1 1229.9,351.1 1231.0,349.8 1229.1,348.7Z" fill="#d5b826" stroke="#d5b826" stroke-width="0.6"/>
<path d="M1229.9,351.1 1231.7,352.2 1232.7,351.1 1231.0,349.8Z" fill="#c0a622" stroke="#c0a622" stroke-width="0.6"/>
<path d="M1234.8,357.7 1236.0,356.7 1235.1,354.7 1234.1,355.7Z" fill="#806f17" stroke="#806f17" stroke-width="0.6"/>
<path d="M1229.0,369.2 1231.1,369.1 1231.0,367.7 1229.0,367.7Z" fill="#4a400d" stroke="#4a400d" stroke-width="0.6"/>
<path d="M1234.4,362.7 1236.0,361.6 1235.5,359.7 1234.0,360.8Z" fill="#5d5010" stroke="#5d5010" stroke-width="0.6"/>
<path d="M1232.3,354.6 1234.1,355.7 1235.1,354.7 1233.4,353.4Z" fill="#96821b" stroke="#96821b" stroke-width="0.6"/>
<path d="M1218.3,368.2 1220.4,368.6 1220.5,366.7 1218.5,366.2Z" fill="#9f8a1c" stroke="#9f8a1c" stroke-width="0.6"/>
<path d="M1231.0,367.7 1233.0,367.0 1232.9,365.4 1231.0,366.3Z" fill="#4b410d" stroke="#4b410d" stroke-width="0.6"/>
<path d="M1223.3,350.2 1225.1,350.9 1226.2,349.3 1224.3,348.5Z" fill="#fdda2d" stroke="#fdda2d" stroke-width="0.6"/>
<path d="M1232.9,365.4 1234.7,364.5 1234.4,362.7 1232.7,363.7Z" fill="#52470f" stroke="#52470f" stroke-width="0.6"/>
<path d="M1226.8,369.3 1229.0,369.2 1229.0,367.7 1226.8,367.6Z" fill="#5c5010" stroke="#5c5010" stroke-width="0.6"/>
<path d="M1216.5,365.7 1218.5,366.2 1218.7,364.2 1216.8,363.7Z" fill="#c1a722" stroke="#c1a722" stroke-width="0.6"/>
<path d="M1220.7,351.4 1222.3,351.9 1223.3,350.2 1221.5,349.6Z" fill="#ffe62f" stroke="#ffe62f" stroke-width="0.6"/>
<path d="M1234.0,360.8 1235.5,359.7 1234.8,357.7 1233.5,358.8Z" fill="#726214" stroke="#726214" stroke-width="0.6"/>
<path d="M1220.4,368.6 1222.5,369.0 1222.6,367.1 1220.5,366.7Z" fill="#907d19" stroke="#907d19" stroke-width="0.6"/>
<path d="M1230.5,353.5 1232.3,354.6 1233.4,353.4 1231.7,352.2Z" fill="#af971f" stroke="#af971f" stroke-width="0.6"/>
<path d="M1225.1,350.9 1226.9,351.6 1228.0,350.1 1226.2,349.3Z" fill="#eccc2a" stroke="#eccc2a" stroke-width="0.6"/>
<path d="M1233.5,358.8 1234.8,357.7 1234.1,355.7 1232.9,356.8Z" fill="#877418" stroke="#877418" stroke-width="0.6"/>
<path d="M1224.7,369.2 1226.8,369.3 1226.8,367.6 1224.7,367.4Z" fill="#6f5f14" stroke="#6f5f14" stroke-width="0.6"/>
<path d="M1229.0,367.7 1231.0,367.7 1231.0,366.3 1228.9,366.1Z" fill="#5b4e10" stroke="#5b4e10" stroke-width="0.6"/>
<path d="M1222.5,369.0 1224.7,369.2 1224.7,367.4 1222.6,367.1Z" fill="#806e17" stroke="#806e17" stroke-width="0.6"/>
<path d="M1226.9,351.6 1228.7,352.5 1229.9,351.1 1228.0,350.1Z" fill="#dabc27" stroke="#dabc27" stroke-width="0.6"/>
<path d="M1228.7,352.5 1230.5,353.5 1231.7,352.2 1229.9,351.1Z" fill="#c6ab23" stroke="#c6ab23" stroke-width="0.6"/>
<path d="M1232.7,363.7 1234.4,362.7 1234.0,360.8 1232.4,361.9Z" fill="#665812" stroke="#665812" stroke-width="0.6"/>
<path d="M1231.0,366.3 1232.9,365.4 1232.7,363.7 1230.9,364.7Z" fill="#5d5010" stroke="#5d5010" stroke-width="0.6"/>
<path d="M1231.1,355.8 1232.9,356.8 1234.1,355.7 1232.3,354.6Z" fill="#9d871c" stroke="#9d871c" stroke-width="0.6"/>
<path d="M1222.3,351.9 1224.0,352.6 1225.1,350.9 1223.3,350.2Z" fill="#fedb2d" stroke="#fedb2d" stroke-width="0.6"/>
<path d="M1218.5,366.2 1220.5,366.7 1220.7,364.7 1218.7,364.2Z" fill="#b39b20" stroke="#b39b20" stroke-width="0.6"/>
<path d="M1219.8,353.3 1221.4,353.8 1222.3,351.9 1220.7,351.4Z" fill="#ffe42f" stroke="#ffe42f" stroke-width="0.6"/>
<path d="M1216.8,363.7 1218.7,364.2 1219.0,362.1 1217.2,361.6Z" fill="#d3b625" stroke="#d3b625" stroke-width="0.6"/>
<path d="M1232.4,361.9 1234.0,360.8 1233.5,358.8 1232.1,360.0Z" fill="#7a6915" stroke="#7a6915" stroke-width="0.6"/>
<path d="M1226.8,367.6 1229.0,367.7 1228.9,366.1 1226.8,365.9Z" fill="#6e5f14" stroke="#6e5f14" stroke-width="0.6"/>
<path d="M1228.9,366.1 1231.0,366.3 1230.9,364.7 1228.8,364.4Z" fill="#6c5d13" stroke="#6c5d13" stroke-width="0.6"/>
<path d="M1230.9,364.7 1232.7,363.7 1232.4,361.9 1230.7,363.0Z" fill="#6e5f14" stroke="#6e5f14" stroke-width="0.6"/>
<path d="M1232.1,360.0 1233.5,358.8 1232.9,356.8 1231.6,358.0Z" fill="#8d7a19" stroke="#8d7a19" stroke-width="0.6"/>
<path d="M1229.3,354.9 1231.1,355.8 1232.3,354.6 1230.5,353.5Z" fill="#b49c20" stroke="#b49c20" stroke-width="0.6"/>
<path d="M1224.0,352.6 1225.8,353.3 1226.9,351.6 1225.1,350.9Z" fill="#efce2a" stroke="#efce2a" stroke-width="0.6"/>
<path d="M1220.5,366.7 1222.6,367.1 1222.7,365.2 1220.7,364.7Z" fill="#a48e1d" stroke="#a48e1d" stroke-width="0.6"/>
<path d="M1224.7,367.4 1226.8,367.6 1226.8,365.9 1224.7,365.5Z" fill="#827017" stroke="#827017" stroke-width="0.6"/>
<path d="M1219.0,355.4 1220.4,355.8 1221.4,353.8 1219.8,353.3Z" fill="#ffe02e" stroke="#ffe02e" stroke-width="0.6"/>
<path d="M1222.6,367.1 1224.7,367.4 1224.7,365.5 1222.7,365.2Z" fill="#937f1a" stroke="#937f1a" stroke-width="0.6"/>
<path d="M1217.2,361.6 1219.0,362.1 1219.4,360.0 1217.7,359.5Z" fill="#e3c428" stroke="#e3c428" stroke-width="0.6"/>
<path d="M1225.8,353.3 1227.5,354.0 1228.7,352.5 1226.9,351.6Z" fill="#ddbf27" stroke="#ddbf27" stroke-width="0.6"/>
<path d="M1227.5,354.0 1229.3,354.9 1230.5,353.5 1228.7,352.5Z" fill="#caae24" stroke="#caae24" stroke-width="0.6"/>
<path d="M1221.4,353.8 1222.9,354.4 1224.0,352.6 1222.3,351.9Z" fill="#fcda2d" stroke="#fcda2d" stroke-width="0.6"/>
<path d="M1229.8,357.1 1231.6,358.0 1232.9,356.8 1231.1,355.8Z" fill="#a28c1d" stroke="#a28c1d" stroke-width="0.6"/>
<path d="M1218.7,364.2 1220.7,364.7 1220.9,362.7 1219.0,362.1Z" fill="#c6ab23" stroke="#c6ab23" stroke-width="0.6"/>
<path d="M1230.7,363.0 1232.4,361.9 1232.1,360.0 1230.5,361.2Z" fill="#816f17" stroke="#816f17" stroke-width="0.6"/>
<path d="M1218.4,357.4 1219.9,357.9 1220.4,355.8 1219.0,355.4Z" fill="#fcd92c" stroke="#fcd92c" stroke-width="0.6"/>
<path d="M1217.7,359.5 1219.4,360.0 1219.9,357.9 1218.4,357.4Z" fill="#f0d02a" stroke="#f0d02a" stroke-width="0.6"/>
<path d="M1228.8,364.4 1230.9,364.7 1230.7,363.0 1228.7,362.5Z" fill="#7d6c16" stroke="#7d6c16" stroke-width="0.6"/>
<path d="M1226.8,365.9 1228.9,366.1 1228.8,364.4 1226.8,364.0Z" fill="#806f17" stroke="#806f17" stroke-width="0.6"/>
<path d="M1230.5,361.2 1232.1,360.0 1231.6,358.0 1230.2,359.2Z" fill="#937f1a" stroke="#937f1a" stroke-width="0.6"/>
<path d="M1222.9,354.4 1224.6,355.0 1225.8,353.3 1224.0,352.6Z" fill="#efce2a" stroke="#efce2a" stroke-width="0.6"/>
<path d="M1220.4,355.8 1221.9,356.3 1222.9,354.4 1221.4,353.8Z" fill="#f9d72c" stroke="#f9d72c" stroke-width="0.6"/>
<path d="M1220.7,364.7 1222.7,365.2 1222.8,363.1 1220.9,362.7Z" fill="#b79e20" stroke="#b79e20" stroke-width="0.6"/>
<path d="M1228.0,356.4 1229.8,357.1 1231.1,355.8 1229.3,354.9Z" fill="#b89f21" stroke="#b89f21" stroke-width="0.6"/>
<path d="M1219.0,362.1 1220.9,362.7 1221.2,360.5 1219.4,360.0Z" fill="#d6b926" stroke="#d6b926" stroke-width="0.6"/>
<path d="M1224.7,365.5 1226.8,365.9 1226.8,364.0 1224.8,363.6Z" fill="#94801a" stroke="#94801a" stroke-width="0.6"/>
<path d="M1224.6,355.0 1226.3,355.6 1227.5,354.0 1225.8,353.3Z" fill="#dfc027" stroke="#dfc027" stroke-width="0.6"/>
<path d="M1222.7,365.2 1224.7,365.5 1224.8,363.6 1222.8,363.1Z" fill="#a68f1d" stroke="#a68f1d" stroke-width="0.6"/>
<path d="M1228.7,362.5 1230.7,363.0 1230.5,361.2 1228.5,360.6Z" fill="#8e7b19" stroke="#8e7b19" stroke-width="0.6"/>
<path d="M1226.3,355.6 1228.0,356.4 1229.3,354.9 1227.5,354.0Z" fill="#cdb124" stroke="#cdb124" stroke-width="0.6"/>
<path d="M1228.3,358.5 1230.2,359.2 1231.6,358.0 1229.8,357.1Z" fill="#a7901d" stroke="#a7901d" stroke-width="0.6"/>
<path d="M1219.9,357.9 1221.5,358.4 1221.9,356.3 1220.4,355.8Z" fill="#f1d02b" stroke="#f1d02b" stroke-width="0.6"/>
<path d="M1219.4,360.0 1221.2,360.5 1221.5,358.4 1219.9,357.9Z" fill="#e5c528" stroke="#e5c528" stroke-width="0.6"/>
<path d="M1226.8,364.0 1228.8,364.4 1228.7,362.5 1226.7,362.1Z" fill="#927e1a" stroke="#927e1a" stroke-width="0.6"/>
<path d="M1221.9,356.3 1223.4,356.8 1224.6,355.0 1222.9,354.4Z" fill="#eccc2a" stroke="#eccc2a" stroke-width="0.6"/>
<path d="M1228.5,360.6 1230.5,361.2 1230.2,359.2 1228.3,358.5Z" fill="#a08a1c" stroke="#a08a1c" stroke-width="0.6"/>
<path d="M1220.9,362.7 1222.8,363.1 1223.0,361.1 1221.2,360.5Z" fill="#c8ac23" stroke="#c8ac23" stroke-width="0.6"/>
<path d="M1226.6,357.9 1228.3,358.5 1229.8,357.1 1228.0,356.4Z" fill="#bba221" stroke="#bba221" stroke-width="0.6"/>
<path d="M1224.8,363.6 1226.8,364.0 1226.7,362.1 1224.8,361.6Z" fill="#a68f1d" stroke="#a68f1d" stroke-width="0.6"/>
<path d="M1221.5,358.4 1223.2,358.9 1223.4,356.8 1221.9,356.3Z" fill="#e5c528" stroke="#e5c528" stroke-width="0.6"/>
<path d="M1223.4,356.8 1224.9,357.3 1226.3,355.6 1224.6,355.0Z" fill="#dec027" stroke="#dec027" stroke-width="0.6"/>
<path d="M1222.8,363.1 1224.8,363.6 1224.8,361.6 1223.0,361.1Z" fill="#b89f20" stroke="#b89f20" stroke-width="0.6"/>
<path d="M1226.7,362.1 1228.7,362.5 1228.5,360.6 1226.7,360.0Z" fill="#a48d1d" stroke="#a48d1d" stroke-width="0.6"/>
<path d="M1221.2,360.5 1223.0,361.1 1223.2,358.9 1221.5,358.4Z" fill="#d7ba26" stroke="#d7ba26" stroke-width="0.6"/>
<path d="M1224.9,357.3 1226.6,357.9 1228.0,356.4 1226.3,355.6Z" fill="#ceb224" stroke="#ceb224" stroke-width="0.6"/>
<path d="M1226.7,360.0 1228.5,360.6 1228.3,358.5 1226.6,357.9Z" fill="#b49c20" stroke="#b49c20" stroke-width="0.6"/>
<path d="M1223.2,358.9 1224.9,359.5 1224.9,357.3 1223.4,356.8Z" fill="#d6b926" stroke="#d6b926" stroke-width="0.6"/>
<path d="M1224.8,361.6 1226.7,362.1 1226.7,360.0 1224.9,359.5Z" fill="#b79e20" stroke="#b79e20" stroke-width="0.6"/>
<path d="M1223.0,361.1 1224.8,361.6 1224.9,359.5 1223.2,358.9Z" fill="#c8ad23" stroke="#c8ad23" stroke-width="0.6"/>
<path d="M1224.9,359.5 1226.7,360.0 1226.6,357.9 1224.9,357.3Z" fill="#c7ab23" stroke="#c7ab23" stroke-width="0.6"/>
<defs><clipPath id="hz"><path d="M1218.69,282.45 L1220.19,280.70 L1221.36,278.88 L1222.19,277.01 L1222.67,275.10 L1222.81,273.19 L1222.59,271.28 L1222.02,269.39 L1221.12,267.55 L1219.89,265.77 L1218.35,264.06 L1216.50,262.44 L1214.38,260.93 L1212.00,259.54 L1209.38,258.28 L1206.55,257.16 L1203.54,256.20 L1200.37,255.40 L1197.07,254.76 L1193.68,254.30 L1190.22,254.02 L1186.73,253.92 L1183.24,253.99 L1179.78,254.25 L1176.37,254.69 L1173.06,255.30 L1169.88,256.08 L1166.84,257.02 L1163.99,258.12 L1161.34,259.36 L1158.92,260.74 L1156.77,262.23 L1154.88,263.84 L1153.30,265.53 L1152.03,267.31 L1151.08,269.14 L1150.47,271.03 L1150.20,272.93 L1150.29,274.85 L1150.72,276.75 L1151.51,278.63 L1152.63,280.46 L1154.09,282.22 L1155.87,283.91 L1157.95,285.49 L1160.32,286.95 L1162.94,288.28 L1165.81,289.47 L1168.89,290.49 L1172.14,291.35 L1175.54,292.03 L1179.05,292.53 L1182.63,292.83 L1186.26,292.94 L1189.89,292.86 L1193.48,292.58 L1197.00,292.11 L1200.42,291.45 L1203.69,290.62 L1206.79,289.61 L1209.69,288.45 L1212.35,287.13 L1214.75,285.69 L1216.87,284.12Z"/></clipPath><clipPath id="hy"><path d="M1166.07,428.68 L1165.88,425.77 L1165.39,422.78 L1164.59,419.73 L1163.49,416.66 L1162.10,413.59 L1160.43,410.56 L1158.50,407.60 L1156.34,404.74 L1153.95,402.00 L1151.37,399.42 L1148.61,397.02 L1145.72,394.82 L1142.71,392.85 L1139.62,391.13 L1136.48,389.66 L1133.33,388.48 L1130.18,387.59 L1127.08,386.99 L1124.06,386.70 L1121.14,386.70 L1118.35,387.02 L1115.72,387.62 L1113.28,388.52 L1111.05,389.70 L1109.04,391.15 L1107.28,392.85 L1105.79,394.79 L1104.57,396.94 L1103.64,399.29 L1103.00,401.80 L1102.67,404.46 L1102.63,407.24 L1102.89,410.12 L1103.45,413.06 L1104.29,416.04 L1105.42,419.04 L1106.82,422.01 L1108.48,424.94 L1110.37,427.80 L1112.49,430.57 L1114.81,433.21 L1117.31,435.71 L1119.97,438.03 L1122.77,440.17 L1125.67,442.10 L1128.66,443.80 L1131.70,445.25 L1134.77,446.45 L1137.84,447.37 L1140.87,448.02 L1143.85,448.38 L1146.74,448.45 L1149.52,448.23 L1152.16,447.72 L1154.64,446.92 L1156.92,445.84 L1158.99,444.48 L1160.83,442.87 L1162.41,441.01 L1163.73,438.92 L1164.76,436.62 L1165.50,434.13 L1165.94,431.47Z"/></clipPath><clipPath id="hx"><path d="M1296.20,372.86 L1296.27,370.16 L1296.19,367.65 L1295.97,365.35 L1295.60,363.30 L1295.10,361.51 L1294.45,360.00 L1293.67,358.78 L1292.77,357.87 L1291.75,357.28 L1290.62,357.02 L1289.39,357.09 L1288.07,357.49 L1286.68,358.23 L1285.23,359.29 L1283.73,360.66 L1282.20,362.34 L1280.65,364.31 L1279.09,366.56 L1277.56,369.05 L1276.05,371.77 L1274.58,374.68 L1273.18,377.77 L1271.85,380.99 L1270.60,384.32 L1269.46,387.72 L1268.43,391.15 L1267.53,394.59 L1266.76,397.99 L1266.12,401.33 L1265.63,404.56 L1265.30,407.65 L1265.12,410.58 L1265.09,413.32 L1265.21,415.83 L1265.49,418.10 L1265.92,420.10 L1266.49,421.81 L1267.20,423.22 L1268.04,424.32 L1269.00,425.10 L1270.07,425.55 L1271.25,425.66 L1272.50,425.45 L1273.84,424.92 L1275.23,424.07 L1276.68,422.91 L1278.16,421.45 L1279.66,419.71 L1281.17,417.71 L1282.67,415.47 L1284.15,413.00 L1285.60,410.34 L1287.00,407.50 L1288.34,404.52 L1289.61,401.41 L1290.79,398.22 L1291.88,394.96 L1292.87,391.66 L1293.75,388.37 L1294.50,385.10 L1295.13,381.88 L1295.63,378.75 L1295.98,375.74Z"/></clipPath></defs>
<g clip-path="url(#hz)" shape-rendering="crispEdges">
<path d="M1218.69,282.45 L1220.19,280.70 L1221.36,278.88 L1222.19,277.01 L1222.67,275.10 L1222.81,273.19 L1222.59,271.28 L1222.02,269.39 L1221.12,267.55 L1219.89,265.77 L1218.35,264.06 L1216.50,262.44 L1214.38,260.93 L1212.00,259.54 L1209.38,258.28 L1206.55,257.16 L1203.54,256.20 L1200.37,255.40 L1197.07,254.76 L1193.68,254.30 L1190.22,254.02 L1186.73,253.92 L1183.24,253.99 L1179.78,254.25 L1176.37,254.69 L1173.06,255.30 L1169.88,256.08 L1166.84,257.02 L1163.99,258.12 L1161.34,259.36 L1158.92,260.74 L1156.77,262.23 L1154.88,263.84 L1153.30,265.53 L1152.03,267.31 L1151.08,269.14 L1150.47,271.03 L1150.20,272.93 L1150.29,274.85 L1150.72,276.75 L1151.51,278.63 L1152.63,280.46 L1154.09,282.22 L1155.87,283.91 L1157.95,285.49 L1160.32,286.95 L1162.94,288.28 L1165.81,289.47 L1168.89,290.49 L1172.14,291.35 L1175.54,292.03 L1179.05,292.53 L1182.63,292.83 L1186.26,292.94 L1189.89,292.86 L1193.48,292.58 L1197.00,292.11 L1200.42,291.45 L1203.69,290.62 L1206.79,289.61 L1209.69,288.45 L1212.35,287.13 L1214.75,285.69 L1216.87,284.12Z" fill="#9ecc51"/>
<path d="M1192.2,295.7 1185.1,295.6 1185.2,293.2 1191.6,293.3Z" fill="#617d32"/>
<path d="M1185.1,295.6 1178.0,295.9 1178.8,293.5 1185.2,293.2Z" fill="#6a8836"/>
<path d="M1199.3,296.4 1192.2,295.7 1191.6,293.3 1197.9,293.9Z" fill="#58722d"/>
<path d="M1178.0,295.9 1171.0,296.8 1172.6,294.3 1178.8,293.5Z" fill="#73943b"/>
<path d="M1206.1,297.6 1199.3,296.4 1197.9,293.9 1204.1,294.9Z" fill="#506729"/>
<path d="M1191.6,293.3 1185.2,293.2 1185.4,291.9 1190.9,292.0Z" fill="#6f8f39"/>
<path d="M1185.2,293.2 1178.8,293.5 1179.9,292.2 1185.4,291.9Z" fill="#76993d"/>
<path d="M1197.9,293.9 1191.6,293.3 1190.9,292.0 1196.4,292.5Z" fill="#678535"/>
<path d="M1178.8,293.5 1172.6,294.3 1174.4,292.8 1179.9,292.2Z" fill="#7ea341"/>
<path d="M1204.1,294.9 1197.9,293.9 1196.4,292.5 1201.7,293.4Z" fill="#607c31"/>
<path d="M1172.6,294.3 1166.5,295.5 1169.2,293.9 1174.4,292.8Z" fill="#86ae45"/>
<path d="M1209.9,296.4 1204.1,294.9 1201.7,293.4 1206.8,294.7Z" fill="#59732e"/>
<path d="M1166.5,295.5 1160.8,297.1 1164.3,295.3 1169.2,293.9Z" fill="#8eb849"/>
<path d="M1190.9,292.0 1185.4,291.9 1185.6,291.8 1190.2,291.9Z" fill="#7b9f40"/>
<path d="M1185.4,291.9 1179.9,292.2 1181.0,292.0 1185.6,291.8Z" fill="#82a843"/>
<path d="M1196.4,292.5 1190.9,292.0 1190.2,291.9 1194.7,292.3Z" fill="#75973c"/>
<path d="M1188.6,291.8 1185.6,291.8 1185.6,287.1 1188.6,287.2Z" fill="#36451c"/>
<path d="M1185.6,291.8 1182.5,291.9 1182.5,287.2 1185.6,287.1Z" fill="#2e3b18"/>
<path d="M1191.7,292.0 1188.6,291.8 1188.6,287.2 1191.7,287.3Z" fill="#3d4f20"/>
<path d="M1182.5,291.9 1179.5,292.2 1179.5,287.5 1182.5,287.2Z" fill="#263113"/>
<path d="M1194.7,292.3 1191.7,292.0 1191.7,287.3 1194.7,287.6Z" fill="#455924"/>
<path d="M1179.5,292.2 1176.5,292.6 1176.5,287.9 1179.5,287.5Z" fill="#212b11"/>
<path d="M1197.6,292.8 1194.7,292.3 1194.7,287.6 1197.6,288.1Z" fill="#4c6327"/>
<path d="M1176.5,292.6 1173.6,293.1 1173.6,288.4 1176.5,287.9Z" fill="#293515"/>
<path d="M1200.5,293.4 1197.6,292.8 1197.6,288.1 1200.5,288.7Z" fill="#536c2b"/>
<path d="M1173.6,293.1 1170.8,293.8 1170.8,289.1 1173.6,288.4Z" fill="#314019"/>
<path d="M1203.3,294.1 1200.5,293.4 1200.5,288.7 1203.3,289.4Z" fill="#5a742e"/>
<path d="M1188.6,287.2 1185.6,287.1 1185.6,282.4 1188.6,282.5Z" fill="#36451c"/>
<path d="M1185.6,287.1 1182.5,287.2 1182.5,282.6 1185.6,282.4Z" fill="#2e3b18"/>
<path d="M1191.7,287.3 1188.6,287.2 1188.6,282.5 1191.7,282.6Z" fill="#3d4f20"/>
<path d="M1182.5,287.2 1179.5,287.5 1179.5,282.8 1182.5,282.6Z" fill="#263113"/>
<path d="M1194.7,287.6 1191.7,287.3 1191.7,282.6 1194.7,283.0Z" fill="#455924"/>
<path d="M1170.8,293.8 1168.1,294.6 1168.1,289.9 1170.8,289.1Z" fill="#394a1e"/>
<path d="M1179.5,287.5 1176.5,287.9 1176.5,283.2 1179.5,282.8Z" fill="#212b11"/>
<path d="M1205.9,295.0 1203.3,294.1 1203.3,289.4 1205.9,290.3Z" fill="#607c31"/>
<path d="M1197.6,288.1 1194.7,287.6 1194.7,283.0 1197.7,283.4Z" fill="#4c6327"/>
<path d="M1176.5,287.9 1173.6,288.4 1173.6,283.8 1176.5,283.2Z" fill="#293515"/>
<path d="M1168.1,294.6 1165.6,295.6 1165.5,290.9 1168.1,289.9Z" fill="#415421"/>
<path d="M1200.5,288.7 1197.6,288.1 1197.7,283.4 1200.5,284.0Z" fill="#536c2b"/>
<path d="M1208.4,296.0 1205.9,295.0 1205.9,290.3 1208.4,291.3Z" fill="#658334"/>
<path d="M1173.6,288.4 1170.8,289.1 1170.8,284.4 1173.6,283.8Z" fill="#314019"/>
<path d="M1203.3,289.4 1200.5,288.7 1200.5,284.0 1203.3,284.8Z" fill="#5a742e"/>
<path d="M1188.6,282.5 1185.6,282.4 1185.6,277.7 1188.7,277.8Z" fill="#36451c"/>
<path d="M1185.6,282.4 1182.5,282.6 1182.5,277.9 1185.6,277.7Z" fill="#2e3b18"/>
<path d="M1191.7,282.6 1188.6,282.5 1188.7,277.8 1191.7,277.9Z" fill="#3d4f20"/>
<path d="M1165.6,295.6 1163.2,296.6 1163.1,291.9 1165.5,290.9Z" fill="#485e25"/>
<path d="M1182.5,282.6 1179.5,282.8 1179.5,278.1 1182.5,277.9Z" fill="#263113"/>
<path d="M1194.7,283.0 1191.7,282.6 1191.7,277.9 1194.7,278.3Z" fill="#455924"/>
<path d="M1170.8,289.1 1168.1,289.9 1168.1,285.3 1170.8,284.4Z" fill="#394a1e"/>
<path d="M1179.5,282.8 1176.5,283.2 1176.5,278.5 1179.5,278.1Z" fill="#212b11"/>
<path d="M1210.7,297.1 1208.4,296.0 1208.4,291.3 1210.8,292.4Z" fill="#6b8a37"/>
<path d="M1205.9,290.3 1203.3,289.4 1203.3,284.8 1206.0,285.6Z" fill="#607c31"/>
<path d="M1197.7,283.4 1194.7,283.0 1194.7,278.3 1197.7,278.7Z" fill="#4c6327"/>
<path d="M1176.5,283.2 1173.6,283.8 1173.6,279.1 1176.5,278.5Z" fill="#293515"/>
<path d="M1168.1,289.9 1165.5,290.9 1165.5,286.2 1168.1,285.3Z" fill="#415421"/>
<path d="M1200.5,284.0 1197.7,283.4 1197.7,278.7 1200.6,279.3Z" fill="#536c2b"/>
<path d="M1163.2,296.6 1160.9,297.8 1160.9,293.1 1163.1,291.9Z" fill="#4f6729"/>
<path d="M1208.4,291.3 1205.9,290.3 1206.0,285.6 1208.5,286.6Z" fill="#658334"/>
<path d="M1173.6,283.8 1170.8,284.4 1170.7,279.7 1173.6,279.1Z" fill="#314019"/>
<path d="M1212.9,298.3 1210.7,297.1 1210.8,292.4 1213.0,293.6Z" fill="#6f9039"/>
<path d="M1203.3,284.8 1200.5,284.0 1200.6,279.3 1203.4,280.0Z" fill="#5a742e"/>
<path d="M1188.7,277.8 1185.6,277.7 1185.6,273.0 1188.7,273.0Z" fill="#36451c"/>
<path d="M1185.6,277.7 1182.5,277.9 1182.5,273.1 1185.6,273.0Z" fill="#2e3b18"/>
<path d="M1191.7,277.9 1188.7,277.8 1188.7,273.0 1191.7,273.2Z" fill="#3d4f20"/>
<path d="M1182.5,277.9 1179.5,278.1 1179.5,273.4 1182.5,273.1Z" fill="#263113"/>
<path d="M1165.5,290.9 1163.1,291.9 1163.1,287.2 1165.5,286.2Z" fill="#485e25"/>
<path d="M1194.7,278.3 1191.7,277.9 1191.7,273.2 1194.8,273.5Z" fill="#455924"/>
<path d="M1170.8,284.4 1168.1,285.3 1168.0,280.5 1170.7,279.7Z" fill="#394a1e"/>
<path d="M1160.9,297.8 1158.9,299.1 1158.8,294.4 1160.9,293.1Z" fill="#566f2c"/>
<path d="M1179.5,278.1 1176.5,278.5 1176.5,273.8 1179.5,273.4Z" fill="#212b11"/>
<path d="M1210.8,292.4 1208.4,291.3 1208.5,286.6 1210.8,287.7Z" fill="#6b8a37"/>
<path d="M1206.0,285.6 1203.3,284.8 1203.4,280.0 1206.0,280.9Z" fill="#607c31"/>
<path d="M1197.7,278.7 1194.7,278.3 1194.8,273.5 1197.7,274.0Z" fill="#4c6327"/>
<path d="M1176.5,278.5 1173.6,279.1 1173.5,274.3 1176.5,273.8Z" fill="#293515"/>
<path d="M1214.9,299.6 1212.9,298.3 1213.0,293.6 1214.9,294.9Z" fill="#73953b"/>
<path d="M1200.6,279.3 1197.7,278.7 1197.7,274.0 1200.6,274.6Z" fill="#536c2b"/>
<path d="M1168.1,285.3 1165.5,286.2 1165.5,281.5 1168.0,280.5Z" fill="#415421"/>
<path d="M1163.1,291.9 1160.9,293.1 1160.8,288.4 1163.1,287.2Z" fill="#4f6729"/>
<path d="M1173.6,279.1 1170.7,279.7 1170.7,275.0 1173.5,274.3Z" fill="#314019"/>
<path d="M1208.5,286.6 1206.0,285.6 1206.0,280.9 1208.5,281.9Z" fill="#658334"/>
<path d="M1213.0,293.6 1210.8,292.4 1210.8,287.7 1213.0,288.9Z" fill="#6f9039"/>
<path d="M1203.4,280.0 1200.6,279.3 1200.6,274.6 1203.4,275.3Z" fill="#5a742e"/>
<path d="M1188.7,273.0 1185.6,273.0 1185.6,268.3 1188.7,268.3Z" fill="#36451c"/>
<path d="M1185.6,273.0 1182.5,273.1 1182.5,268.4 1185.6,268.3Z" fill="#2e3b18"/>
<path d="M1191.7,273.2 1188.7,273.0 1188.7,268.3 1191.7,268.5Z" fill="#3d4f20"/>
<path d="M1182.5,273.1 1179.5,273.4 1179.4,268.6 1182.5,268.4Z" fill="#263113"/>
<path d="M1165.5,286.2 1163.1,287.2 1163.0,282.5 1165.5,281.5Z" fill="#485e25"/>
<path d="M1194.8,273.5 1191.7,273.2 1191.7,268.5 1194.8,268.8Z" fill="#455924"/>
<path d="M1170.7,279.7 1168.0,280.5 1168.0,275.8 1170.7,275.0Z" fill="#394a1e"/>
<path d="M1179.5,273.4 1176.5,273.8 1176.4,269.0 1179.4,268.6Z" fill="#212b11"/>
<path d="M1160.9,293.1 1158.8,294.4 1158.8,289.7 1160.8,288.4Z" fill="#566f2c"/>
<path d="M1210.8,287.7 1208.5,286.6 1208.5,281.9 1210.9,283.0Z" fill="#6b8a37"/>
<path d="M1197.7,274.0 1194.8,273.5 1194.8,268.8 1197.7,269.2Z" fill="#4c6327"/>
<path d="M1206.0,280.9 1203.4,280.0 1203.4,275.3 1206.1,276.2Z" fill="#607c31"/>
<path d="M1176.5,273.8 1173.5,274.3 1173.5,269.6 1176.4,269.0Z" fill="#293515"/>
<path d="M1214.9,294.9 1213.0,293.6 1213.0,288.9 1215.0,290.2Z" fill="#73953b"/>
<path d="M1200.6,274.6 1197.7,274.0 1197.7,269.2 1200.6,269.8Z" fill="#536c2b"/>
<path d="M1168.0,280.5 1165.5,281.5 1165.4,276.7 1168.0,275.8Z" fill="#415421"/>
<path d="M1163.1,287.2 1160.8,288.4 1160.8,283.7 1163.0,282.5Z" fill="#4f6729"/>
<path d="M1173.5,274.3 1170.7,275.0 1170.7,270.3 1173.5,269.6Z" fill="#314019"/>
<path d="M1208.5,281.9 1206.0,280.9 1206.1,276.2 1208.6,277.2Z" fill="#658334"/>
<path d="M1213.0,288.9 1210.8,287.7 1210.9,283.0 1213.1,284.2Z" fill="#6f9039"/>
<path d="M1158.8,294.4 1157.0,295.8 1156.9,291.1 1158.8,289.7Z" fill="#5d7830"/>
<path d="M1203.4,275.3 1200.6,274.6 1200.6,269.8 1203.4,270.6Z" fill="#5a742e"/>
<path d="M1188.7,268.3 1185.6,268.3 1185.6,263.5 1188.7,263.5Z" fill="#36451c"/>
<path d="M1185.6,268.3 1182.5,268.4 1182.5,263.6 1185.6,263.5Z" fill="#2e3b18"/>
<path d="M1191.7,268.5 1188.7,268.3 1188.7,263.5 1191.7,263.7Z" fill="#3d4f20"/>
<path d="M1182.5,268.4 1179.4,268.6 1179.4,263.9 1182.5,263.6Z" fill="#263113"/>
<path d="M1165.5,281.5 1163.0,282.5 1163.0,277.8 1165.4,276.7Z" fill="#485e25"/>
<path d="M1194.8,268.8 1191.7,268.5 1191.7,263.7 1194.8,264.0Z" fill="#455924"/>
<path d="M1170.7,275.0 1168.0,275.8 1168.0,271.1 1170.7,270.3Z" fill="#394a1e"/>
<path d="M1216.7,296.3 1214.9,294.9 1215.0,290.2 1216.8,291.6Z" fill="#76993d"/>
<path d="M1179.4,268.6 1176.4,269.0 1176.4,264.3 1179.4,263.9Z" fill="#212b11"/>
<path d="M1160.8,288.4 1158.8,289.7 1158.7,285.0 1160.8,283.7Z" fill="#566f2c"/>
<path d="M1197.7,269.2 1194.8,268.8 1194.8,264.0 1197.8,264.5Z" fill="#4c6327"/>
<path d="M1210.9,283.0 1208.5,281.9 1208.6,277.2 1210.9,278.2Z" fill="#6b8a37"/>
<path d="M1206.1,276.2 1203.4,275.3 1203.4,270.6 1206.1,271.4Z" fill="#607c31"/>
<path d="M1176.4,269.0 1173.5,269.6 1173.5,264.8 1176.4,264.3Z" fill="#293515"/>
<path d="M1215.0,290.2 1213.0,288.9 1213.1,284.2 1215.1,285.5Z" fill="#73953b"/>
<path d="M1200.6,269.8 1197.7,269.2 1197.8,264.5 1200.7,265.1Z" fill="#536c2b"/>
<path d="M1168.0,275.8 1165.4,276.7 1165.4,272.0 1168.0,271.1Z" fill="#415421"/>
<path d="M1157.0,295.8 1155.3,297.2 1155.3,292.5 1156.9,291.1Z" fill="#627f33"/>
<path d="M1163.0,282.5 1160.8,283.7 1160.7,279.0 1163.0,277.8Z" fill="#4f6729"/>
<path d="M1173.5,269.6 1170.7,270.3 1170.6,265.5 1173.5,264.8Z" fill="#314019"/>
<path d="M1208.6,277.2 1206.1,276.2 1206.1,271.4 1208.6,272.4Z" fill="#658334"/>
<path d="M1213.1,284.2 1210.9,283.0 1210.9,278.2 1213.1,279.5Z" fill="#6f9039"/>
<path d="M1218.2,297.8 1216.7,296.3 1216.8,291.6 1218.3,293.1Z" fill="#799c3e"/>
<path d="M1203.4,270.6 1200.6,269.8 1200.7,265.1 1203.5,265.8Z" fill="#5a742e"/>
<path d="M1158.8,289.7 1156.9,291.1 1156.9,286.3 1158.7,285.0Z" fill="#5d7830"/>
<path d="M1188.7,263.5 1185.6,263.5 1185.6,258.7 1188.7,258.8Z" fill="#36451c"/>
<path d="M1185.6,263.5 1182.5,263.6 1182.5,258.8 1185.6,258.7Z" fill="#2e3b18"/>
<path d="M1191.7,263.7 1188.7,263.5 1188.7,258.8 1191.8,258.9Z" fill="#3d4f20"/>
<path d="M1182.5,263.6 1179.4,263.9 1179.4,259.1 1182.5,258.8Z" fill="#263113"/>
<path d="M1165.4,276.7 1163.0,277.8 1162.9,273.0 1165.4,272.0Z" fill="#485e25"/>
<path d="M1194.8,264.0 1191.7,263.7 1191.8,258.9 1194.8,259.2Z" fill="#455924"/>
<path d="M1170.7,270.3 1168.0,271.1 1167.9,266.3 1170.6,265.5Z" fill="#394a1e"/>
<path d="M1216.8,291.6 1215.0,290.2 1215.1,285.5 1216.8,286.9Z" fill="#76993d"/>
<path d="M1179.4,263.9 1176.4,264.3 1176.4,259.5 1179.4,259.1Z" fill="#212b11"/>
<path d="M1160.8,283.7 1158.7,285.0 1158.7,280.2 1160.7,279.0Z" fill="#566f2c"/>
<path d="M1197.8,264.5 1194.8,264.0 1194.8,259.2 1197.8,259.7Z" fill="#4c6327"/>
<path d="M1210.9,278.2 1208.6,277.2 1208.6,272.4 1211.0,273.5Z" fill="#6b8a37"/>
<path d="M1206.1,271.4 1203.4,270.6 1203.5,265.8 1206.1,266.6Z" fill="#607c31"/>
<path d="M1155.3,297.2 1153.9,298.7 1153.9,294.0 1155.3,292.5Z" fill="#688636"/>
<path d="M1176.4,264.3 1173.5,264.8 1173.5,260.0 1176.4,259.5Z" fill="#293515"/>
<path d="M1215.1,285.5 1213.1,284.2 1213.1,279.5 1215.1,280.8Z" fill="#73953b"/>
<path d="M1200.7,265.1 1197.8,264.5 1197.8,259.7 1200.7,260.3Z" fill="#536c2b"/>
<path d="M1168.0,271.1 1165.4,272.0 1165.3,267.2 1167.9,266.3Z" fill="#415421"/>
<path d="M1156.9,291.1 1155.3,292.5 1155.2,287.8 1156.9,286.3Z" fill="#627f33"/>
<path d="M1219.5,299.4 1218.2,297.8 1218.3,293.1 1219.6,294.7Z" fill="#7b9f3f"/>
<path d="M1163.0,277.8 1160.7,279.0 1160.7,274.2 1162.9,273.0Z" fill="#4f6729"/>
<path d="M1173.5,264.8 1170.6,265.5 1170.6,260.7 1173.5,260.0Z" fill="#314019"/>
<path d="M1208.6,272.4 1206.1,271.4 1206.1,266.6 1208.7,267.6Z" fill="#658334"/>
<path d="M1213.1,279.5 1210.9,278.2 1211.0,273.5 1213.2,274.7Z" fill="#6f9039"/>
<path d="M1203.5,265.8 1200.7,265.1 1200.7,260.3 1203.5,261.0Z" fill="#5a742e"/>
<path d="M1188.7,258.8 1185.6,258.7 1185.6,253.9 1188.7,254.0Z" fill="#36451c"/>
<path d="M1218.3,293.1 1216.8,291.6 1216.8,286.9 1218.4,288.4Z" fill="#799c3e"/>
<path d="M1158.7,285.0 1156.9,286.3 1156.8,281.6 1158.7,280.2Z" fill="#5d7830"/>
<path d="M1185.6,258.7 1182.5,258.8 1182.5,254.0 1185.6,253.9Z" fill="#2e3b18"/>
<path d="M1191.8,258.9 1188.7,258.8 1188.7,254.0 1191.8,254.1Z" fill="#3d4f20"/>
<path d="M1182.5,258.8 1179.4,259.1 1179.4,254.3 1182.5,254.0Z" fill="#263113"/>
<path d="M1194.8,259.2 1191.8,258.9 1191.8,254.1 1194.8,254.4Z" fill="#455924"/>
<path d="M1165.4,272.0 1162.9,273.0 1162.9,268.3 1165.3,267.2Z" fill="#485e25"/>
<path d="M1170.6,265.5 1167.9,266.3 1167.9,261.5 1170.6,260.7Z" fill="#394a1e"/>
<path d="M1179.4,259.1 1176.4,259.5 1176.4,254.7 1179.4,254.3Z" fill="#212b11"/>
<path d="M1216.8,286.9 1215.1,285.5 1215.1,280.8 1216.9,282.2Z" fill="#76993d"/>
<path d="M1160.7,279.0 1158.7,280.2 1158.6,275.5 1160.7,274.2Z" fill="#566f2c"/>
<path d="M1197.8,259.7 1194.8,259.2 1194.8,254.4 1197.8,254.9Z" fill="#4c6327"/>
<path d="M1206.1,266.6 1203.5,265.8 1203.5,261.0 1206.2,261.9Z" fill="#607c31"/>
<path d="M1211.0,273.5 1208.6,272.4 1208.7,267.6 1211.0,268.7Z" fill="#6b8a37"/>
<path d="M1155.3,292.5 1153.9,294.0 1153.8,289.3 1155.2,287.8Z" fill="#688636"/>
<path d="M1176.4,259.5 1173.5,260.0 1173.4,255.2 1176.4,254.7Z" fill="#293515"/>
<path d="M1215.1,280.8 1213.1,279.5 1213.2,274.7 1215.2,276.0Z" fill="#73953b"/>
<path d="M1200.7,260.3 1197.8,259.7 1197.8,254.9 1200.7,255.5Z" fill="#536c2b"/>
<path d="M1167.9,266.3 1165.3,267.2 1165.3,262.4 1167.9,261.5Z" fill="#415421"/>
<path d="M1156.9,286.3 1155.2,287.8 1155.2,283.0 1156.8,281.6Z" fill="#627f33"/>
<path d="M1162.9,273.0 1160.7,274.2 1160.6,269.4 1162.9,268.3Z" fill="#4f6729"/>
<path d="M1219.6,294.7 1218.3,293.1 1218.4,288.4 1219.7,289.9Z" fill="#7b9f3f"/>
<path d="M1173.5,260.0 1170.6,260.7 1170.6,255.9 1173.4,255.2Z" fill="#314019"/>
<path d="M1208.7,267.6 1206.1,266.6 1206.2,261.9 1208.7,262.8Z" fill="#658334"/>
<path d="M1203.5,261.0 1200.7,260.3 1200.7,255.5 1203.5,256.2Z" fill="#5a742e"/>
<path d="M1213.2,274.7 1211.0,273.5 1211.0,268.7 1213.2,269.9Z" fill="#6f9039"/>
<path d="M1218.4,288.4 1216.8,286.9 1216.9,282.2 1218.4,283.6Z" fill="#799c3e"/>
<path d="M1158.7,280.2 1156.8,281.6 1156.7,276.8 1158.6,275.5Z" fill="#5d7830"/>
<path d="M1165.3,267.2 1162.9,268.3 1162.8,263.5 1165.3,262.4Z" fill="#485e25"/>
<path d="M1170.6,260.7 1167.9,261.5 1167.8,256.7 1170.6,255.9Z" fill="#394a1e"/>
<path d="M1153.9,294.0 1152.7,295.6 1152.6,290.9 1153.8,289.3Z" fill="#6d8c38"/>
<path d="M1216.9,282.2 1215.1,280.8 1215.2,276.0 1217.0,277.4Z" fill="#76993d"/>
<path d="M1160.7,274.2 1158.6,275.5 1158.5,270.7 1160.6,269.4Z" fill="#566f2c"/>
<path d="M1206.2,261.9 1203.5,261.0 1203.5,256.2 1206.2,257.0Z" fill="#607c31"/>
<path d="M1211.0,268.7 1208.7,267.6 1208.7,262.8 1211.1,263.9Z" fill="#6b8a37"/>
<path d="M1155.2,287.8 1153.8,289.3 1153.7,284.5 1155.2,283.0Z" fill="#688636"/>
<path d="M1220.7,296.3 1219.6,294.7 1219.7,289.9 1220.8,291.5Z" fill="#7ca040"/>
<path d="M1215.2,276.0 1213.2,274.7 1213.2,269.9 1215.2,271.2Z" fill="#73953b"/>
<path d="M1167.9,261.5 1165.3,262.4 1165.2,257.6 1167.8,256.7Z" fill="#415421"/>
<path d="M1156.8,281.6 1155.2,283.0 1155.1,278.3 1156.7,276.8Z" fill="#627f33"/>
<path d="M1162.9,268.3 1160.6,269.4 1160.6,264.6 1162.8,263.5Z" fill="#4f6729"/>
<path d="M1219.7,289.9 1218.4,288.4 1218.4,283.6 1219.8,285.2Z" fill="#7b9f3f"/>
<path d="M1208.7,262.8 1206.2,261.9 1206.2,257.0 1208.8,258.0Z" fill="#658334"/>
<path d="M1213.2,269.9 1211.0,268.7 1211.1,263.9 1213.3,265.1Z" fill="#6f9039"/>
<path d="M1158.6,275.5 1156.7,276.8 1156.7,272.0 1158.5,270.7Z" fill="#5d7830"/>
<path d="M1218.4,283.6 1216.9,282.2 1217.0,277.4 1218.5,278.9Z" fill="#799c3e"/>
<path d="M1152.7,295.6 1151.8,297.3 1151.7,292.5 1152.6,290.9Z" fill="#71923a"/>
<path d="M1165.3,262.4 1162.8,263.5 1162.8,258.7 1165.2,257.6Z" fill="#485e25"/>
<path d="M1153.8,289.3 1152.6,290.9 1152.6,286.1 1153.7,284.5Z" fill="#6d8c38"/>
<path d="M1217.0,277.4 1215.2,276.0 1215.2,271.2 1217.0,272.6Z" fill="#76993d"/>
<path d="M1160.6,269.4 1158.5,270.7 1158.5,265.9 1160.6,264.6Z" fill="#566f2c"/>
<path d="M1221.5,297.9 1220.7,296.3 1220.8,291.5 1221.6,293.2Z" fill="#7ca140"/>
<path d="M1211.1,263.9 1208.7,262.8 1208.8,258.0 1211.1,259.1Z" fill="#6b8a37"/>
<path d="M1155.2,283.0 1153.7,284.5 1153.7,279.8 1155.1,278.3Z" fill="#688636"/>
<path d="M1220.8,291.5 1219.7,289.9 1219.8,285.2 1220.8,286.8Z" fill="#7ca040"/>
<path d="M1215.2,271.2 1213.2,269.9 1213.3,265.1 1215.3,266.4Z" fill="#73953b"/>
<path d="M1162.8,263.5 1160.6,264.6 1160.5,259.8 1162.8,258.7Z" fill="#4f6729"/>
<path d="M1156.7,276.8 1155.1,278.3 1155.0,273.5 1156.7,272.0Z" fill="#627f33"/>
<path d="M1219.8,285.2 1218.4,283.6 1218.5,278.9 1219.8,280.4Z" fill="#7b9f3f"/>
<path d="M1151.8,297.3 1151.2,298.9 1151.1,294.2 1151.7,292.5Z" fill="#74973c"/>
<path d="M1213.3,265.1 1211.1,263.9 1211.1,259.1 1213.4,260.3Z" fill="#6f9039"/>
<path d="M1158.5,270.7 1156.7,272.0 1156.6,267.2 1158.5,265.9Z" fill="#5d7830"/>
<path d="M1218.5,278.9 1217.0,277.4 1217.0,272.6 1218.6,274.1Z" fill="#799c3e"/>
<path d="M1152.6,290.9 1151.7,292.5 1151.7,287.8 1152.6,286.1Z" fill="#71923a"/>
<path d="M1222.0,299.6 1221.5,297.9 1221.6,293.2 1222.1,294.9Z" fill="#7ca140"/>
<path d="M1153.7,284.5 1152.6,286.1 1152.5,281.4 1153.7,279.8Z" fill="#6d8c38"/>
<path d="M1217.0,272.6 1215.2,271.2 1215.3,266.4 1217.1,267.8Z" fill="#76993d"/>
<path d="M1160.6,264.6 1158.5,265.9 1158.4,261.1 1160.5,259.8Z" fill="#566f2c"/>
<path d="M1221.6,293.2 1220.8,291.5 1220.8,286.8 1221.6,288.4Z" fill="#7ca140"/>
<path d="M1155.1,278.3 1153.7,279.8 1153.6,275.0 1155.0,273.5Z" fill="#688636"/>
<path d="M1220.8,286.8 1219.8,285.2 1219.8,280.4 1220.9,282.0Z" fill="#7ca040"/>
<path d="M1215.3,266.4 1213.3,265.1 1213.4,260.3 1215.4,261.6Z" fill="#73953b"/>
<path d="M1156.7,272.0 1155.0,273.5 1155.0,268.7 1156.6,267.2Z" fill="#627f33"/>
<path d="M1219.8,280.4 1218.5,278.9 1218.6,274.1 1219.9,275.6Z" fill="#7b9f3f"/>
<path d="M1151.7,292.5 1151.1,294.2 1151.0,289.4 1151.7,287.8Z" fill="#74973c"/>
<path d="M1158.5,265.9 1156.6,267.2 1156.5,262.4 1158.4,261.1Z" fill="#5d7830"/>
<path d="M1218.6,274.1 1217.0,272.6 1217.1,267.8 1218.6,269.3Z" fill="#799c3e"/>
<path d="M1152.6,286.1 1151.7,287.8 1151.6,283.0 1152.5,281.4Z" fill="#71923a"/>
<path d="M1222.1,294.9 1221.6,293.2 1221.6,288.4 1222.2,290.1Z" fill="#7ca140"/>
<path d="M1153.7,279.8 1152.5,281.4 1152.4,276.6 1153.6,275.0Z" fill="#6d8c38"/>
<path d="M1217.1,267.8 1215.3,266.4 1215.4,261.6 1217.1,263.0Z" fill="#76993d"/>
<path d="M1221.6,288.4 1220.8,286.8 1220.9,282.0 1221.7,283.7Z" fill="#7ca140"/>
<path d="M1155.0,273.5 1153.6,275.0 1153.5,270.2 1155.0,268.7Z" fill="#688636"/>
<path d="M1220.9,282.0 1219.8,280.4 1219.9,275.6 1221.0,277.2Z" fill="#7ca040"/>
<path d="M1156.6,267.2 1155.0,268.7 1154.9,263.8 1156.5,262.4Z" fill="#627f33"/>
<path d="M1151.1,294.2 1150.7,295.9 1150.6,291.1 1151.0,289.4Z" fill="#779a3e"/>
<path d="M1219.9,275.6 1218.6,274.1 1218.6,269.3 1220.0,270.8Z" fill="#7b9f3f"/>
<path d="M1151.7,287.8 1151.0,289.4 1150.9,284.7 1151.6,283.0Z" fill="#74973c"/>
<path d="M1218.6,269.3 1217.1,267.8 1217.1,263.0 1218.7,264.4Z" fill="#799c3e"/>
<path d="M1222.4,296.6 1222.1,294.9 1222.2,290.1 1222.5,291.8Z" fill="#7b9f40"/>
<path d="M1152.5,281.4 1151.6,283.0 1151.5,278.2 1152.4,276.6Z" fill="#71923a"/>
<path d="M1222.2,290.1 1221.6,288.4 1221.7,283.7 1222.3,285.3Z" fill="#7ca140"/>
<path d="M1153.6,275.0 1152.4,276.6 1152.4,271.7 1153.5,270.2Z" fill="#6d8c38"/>
<path d="M1221.7,283.7 1220.9,282.0 1221.0,277.2 1221.8,278.9Z" fill="#7ca140"/>
<path d="M1155.0,268.7 1153.5,270.2 1153.5,265.3 1154.9,263.8Z" fill="#688636"/>
<path d="M1150.7,295.9 1150.6,297.6 1150.5,292.9 1150.6,291.1Z" fill="#7a9d3f"/>
<path d="M1221.0,277.2 1219.9,275.6 1220.0,270.8 1221.0,272.4Z" fill="#7ca040"/>
<path d="M1151.0,289.4 1150.6,291.1 1150.5,286.4 1150.9,284.7Z" fill="#779a3e"/>
<path d="M1220.0,270.8 1218.6,269.3 1218.7,264.4 1220.0,266.0Z" fill="#7b9f3f"/>
<path d="M1151.6,283.0 1150.9,284.7 1150.9,279.9 1151.5,278.2Z" fill="#74973c"/>
<path d="M1222.4,298.3 1222.4,296.6 1222.5,291.8 1222.5,293.6Z" fill="#7a9d3f"/>
<path d="M1152.4,276.6 1151.5,278.2 1151.4,273.4 1152.4,271.7Z" fill="#71923a"/>
<path d="M1222.5,291.8 1222.2,290.1 1222.3,285.3 1222.5,287.0Z" fill="#7b9f40"/>
<path d="M1222.3,285.3 1221.7,283.7 1221.8,278.9 1222.3,280.5Z" fill="#7ca140"/>
<path d="M1153.5,270.2 1152.4,271.7 1152.3,266.9 1153.5,265.3Z" fill="#6d8c38"/>
<path d="M1221.8,278.9 1221.0,277.2 1221.0,272.4 1221.9,274.0Z" fill="#7ca140"/>
<path d="M1221.0,272.4 1220.0,270.8 1220.0,266.0 1221.1,267.6Z" fill="#7ca040"/>
<path d="M1150.6,291.1 1150.5,292.9 1150.4,288.1 1150.5,286.4Z" fill="#7a9d3f"/>
<path d="M1150.9,284.7 1150.5,286.4 1150.5,281.5 1150.9,279.9Z" fill="#779a3e"/>
<path d="M1151.5,278.2 1150.9,279.9 1150.8,275.0 1151.4,273.4Z" fill="#74973c"/>
<path d="M1222.5,293.6 1222.5,291.8 1222.5,287.0 1222.5,288.8Z" fill="#7a9d3f"/>
<path d="M1152.4,271.7 1151.4,273.4 1151.4,268.5 1152.3,266.9Z" fill="#71923a"/>
<path d="M1222.5,287.0 1222.3,285.3 1222.3,280.5 1222.6,282.2Z" fill="#7b9f40"/>
<path d="M1222.3,280.5 1221.8,278.9 1221.9,274.0 1222.4,275.7Z" fill="#7ca140"/>
<path d="M1221.9,274.0 1221.0,272.4 1221.1,267.6 1221.9,269.2Z" fill="#7ca140"/>
<path d="M1150.5,286.4 1150.4,288.1 1150.3,283.3 1150.5,281.5Z" fill="#7a9d3f"/>
<path d="M1150.9,279.9 1150.5,281.5 1150.4,276.7 1150.8,275.0Z" fill="#779a3e"/>
<path d="M1151.4,273.4 1150.8,275.0 1150.7,270.2 1151.4,268.5Z" fill="#74973c"/>
<path d="M1222.5,288.8 1222.5,287.0 1222.6,282.2 1222.6,283.9Z" fill="#7a9d3f"/>
<path d="M1222.6,282.2 1222.3,280.5 1222.4,275.7 1222.7,277.4Z" fill="#7b9f40"/>
<path d="M1222.4,275.7 1221.9,274.0 1221.9,269.2 1222.5,270.9Z" fill="#7ca140"/>
<path d="M1150.5,281.5 1150.3,283.3 1150.3,278.4 1150.4,276.7Z" fill="#7a9d3f"/>
<path d="M1150.8,275.0 1150.4,276.7 1150.3,271.9 1150.7,270.2Z" fill="#779a3e"/>
<path d="M1222.6,283.9 1222.6,282.2 1222.7,277.4 1222.7,279.1Z" fill="#7a9d3f"/>
<path d="M1222.7,277.4 1222.4,275.7 1222.5,270.9 1222.8,272.6Z" fill="#7b9f40"/>
<path d="M1150.4,276.7 1150.3,278.4 1150.2,273.6 1150.3,271.9Z" fill="#7a9d3f"/>
<path d="M1222.7,279.1 1222.7,277.4 1222.8,272.6 1222.8,274.3Z" fill="#7a9d3f"/>
<g shape-rendering="auto"><path d="M1186.50,361.50 L1186.50,273.06 M1186.50,332.80 L1163.56,325.72 M1186.50,303.33 L1163.25,296.35 M1186.50,273.06 L1162.94,266.19" stroke="#000" stroke-width="1" fill="none"/></g>
</g>
<g clip-path="url(#hy)" shape-rendering="crispEdges">
<path d="M1166.07,428.68 L1165.88,425.77 L1165.39,422.78 L1164.59,419.73 L1163.49,416.66 L1162.10,413.59 L1160.43,410.56 L1158.50,407.60 L1156.34,404.74 L1153.95,402.00 L1151.37,399.42 L1148.61,397.02 L1145.72,394.82 L1142.71,392.85 L1139.62,391.13 L1136.48,389.66 L1133.33,388.48 L1130.18,387.59 L1127.08,386.99 L1124.06,386.70 L1121.14,386.70 L1118.35,387.02 L1115.72,387.62 L1113.28,388.52 L1111.05,389.70 L1109.04,391.15 L1107.28,392.85 L1105.79,394.79 L1104.57,396.94 L1103.64,399.29 L1103.00,401.80 L1102.67,404.46 L1102.63,407.24 L1102.89,410.12 L1103.45,413.06 L1104.29,416.04 L1105.42,419.04 L1106.82,422.01 L1108.48,424.94 L1110.37,427.80 L1112.49,430.57 L1114.81,433.21 L1117.31,435.71 L1119.97,438.03 L1122.77,440.17 L1125.67,442.10 L1128.66,443.80 L1131.70,445.25 L1134.77,446.45 L1137.84,447.37 L1140.87,448.02 L1143.85,448.38 L1146.74,448.45 L1149.52,448.23 L1152.16,447.72 L1154.64,446.92 L1156.92,445.84 L1158.99,444.48 L1160.83,442.87 L1162.41,441.01 L1163.73,438.92 L1164.76,436.62 L1165.50,434.13 L1165.94,431.47Z" fill="#9ecc51"/>
<path d="M1172.9,390.8 1168.9,392.0 1165.2,384.4 1169.9,382.9Z" fill="#7b9f40"/>
<path d="M1165.2,384.4 1160.8,386.2 1156.6,378.5 1161.7,376.4Z" fill="#678535"/>
<path d="M1168.9,392.0 1165.3,393.6 1160.8,386.2 1165.2,384.4Z" fill="#75973c"/>
<path d="M1160.8,386.2 1156.8,388.4 1152.0,381.0 1156.6,378.5Z" fill="#607c32"/>
<path d="M1173.0,399.2 1170.3,400.4 1165.3,393.6 1168.9,392.0Z" fill="#81a743"/>
<path d="M1165.3,393.6 1162.1,395.4 1156.8,388.4 1160.8,386.2Z" fill="#6f8f39"/>
<path d="M1170.3,400.4 1167.8,401.8 1162.1,395.4 1165.3,393.6Z" fill="#7ca140"/>
<path d="M1156.8,388.4 1153.3,390.9 1147.9,383.9 1152.0,381.0Z" fill="#59732e"/>
<path d="M1162.1,395.4 1159.2,397.4 1153.3,390.9 1156.8,388.4Z" fill="#698836"/>
<path d="M1167.8,401.8 1165.6,403.3 1159.2,397.4 1162.1,395.4Z" fill="#789b3e"/>
<path d="M1159.2,397.4 1156.8,399.6 1150.3,393.6 1153.3,390.9Z" fill="#648134"/>
<path d="M1153.3,390.9 1150.3,393.6 1144.4,387.0 1147.9,383.9Z" fill="#536c2b"/>
<path d="M1173.8,407.5 1172.3,408.6 1165.6,403.3 1167.8,401.8Z" fill="#85ac45"/>
<path d="M1165.6,403.3 1163.7,405.1 1156.8,399.6 1159.2,397.4Z" fill="#74963c"/>
<path d="M1147.9,383.9 1144.4,387.0 1139.3,380.0 1143.2,376.5Z" fill="#415522"/>
<path d="M1172.3,408.6 1171.1,409.8 1163.7,405.1 1165.6,403.3Z" fill="#82a843"/>
<path d="M1156.8,399.6 1154.9,402.1 1148.0,396.6 1150.3,393.6Z" fill="#607c31"/>
<path d="M1163.7,405.1 1162.3,406.9 1154.9,402.1 1156.8,399.6Z" fill="#70913a"/>
<path d="M1150.3,393.6 1148.0,396.6 1141.7,390.4 1144.4,387.0Z" fill="#4e6528"/>
<path d="M1171.1,409.8 1170.1,411.0 1162.3,406.9 1163.7,405.1Z" fill="#80a542"/>
<path d="M1144.4,387.0 1141.7,390.4 1136.2,383.8 1139.3,380.0Z" fill="#3b4d1f"/>
<path d="M1170.1,411.0 1169.4,412.4 1161.2,408.9 1162.3,406.9Z" fill="#7da241"/>
<path d="M1162.3,406.9 1161.2,408.9 1153.5,404.6 1154.9,402.1Z" fill="#6d8d38"/>
<path d="M1154.9,402.1 1153.5,404.6 1146.3,399.7 1148.0,396.6Z" fill="#5c772f"/>
<path d="M1148.0,396.6 1146.3,399.7 1139.7,394.0 1141.7,390.4Z" fill="#495f26"/>
<path d="M1169.4,412.4 1169.0,413.7 1160.6,410.9 1161.2,408.9Z" fill="#7ca040"/>
<path d="M1161.2,408.9 1160.6,410.9 1152.6,407.3 1153.5,404.6Z" fill="#6b8a37"/>
<path d="M1141.7,390.4 1139.7,394.0 1133.9,387.8 1136.2,383.8Z" fill="#36461c"/>
<path d="M1169.0,413.7 1168.9,415.1 1160.4,413.0 1160.6,410.9Z" fill="#7a9e3f"/>
<path d="M1153.5,404.6 1152.6,407.3 1145.2,402.9 1146.3,399.7Z" fill="#59732e"/>
<path d="M1160.6,410.9 1160.4,413.0 1152.4,410.0 1152.6,407.3Z" fill="#698836"/>
<path d="M1146.3,399.7 1145.2,402.9 1138.5,397.8 1139.7,394.0Z" fill="#465a24"/>
<path d="M1168.9,415.1 1169.1,416.6 1160.7,415.1 1160.4,413.0Z" fill="#7a9d3f"/>
<path d="M1136.2,383.8 1133.9,387.8 1128.9,381.2 1131.4,376.8Z" fill="#232d12"/>
<path d="M1152.6,407.3 1152.4,410.0 1144.9,406.2 1145.2,402.9Z" fill="#57702d"/>
<path d="M1169.1,416.6 1169.6,417.9 1161.4,417.1 1160.7,415.1Z" fill="#799d3f"/>
<path d="M1160.4,413.0 1160.7,415.1 1152.7,412.7 1152.4,410.0Z" fill="#688736"/>
<path d="M1139.7,394.0 1138.5,397.8 1132.5,392.0 1133.9,387.8Z" fill="#32411a"/>
<path d="M1169.6,417.9 1170.4,419.3 1162.6,419.1 1161.4,417.1Z" fill="#7a9d3f"/>
<path d="M1145.2,402.9 1144.9,406.2 1138.1,401.6 1138.5,397.8Z" fill="#435723"/>
<path d="M1160.7,415.1 1161.4,417.1 1153.6,415.4 1152.7,412.7Z" fill="#688636"/>
<path d="M1152.4,410.0 1152.7,412.7 1145.3,409.5 1144.9,406.2Z" fill="#556e2c"/>
<path d="M1133.9,387.8 1132.5,392.0 1127.4,385.7 1128.9,381.2Z" fill="#202a11"/>
<path d="M1170.4,419.3 1171.4,420.5 1164.1,421.0 1162.6,419.1Z" fill="#7a9e3f"/>
<path d="M1138.5,397.8 1138.1,401.6 1132.0,396.3 1132.5,392.0Z" fill="#2f3d18"/>
<path d="M1171.4,420.5 1172.7,421.7 1166.1,422.7 1164.1,421.0Z" fill="#7ca040"/>
<path d="M1161.4,417.1 1162.6,419.1 1155.1,418.0 1153.6,415.4Z" fill="#688736"/>
<path d="M1144.9,406.2 1145.3,409.5 1138.5,405.4 1138.1,401.6Z" fill="#425522"/>
<path d="M1152.7,412.7 1153.6,415.4 1146.4,412.7 1145.3,409.5Z" fill="#556e2c"/>
<path d="M1128.9,381.2 1127.4,385.7 1123.3,379.0 1124.9,374.2Z" fill="#34441b"/>
<path d="M1172.7,421.7 1174.3,422.7 1168.4,424.3 1166.1,422.7Z" fill="#7da241"/>
<path d="M1162.6,419.1 1164.1,421.0 1157.1,420.4 1155.1,418.0Z" fill="#698836"/>
<path d="M1132.5,392.0 1132.0,396.3 1126.8,390.4 1127.4,385.7Z" fill="#242e12"/>
<path d="M1153.6,415.4 1155.1,418.0 1148.2,415.9 1146.4,412.7Z" fill="#556e2c"/>
<path d="M1138.1,401.6 1138.5,405.4 1132.5,400.6 1132.0,396.3Z" fill="#2e3b17"/>
<path d="M1145.3,409.5 1146.4,412.7 1139.7,409.2 1138.5,405.4Z" fill="#415422"/>
<path d="M1164.1,421.0 1166.1,422.7 1159.7,422.7 1157.1,420.4Z" fill="#6b8a37"/>
<path d="M1127.4,385.7 1126.8,390.4 1122.7,384.0 1123.3,379.0Z" fill="#38481d"/>
<path d="M1166.1,422.7 1168.4,424.3 1162.7,424.7 1159.7,422.7Z" fill="#6d8d38"/>
<path d="M1155.1,418.0 1157.1,420.4 1150.6,418.9 1148.2,415.9Z" fill="#57702d"/>
<path d="M1132.0,396.3 1132.5,400.6 1127.3,395.1 1126.8,390.4Z" fill="#263113"/>
<path d="M1146.4,412.7 1148.2,415.9 1141.8,412.8 1139.7,409.2Z" fill="#425522"/>
<path d="M1138.5,405.4 1139.7,409.2 1133.8,404.8 1132.5,400.6Z" fill="#2d3a17"/>
<path d="M1168.4,424.3 1171.0,425.6 1166.2,426.5 1162.7,424.7Z" fill="#70913a"/>
<path d="M1157.1,420.4 1159.7,422.7 1153.7,421.6 1150.6,418.9Z" fill="#59732e"/>
<path d="M1171.0,425.6 1173.9,426.7 1170.0,428.0 1166.2,426.5Z" fill="#74963c"/>
<path d="M1126.8,390.4 1127.3,395.1 1123.2,388.9 1122.7,384.0Z" fill="#3a4b1e"/>
<path d="M1148.2,415.9 1150.6,418.9 1144.7,416.3 1141.8,412.8Z" fill="#435723"/>
<path d="M1159.7,422.7 1162.7,424.7 1157.4,424.1 1153.7,421.6Z" fill="#5c772f"/>
<path d="M1132.5,400.6 1133.8,404.8 1128.8,399.7 1127.3,395.1Z" fill="#263214"/>
<path d="M1139.7,409.2 1141.8,412.8 1136.2,408.9 1133.8,404.8Z" fill="#2d3b17"/>
<path d="M1162.7,424.7 1166.2,426.5 1161.6,426.3 1157.4,424.1Z" fill="#607c31"/>
<path d="M1150.6,418.9 1153.7,421.6 1148.3,419.5 1144.7,416.3Z" fill="#465a24"/>
<path d="M1122.7,384.0 1123.2,388.9 1120.0,382.3 1119.5,377.1Z" fill="#4e6528"/>
<path d="M1166.2,426.5 1170.0,428.0 1166.3,428.1 1161.6,426.3Z" fill="#648134"/>
<path d="M1141.8,412.8 1144.7,416.3 1139.4,412.8 1136.2,408.9Z" fill="#2f3d18"/>
<path d="M1127.3,395.1 1128.8,399.7 1124.7,393.8 1123.2,388.9Z" fill="#3b4c1e"/>
<path d="M1133.8,404.8 1136.2,408.9 1131.3,404.1 1128.8,399.7Z" fill="#263113"/>
<path d="M1170.0,428.0 1174.1,429.2 1171.3,429.6 1166.3,428.1Z" fill="#698836"/>
<path d="M1153.7,421.6 1157.4,424.1 1152.5,422.4 1148.3,419.5Z" fill="#495f26"/>
<path d="M1144.7,416.3 1148.3,419.5 1143.4,416.4 1139.4,412.8Z" fill="#32411a"/>
<path d="M1157.4,424.1 1161.6,426.3 1157.4,425.0 1152.5,422.4Z" fill="#4e6528"/>
<path d="M1123.2,388.9 1124.7,393.8 1121.7,387.4 1120.0,382.3Z" fill="#4f6629"/>
<path d="M1136.2,408.9 1139.4,412.8 1134.8,408.4 1131.3,404.1Z" fill="#242e12"/>
<path d="M1128.8,399.7 1131.3,404.1 1127.4,398.6 1124.7,393.8Z" fill="#3a4b1e"/>
<path d="M1161.6,426.3 1166.3,428.1 1162.9,427.1 1157.4,425.0Z" fill="#536b2b"/>
<path d="M1148.3,419.5 1152.5,422.4 1148.2,419.7 1143.4,416.4Z" fill="#36461c"/>
<path d="M1139.5,410.7 1141.8,412.8 1139.0,415.8 1136.7,413.7Z" fill="#658234"/>
<path d="M1137.4,408.5 1139.5,410.7 1136.7,413.7 1134.6,411.5Z" fill="#59732e"/>
<path d="M1141.8,412.8 1144.2,414.7 1141.4,417.7 1139.0,415.8Z" fill="#6f9039"/>
<path d="M1135.4,406.2 1137.4,408.5 1134.6,411.5 1132.6,409.2Z" fill="#4e6428"/>
<path d="M1144.2,414.7 1146.7,416.5 1143.9,419.5 1141.4,417.7Z" fill="#7a9d3f"/>
<path d="M1133.5,403.8 1135.4,406.2 1132.6,409.2 1130.7,406.8Z" fill="#415522"/>
<path d="M1146.7,416.5 1149.3,418.0 1146.5,421.1 1143.9,419.5Z" fill="#83a944"/>
<path d="M1131.9,401.3 1133.5,403.8 1130.7,406.8 1129.0,404.3Z" fill="#35451b"/>
<path d="M1149.3,418.0 1151.9,419.5 1149.1,422.5 1146.5,421.1Z" fill="#8cb548"/>
<path d="M1130.4,398.7 1131.9,401.3 1129.0,404.3 1127.5,401.7Z" fill="#293415"/>
<path d="M1151.9,419.5 1154.6,420.7 1151.8,423.7 1149.1,422.5Z" fill="#94bf4c"/>
<path d="M1129.1,396.1 1130.4,398.7 1127.5,401.7 1126.2,399.1Z" fill="#232d12"/>
<path d="M1154.6,420.7 1157.2,421.7 1154.5,424.7 1151.8,423.7Z" fill="#9bc850"/>
<path d="M1136.7,413.7 1139.0,415.8 1136.2,418.8 1133.9,416.7Z" fill="#658234"/>
<path d="M1134.6,411.5 1136.7,413.7 1133.9,416.7 1131.8,414.5Z" fill="#59732e"/>
<path d="M1139.0,415.8 1141.4,417.7 1138.6,420.7 1136.2,418.8Z" fill="#6f9039"/>
<path d="M1132.6,409.2 1134.6,411.5 1131.8,414.5 1129.7,412.2Z" fill="#4e6428"/>
<path d="M1128.0,393.5 1129.1,396.1 1126.2,399.1 1125.2,396.5Z" fill="#2f3d18"/>
<path d="M1141.4,417.7 1143.9,419.5 1141.1,422.5 1138.6,420.7Z" fill="#7a9d3f"/>
<path d="M1130.7,406.8 1132.6,409.2 1129.7,412.2 1127.9,409.8Z" fill="#415522"/>
<path d="M1143.9,419.5 1146.5,421.1 1143.7,424.1 1141.1,422.5Z" fill="#83a944"/>
<path d="M1157.2,421.7 1159.9,422.5 1157.2,425.5 1154.5,424.7Z" fill="#a1d053"/>
<path d="M1129.0,404.3 1130.7,406.8 1127.9,409.8 1126.2,407.3Z" fill="#35451b"/>
<path d="M1146.5,421.1 1149.1,422.5 1146.3,425.5 1143.7,424.1Z" fill="#8cb548"/>
<path d="M1127.1,390.9 1128.0,393.5 1125.2,396.5 1124.3,393.9Z" fill="#3c4d1f"/>
<path d="M1127.5,401.7 1129.0,404.3 1126.2,407.3 1124.7,404.7Z" fill="#293415"/>
<path d="M1159.9,422.5 1162.6,423.1 1159.9,426.1 1157.2,425.5Z" fill="#a6d756"/>
<path d="M1149.1,422.5 1151.8,423.7 1149.0,426.8 1146.3,425.5Z" fill="#94bf4c"/>
<path d="M1126.2,399.1 1127.5,401.7 1124.7,404.7 1123.4,402.1Z" fill="#232d12"/>
<path d="M1126.5,388.3 1127.1,390.9 1124.3,393.9 1123.6,391.2Z" fill="#485d25"/>
<path d="M1151.8,423.7 1154.5,424.7 1151.7,427.8 1149.0,426.8Z" fill="#9bc850"/>
<path d="M1133.9,416.7 1136.2,418.8 1133.4,421.8 1131.1,419.8Z" fill="#658234"/>
<path d="M1131.8,414.5 1133.9,416.7 1131.1,419.8 1128.9,417.5Z" fill="#59732e"/>
<path d="M1162.6,423.1 1165.2,423.4 1162.5,426.5 1159.9,426.1Z" fill="#aadc58"/>
<path d="M1136.2,418.8 1138.6,420.7 1135.8,423.8 1133.4,421.8Z" fill="#6f9039"/>
<path d="M1129.7,412.2 1131.8,414.5 1128.9,417.5 1126.9,415.2Z" fill="#4e6428"/>
<path d="M1138.6,420.7 1141.1,422.5 1138.3,425.6 1135.8,423.8Z" fill="#7a9d3f"/>
<path d="M1125.2,396.5 1126.2,399.1 1123.4,402.1 1122.3,399.5Z" fill="#2f3d18"/>
<path d="M1127.9,409.8 1129.7,412.2 1126.9,415.2 1125.0,412.8Z" fill="#415522"/>
<path d="M1141.1,422.5 1143.7,424.1 1140.9,427.2 1138.3,425.6Z" fill="#83a944"/>
<path d="M1126.1,385.7 1126.5,388.3 1123.6,391.2 1123.2,388.7Z" fill="#546d2b"/>
<path d="M1154.5,424.7 1157.2,425.5 1154.4,428.6 1151.7,427.8Z" fill="#a1d053"/>
<path d="M1126.2,407.3 1127.9,409.8 1125.0,412.8 1123.3,410.3Z" fill="#35451b"/>
<path d="M1143.7,424.1 1146.3,425.5 1143.5,428.6 1140.9,427.2Z" fill="#8cb548"/>
<path d="M1165.2,423.4 1167.8,423.6 1165.1,426.6 1162.5,426.5Z" fill="#ade059"/>
<path d="M1124.3,393.9 1125.2,396.5 1122.3,399.5 1121.4,396.8Z" fill="#3c4d1f"/>
<path d="M1124.7,404.7 1126.2,407.3 1123.3,410.3 1121.8,407.7Z" fill="#293415"/>
<path d="M1157.2,425.5 1159.9,426.1 1157.1,429.2 1154.4,428.6Z" fill="#a6d756"/>
<path d="M1146.3,425.5 1149.0,426.8 1146.2,429.8 1143.5,428.6Z" fill="#94bf4c"/>
<path d="M1125.9,383.2 1126.1,385.7 1123.2,388.7 1123.0,386.1Z" fill="#607c31"/>
<path d="M1123.4,402.1 1124.7,404.7 1121.8,407.7 1120.5,405.1Z" fill="#232d12"/>
<path d="M1123.6,391.2 1124.3,393.9 1121.4,396.8 1120.8,394.2Z" fill="#485d25"/>
<path d="M1167.8,423.6 1170.3,423.5 1167.6,426.5 1165.1,426.6Z" fill="#afe25a"/>
<path d="M1149.0,426.8 1151.7,427.8 1148.9,430.8 1146.2,429.8Z" fill="#9bc850"/>
<path d="M1131.1,419.8 1133.4,421.8 1130.6,424.9 1128.3,422.8Z" fill="#658234"/>
<path d="M1128.9,417.5 1131.1,419.8 1128.3,422.8 1126.1,420.6Z" fill="#59732e"/>
<path d="M1159.9,426.1 1162.5,426.5 1159.7,429.5 1157.1,429.2Z" fill="#aadc58"/>
<path d="M1133.4,421.8 1135.8,423.8 1133.0,426.8 1130.6,424.9Z" fill="#6f9039"/>
<path d="M1126.9,415.2 1128.9,417.5 1126.1,420.6 1124.0,418.3Z" fill="#4e6428"/>
<path d="M1135.8,423.8 1138.3,425.6 1135.5,428.6 1133.0,426.8Z" fill="#7a9d3f"/>
<path d="M1122.3,399.5 1123.4,402.1 1120.5,405.1 1119.4,402.5Z" fill="#2f3d18"/>
<path d="M1125.0,412.8 1126.9,415.2 1124.0,418.3 1122.2,415.8Z" fill="#415522"/>
<path d="M1125.9,380.7 1125.9,383.2 1123.0,386.1 1123.1,383.7Z" fill="#6b8a37"/>
<path d="M1138.3,425.6 1140.9,427.2 1138.1,430.2 1135.5,428.6Z" fill="#83a944"/>
<path d="M1123.2,388.7 1123.6,391.2 1120.8,394.2 1120.3,391.6Z" fill="#546d2b"/>
<path d="M1151.7,427.8 1154.4,428.6 1151.6,431.7 1148.9,430.8Z" fill="#a1d053"/>
<path d="M1123.3,410.3 1125.0,412.8 1122.2,415.8 1120.5,413.3Z" fill="#35451b"/>
<path d="M1140.9,427.2 1143.5,428.6 1140.7,431.7 1138.1,430.2Z" fill="#8cb548"/>
<path d="M1162.5,426.5 1165.1,426.6 1162.3,429.7 1159.7,429.5Z" fill="#ade059"/>
<path d="M1121.4,396.8 1122.3,399.5 1119.4,402.5 1118.6,399.8Z" fill="#3c4d1f"/>
<path d="M1121.8,407.7 1123.3,410.3 1120.5,413.3 1119.0,410.7Z" fill="#293415"/>
<path d="M1154.4,428.6 1157.1,429.2 1154.3,432.3 1151.6,431.7Z" fill="#a6d756"/>
<path d="M1143.5,428.6 1146.2,429.8 1143.4,432.9 1140.7,431.7Z" fill="#94bf4c"/>
<path d="M1123.0,386.1 1123.2,388.7 1120.3,391.6 1120.2,389.1Z" fill="#607c31"/>
<path d="M1120.5,405.1 1121.8,407.7 1119.0,410.7 1117.7,408.1Z" fill="#232d12"/>
<path d="M1120.8,394.2 1121.4,396.8 1118.6,399.8 1117.9,397.2Z" fill="#485d25"/>
<path d="M1165.1,426.6 1167.6,426.5 1164.8,429.6 1162.3,429.7Z" fill="#afe25a"/>
<path d="M1146.2,429.8 1148.9,430.8 1146.1,433.9 1143.4,432.9Z" fill="#9bc850"/>
<path d="M1128.3,422.8 1130.6,424.9 1127.7,428.0 1125.4,425.9Z" fill="#658234"/>
<path d="M1126.1,420.6 1128.3,422.8 1125.4,425.9 1123.2,423.6Z" fill="#59732e"/>
<path d="M1130.6,424.9 1133.0,426.8 1130.1,429.9 1127.7,428.0Z" fill="#6f9039"/>
<path d="M1157.1,429.2 1159.7,429.5 1157.0,432.6 1154.3,432.3Z" fill="#aadc58"/>
<path d="M1124.0,418.3 1126.1,420.6 1123.2,423.6 1121.2,421.3Z" fill="#4e6428"/>
<path d="M1133.0,426.8 1135.5,428.6 1132.7,431.7 1130.1,429.9Z" fill="#7a9d3f"/>
<path d="M1119.4,402.5 1120.5,405.1 1117.7,408.1 1116.6,405.5Z" fill="#2f3d18"/>
<path d="M1122.2,415.8 1124.0,418.3 1121.2,421.3 1119.3,418.9Z" fill="#415522"/>
<path d="M1123.1,383.7 1123.0,386.1 1120.2,389.1 1120.2,386.6Z" fill="#6b8a37"/>
<path d="M1135.5,428.6 1138.1,430.2 1135.2,433.3 1132.7,431.7Z" fill="#83a944"/>
<path d="M1148.9,430.8 1151.6,431.7 1148.8,434.8 1146.1,433.9Z" fill="#a1d053"/>
<path d="M1120.3,391.6 1120.8,394.2 1117.9,397.2 1117.5,394.6Z" fill="#546d2b"/>
<path d="M1120.5,413.3 1122.2,415.8 1119.3,418.9 1117.6,416.4Z" fill="#35451b"/>
<path d="M1167.6,426.5 1170.0,426.2 1167.2,429.3 1164.8,429.6Z" fill="#b0e35b"/>
<path d="M1138.1,430.2 1140.7,431.7 1137.9,434.8 1135.2,433.3Z" fill="#8cb548"/>
<path d="M1159.7,429.5 1162.3,429.7 1159.5,432.8 1157.0,432.6Z" fill="#ade059"/>
<path d="M1118.6,399.8 1119.4,402.5 1116.6,405.5 1115.7,402.8Z" fill="#3c4d1f"/>
<path d="M1119.0,410.7 1120.5,413.3 1117.6,416.4 1116.1,413.8Z" fill="#293415"/>
<path d="M1151.6,431.7 1154.3,432.3 1151.5,435.4 1148.8,434.8Z" fill="#a6d756"/>
<path d="M1140.7,431.7 1143.4,432.9 1140.6,436.0 1137.9,434.8Z" fill="#94bf4c"/>
<path d="M1123.3,381.3 1123.1,383.7 1120.2,386.6 1120.5,384.3Z" fill="#75973c"/>
<path d="M1120.2,389.1 1120.3,391.6 1117.5,394.6 1117.3,392.1Z" fill="#607c31"/>
<path d="M1117.7,408.1 1119.0,410.7 1116.1,413.8 1114.8,411.2Z" fill="#232d12"/>
<path d="M1117.9,397.2 1118.6,399.8 1115.7,402.8 1115.0,400.2Z" fill="#485d25"/>
<path d="M1162.3,429.7 1164.8,429.6 1162.1,432.7 1159.5,432.8Z" fill="#afe25a"/>
<path d="M1143.4,432.9 1146.1,433.9 1143.3,437.0 1140.6,436.0Z" fill="#9bc850"/>
<path d="M1125.4,425.9 1127.7,428.0 1124.8,431.1 1122.5,429.0Z" fill="#658234"/>
<path d="M1123.2,423.6 1125.4,425.9 1122.5,429.0 1120.3,426.7Z" fill="#59732e"/>
<path d="M1127.7,428.0 1130.1,429.9 1127.3,433.0 1124.8,431.1Z" fill="#6f9039"/>
<path d="M1154.3,432.3 1157.0,432.6 1154.2,435.7 1151.5,435.4Z" fill="#aadc58"/>
<path d="M1121.2,421.3 1123.2,423.6 1120.3,426.7 1118.3,424.4Z" fill="#4e6428"/>
<path d="M1130.1,429.9 1132.7,431.7 1129.8,434.8 1127.3,433.0Z" fill="#7a9d3f"/>
<path d="M1116.6,405.5 1117.7,408.1 1114.8,411.2 1113.7,408.5Z" fill="#2f3d18"/>
<path d="M1119.3,418.9 1121.2,421.3 1118.3,424.4 1116.4,421.9Z" fill="#415522"/>
<path d="M1120.2,386.6 1120.2,389.1 1117.3,392.1 1117.3,389.6Z" fill="#6b8a37"/>
<path d="M1132.7,431.7 1135.2,433.3 1132.4,436.4 1129.8,434.8Z" fill="#83a944"/>
<path d="M1146.1,433.9 1148.8,434.8 1146.0,437.9 1143.3,437.0Z" fill="#a1d053"/>
<path d="M1117.5,394.6 1117.9,397.2 1115.0,400.2 1114.6,397.6Z" fill="#546d2b"/>
<path d="M1117.6,416.4 1119.3,418.9 1116.4,421.9 1114.7,419.4Z" fill="#35451b"/>
<path d="M1135.2,433.3 1137.9,434.8 1135.1,437.9 1132.4,436.4Z" fill="#8cb548"/>
<path d="M1164.8,429.6 1167.2,429.3 1164.5,432.4 1162.1,432.7Z" fill="#b0e35b"/>
<path d="M1115.7,402.8 1116.6,405.5 1113.7,408.5 1112.8,405.9Z" fill="#3c4d1f"/>
<path d="M1157.0,432.6 1159.5,432.8 1156.8,435.9 1154.2,435.7Z" fill="#ade059"/>
<path d="M1116.1,413.8 1117.6,416.4 1114.7,419.4 1113.2,416.8Z" fill="#293415"/>
<path d="M1148.8,434.8 1151.5,435.4 1148.7,438.5 1146.0,437.9Z" fill="#a6d756"/>
<path d="M1137.9,434.8 1140.6,436.0 1137.8,439.1 1135.1,437.9Z" fill="#94bf4c"/>
<path d="M1120.5,384.3 1120.2,386.6 1117.3,389.6 1117.6,387.2Z" fill="#75973c"/>
<path d="M1117.3,392.1 1117.5,394.6 1114.6,397.6 1114.4,395.1Z" fill="#607c31"/>
<path d="M1114.8,411.2 1116.1,413.8 1113.2,416.8 1111.9,414.2Z" fill="#232d12"/>
<path d="M1115.0,400.2 1115.7,402.8 1112.8,405.9 1112.1,403.2Z" fill="#485d25"/>
<path d="M1140.6,436.0 1143.3,437.0 1140.5,440.2 1137.8,439.1Z" fill="#9bc850"/>
<path d="M1159.5,432.8 1162.1,432.7 1159.3,435.8 1156.8,435.9Z" fill="#afe25a"/>
<path d="M1167.2,429.3 1169.5,428.7 1166.8,431.8 1164.5,432.4Z" fill="#b0e35b"/>
<path d="M1122.5,429.0 1124.8,431.1 1122.0,434.2 1119.6,432.1Z" fill="#658234"/>
<path d="M1120.3,426.7 1122.5,429.0 1119.6,432.1 1117.4,429.8Z" fill="#59732e"/>
<path d="M1124.8,431.1 1127.3,433.0 1124.4,436.1 1122.0,434.2Z" fill="#6f9039"/>
<path d="M1151.5,435.4 1154.2,435.7 1151.4,438.8 1148.7,438.5Z" fill="#aadc58"/>
<path d="M1118.3,424.4 1120.3,426.7 1117.4,429.8 1115.4,427.5Z" fill="#4e6428"/>
<path d="M1127.3,433.0 1129.8,434.8 1126.9,437.9 1124.4,436.1Z" fill="#7a9d3f"/>
<path d="M1113.7,408.5 1114.8,411.2 1111.9,414.2 1110.8,411.6Z" fill="#2f3d18"/>
<path d="M1116.4,421.9 1118.3,424.4 1115.4,427.5 1113.5,425.0Z" fill="#415522"/>
<path d="M1117.3,389.6 1117.3,392.1 1114.4,395.1 1114.4,392.6Z" fill="#6b8a37"/>
<path d="M1129.8,434.8 1132.4,436.4 1129.5,439.6 1126.9,437.9Z" fill="#83a944"/>
<path d="M1121.0,382.0 1120.5,384.3 1117.6,387.2 1118.1,385.0Z" fill="#7fa441"/>
<path d="M1143.3,437.0 1146.0,437.9 1143.2,441.0 1140.5,440.2Z" fill="#a1d053"/>
<path d="M1114.6,397.6 1115.0,400.2 1112.1,403.2 1111.7,400.6Z" fill="#546d2b"/>
<path d="M1114.7,419.4 1116.4,421.9 1113.5,425.0 1111.8,422.5Z" fill="#35451b"/>
<path d="M1132.4,436.4 1135.1,437.9 1132.2,441.0 1129.5,439.6Z" fill="#8cb548"/>
<path d="M1162.1,432.7 1164.5,432.4 1161.7,435.5 1159.3,435.8Z" fill="#b0e35b"/>
<path d="M1112.8,405.9 1113.7,408.5 1110.8,411.6 1109.9,408.9Z" fill="#3c4d1f"/>
<path d="M1154.2,435.7 1156.8,435.9 1154.0,439.0 1151.4,438.8Z" fill="#ade059"/>
<path d="M1169.5,428.7 1171.7,428.0 1168.9,431.1 1166.8,431.8Z" fill="#aee15a"/>
<path d="M1113.2,416.8 1114.7,419.4 1111.8,422.5 1110.3,419.9Z" fill="#293415"/>
<path d="M1146.0,437.9 1148.7,438.5 1145.9,441.6 1143.2,441.0Z" fill="#a6d756"/>
<path d="M1135.1,437.9 1137.8,439.1 1134.9,442.2 1132.2,441.0Z" fill="#94bf4c"/>
<path d="M1117.6,387.2 1117.3,389.6 1114.4,392.6 1114.7,390.2Z" fill="#75973c"/>
<path d="M1114.4,395.1 1114.6,397.6 1111.7,400.6 1111.5,398.1Z" fill="#607c31"/>
<path d="M1111.9,414.2 1113.2,416.8 1110.3,419.9 1108.9,417.3Z" fill="#232d12"/>
<path d="M1112.1,403.2 1112.8,405.9 1109.9,408.9 1109.2,406.3Z" fill="#485d25"/>
<path d="M1137.8,439.1 1140.5,440.2 1137.6,443.3 1134.9,442.2Z" fill="#9bc850"/>
<path d="M1156.8,435.9 1159.3,435.8 1156.5,438.9 1154.0,439.0Z" fill="#afe25a"/>
<path d="M1119.6,432.1 1122.0,434.2 1119.1,437.3 1116.7,435.2Z" fill="#658234"/>
<path d="M1164.5,432.4 1166.8,431.8 1164.0,434.9 1161.7,435.5Z" fill="#b0e35b"/>
<path d="M1117.4,429.8 1119.6,432.1 1116.7,435.2 1114.5,432.9Z" fill="#59732e"/>
<path d="M1122.0,434.2 1124.4,436.1 1121.5,439.2 1119.1,437.3Z" fill="#6f9039"/>
<path d="M1148.7,438.5 1151.4,438.8 1148.5,442.0 1145.9,441.6Z" fill="#aadc58"/>
<path d="M1115.4,427.5 1117.4,429.8 1114.5,432.9 1112.5,430.6Z" fill="#4e6428"/>
<path d="M1124.4,436.1 1126.9,437.9 1124.0,441.1 1121.5,439.2Z" fill="#7a9d3f"/>
<path d="M1110.8,411.6 1111.9,414.2 1108.9,417.3 1107.8,414.6Z" fill="#2f3d18"/>
<path d="M1113.5,425.0 1115.4,427.5 1112.5,430.6 1110.6,428.1Z" fill="#415522"/>
<path d="M1126.9,437.9 1129.5,439.6 1126.7,442.7 1124.0,441.1Z" fill="#83a944"/>
<path d="M1114.4,392.6 1114.4,395.1 1111.5,398.1 1111.5,395.6Z" fill="#6b8a37"/>
<path d="M1140.5,440.2 1143.2,441.0 1140.4,444.1 1137.6,443.3Z" fill="#a1d053"/>
<path d="M1118.1,385.0 1117.6,387.2 1114.7,390.2 1115.2,388.0Z" fill="#7fa441"/>
<path d="M1111.7,400.6 1112.1,403.2 1109.2,406.3 1108.7,403.7Z" fill="#546d2b"/>
<path d="M1111.8,422.5 1113.5,425.0 1110.6,428.1 1108.9,425.6Z" fill="#35451b"/>
<path d="M1129.5,439.6 1132.2,441.0 1129.3,444.1 1126.7,442.7Z" fill="#8cb548"/>
<path d="M1159.3,435.8 1161.7,435.5 1158.9,438.6 1156.5,438.9Z" fill="#b0e35b"/>
<path d="M1109.9,408.9 1110.8,411.6 1107.8,414.6 1106.9,412.0Z" fill="#3c4d1f"/>
<path d="M1151.4,438.8 1154.0,439.0 1151.1,442.1 1148.5,442.0Z" fill="#ade059"/>
<path d="M1166.8,431.8 1168.9,431.1 1166.1,434.2 1164.0,434.9Z" fill="#aee15a"/>
<path d="M1110.3,419.9 1111.8,422.5 1108.9,425.6 1107.3,423.0Z" fill="#293415"/>
<path d="M1143.2,441.0 1145.9,441.6 1143.1,444.7 1140.4,444.1Z" fill="#a6d756"/>
<path d="M1132.2,441.0 1134.9,442.2 1132.0,445.4 1129.3,444.1Z" fill="#94bf4c"/>
<path d="M1111.5,398.1 1111.7,400.6 1108.7,403.7 1108.5,401.1Z" fill="#607c31"/>
<path d="M1114.7,390.2 1114.4,392.6 1111.5,395.6 1111.8,393.3Z" fill="#75973c"/>
<path d="M1108.9,417.3 1110.3,419.9 1107.3,423.0 1106.0,420.4Z" fill="#232d12"/>
<path d="M1118.8,382.8 1118.1,385.0 1115.2,388.0 1115.9,385.8Z" fill="#88b046"/>
<path d="M1109.2,406.3 1109.9,408.9 1106.9,412.0 1106.2,409.3Z" fill="#485d25"/>
<path d="M1134.9,442.2 1137.6,443.3 1134.8,446.4 1132.0,445.4Z" fill="#9bc850"/>
<path d="M1154.0,439.0 1156.5,438.9 1153.7,442.1 1151.1,442.1Z" fill="#afe25a"/>
<path d="M1161.7,435.5 1164.0,434.9 1161.2,438.1 1158.9,438.6Z" fill="#b0e35b"/>
<path d="M1145.9,441.6 1148.5,442.0 1145.7,445.1 1143.1,444.7Z" fill="#aadc58"/>
<path d="M1168.9,431.1 1170.9,430.1 1168.2,433.2 1166.1,434.2Z" fill="#acde59"/>
<path d="M1107.8,414.6 1108.9,417.3 1106.0,420.4 1104.9,417.7Z" fill="#2f3d18"/>
<path d="M1111.5,395.6 1111.5,398.1 1108.5,401.1 1108.6,398.7Z" fill="#6b8a37"/>
<path d="M1137.6,443.3 1140.4,444.1 1137.5,447.3 1134.8,446.4Z" fill="#a1d053"/>
<path d="M1108.7,403.7 1109.2,406.3 1106.2,409.3 1105.8,406.7Z" fill="#546d2b"/>
<path d="M1115.2,388.0 1114.7,390.2 1111.8,393.3 1112.3,391.0Z" fill="#7fa441"/>
<path d="M1119.8,380.9 1118.8,382.8 1115.9,385.8 1116.9,383.8Z" fill="#90bb4a"/>
<path d="M1156.5,438.9 1158.9,438.6 1156.1,441.8 1153.7,442.1Z" fill="#b0e35b"/>
<path d="M1106.9,412.0 1107.8,414.6 1104.9,417.7 1104.0,415.0Z" fill="#3c4d1f"/>
<path d="M1148.5,442.0 1151.1,442.1 1148.3,445.3 1145.7,445.1Z" fill="#ade059"/>
<path d="M1164.0,434.9 1166.1,434.2 1163.4,437.3 1161.2,438.1Z" fill="#aee15a"/>
<path d="M1140.4,444.1 1143.1,444.7 1140.2,447.9 1137.5,447.3Z" fill="#a6d756"/>
<path d="M1108.5,401.1 1108.7,403.7 1105.8,406.7 1105.6,404.2Z" fill="#607c31"/>
<path d="M1111.8,393.3 1111.5,395.6 1108.6,398.7 1108.8,396.3Z" fill="#75973c"/>
<path d="M1115.9,385.8 1115.2,388.0 1112.3,391.0 1113.0,388.8Z" fill="#88b046"/>
<path d="M1106.2,409.3 1106.9,412.0 1104.0,415.0 1103.3,412.4Z" fill="#485d25"/>
<path d="M1151.1,442.1 1153.7,442.1 1150.8,445.2 1148.3,445.3Z" fill="#afe25a"/>
<path d="M1158.9,438.6 1161.2,438.1 1158.4,441.2 1156.1,441.8Z" fill="#b0e35b"/>
<path d="M1143.1,444.7 1145.7,445.1 1142.9,448.3 1140.2,447.9Z" fill="#aadc58"/>
<path d="M1166.1,434.2 1168.2,433.2 1165.4,436.3 1163.4,437.3Z" fill="#acde59"/>
<path d="M1108.6,398.7 1108.5,401.1 1105.6,404.2 1105.6,401.7Z" fill="#6b8a37"/>
<path d="M1105.8,406.7 1106.2,409.3 1103.3,412.4 1102.8,409.8Z" fill="#546d2b"/>
<path d="M1112.3,391.0 1111.8,393.3 1108.8,396.3 1109.3,394.0Z" fill="#7fa441"/>
<path d="M1116.9,383.8 1115.9,385.8 1113.0,388.8 1113.9,386.8Z" fill="#90bb4a"/>
<path d="M1153.7,442.1 1156.1,441.8 1153.3,444.9 1150.8,445.2Z" fill="#b0e35b"/>
<path d="M1145.7,445.1 1148.3,445.3 1145.5,448.5 1142.9,448.3Z" fill="#ade059"/>
<path d="M1161.2,438.1 1163.4,437.3 1160.6,440.5 1158.4,441.2Z" fill="#aee15a"/>
<path d="M1168.2,433.2 1170.0,432.0 1167.2,435.1 1165.4,436.3Z" fill="#a8da57"/>
<path d="M1105.6,404.2 1105.8,406.7 1102.8,409.8 1102.6,407.2Z" fill="#607c31"/>
<path d="M1108.8,396.3 1108.6,398.7 1105.6,401.7 1105.9,399.3Z" fill="#75973c"/>
<path d="M1113.0,388.8 1112.3,391.0 1109.3,394.0 1110.0,391.9Z" fill="#88b046"/>
<path d="M1148.3,445.3 1150.8,445.2 1148.0,448.4 1145.5,448.5Z" fill="#afe25a"/>
<path d="M1156.1,441.8 1158.4,441.2 1155.6,444.4 1153.3,444.9Z" fill="#b0e35b"/>
<path d="M1118.1,382.0 1116.9,383.8 1113.9,386.8 1115.1,385.0Z" fill="#98c44e"/>
<path d="M1163.4,437.3 1165.4,436.3 1162.6,439.5 1160.6,440.5Z" fill="#acde59"/>
<path d="M1105.6,401.7 1105.6,404.2 1102.6,407.2 1102.6,404.8Z" fill="#6b8a37"/>
<path d="M1109.3,394.0 1108.8,396.3 1105.9,399.3 1106.4,397.0Z" fill="#7fa441"/>
<path d="M1113.9,386.8 1113.0,388.8 1110.0,391.9 1111.0,389.9Z" fill="#90bb4a"/>
<path d="M1150.8,445.2 1153.3,444.9 1150.4,448.1 1148.0,448.4Z" fill="#b0e35b"/>
<path d="M1158.4,441.2 1160.6,440.5 1157.7,443.6 1155.6,444.4Z" fill="#aee15a"/>
<path d="M1165.4,436.3 1167.2,435.1 1164.4,438.3 1162.6,439.5Z" fill="#a8da57"/>
<path d="M1105.9,399.3 1105.6,401.7 1102.6,404.8 1102.9,402.4Z" fill="#75973c"/>
<path d="M1110.0,391.9 1109.3,394.0 1106.4,397.0 1107.1,394.9Z" fill="#88b046"/>
<path d="M1153.3,444.9 1155.6,444.4 1152.7,447.6 1150.4,448.1Z" fill="#b0e35b"/>
<path d="M1115.1,385.0 1113.9,386.8 1111.0,389.9 1112.2,388.0Z" fill="#98c44e"/>
<path d="M1160.6,440.5 1162.6,439.5 1159.8,442.7 1157.7,443.6Z" fill="#acde59"/>
<path d="M1167.2,435.1 1168.9,433.7 1166.1,436.9 1164.4,438.3Z" fill="#a4d454"/>
<path d="M1106.4,397.0 1105.9,399.3 1102.9,402.4 1103.4,400.1Z" fill="#7fa441"/>
<path d="M1111.0,389.9 1110.0,391.9 1107.1,394.9 1108.1,392.9Z" fill="#90bb4a"/>
<path d="M1155.6,444.4 1157.7,443.6 1154.9,446.8 1152.7,447.6Z" fill="#aee15a"/>
<path d="M1116.5,383.3 1115.1,385.0 1112.2,388.0 1113.6,386.4Z" fill="#9ecd52"/>
<path d="M1162.6,439.5 1164.4,438.3 1161.6,441.5 1159.8,442.7Z" fill="#a8da57"/>
<path d="M1107.1,394.9 1106.4,397.0 1103.4,400.1 1104.1,398.0Z" fill="#88b046"/>
<path d="M1168.9,433.7 1170.4,432.1 1167.6,435.3 1166.1,436.9Z" fill="#9ecd52"/>
<path d="M1112.2,388.0 1111.0,389.9 1108.1,392.9 1109.2,391.1Z" fill="#98c44e"/>
<path d="M1157.7,443.6 1159.8,442.7 1156.9,445.8 1154.9,446.8Z" fill="#acde59"/>
<path d="M1164.4,438.3 1166.1,436.9 1163.3,440.1 1161.6,441.5Z" fill="#a4d454"/>
<path d="M1108.1,392.9 1107.1,394.9 1104.1,398.0 1105.1,396.0Z" fill="#90bb4a"/>
<path d="M1113.6,386.4 1112.2,388.0 1109.2,391.1 1110.6,389.4Z" fill="#9ecd52"/>
<path d="M1159.8,442.7 1161.6,441.5 1158.8,444.6 1156.9,445.8Z" fill="#a8da57"/>
<path d="M1166.1,436.9 1167.6,435.3 1164.7,438.5 1163.3,440.1Z" fill="#9ecd52"/>
<path d="M1109.2,391.1 1108.1,392.9 1105.1,396.0 1106.3,394.1Z" fill="#98c44e"/>
<path d="M1161.6,441.5 1163.3,440.1 1160.4,443.2 1158.8,444.6Z" fill="#a4d454"/>
<path d="M1110.6,389.4 1109.2,391.1 1106.3,394.1 1107.7,392.5Z" fill="#9ecd52"/>
<path d="M1163.3,440.1 1164.7,438.5 1161.9,441.7 1160.4,443.2Z" fill="#9ecd52"/>
<g shape-rendering="auto"><path d="M1186.50,361.50 L1134.06,417.86 M1169.59,379.68 L1146.69,372.27 M1152.12,398.45 L1128.96,390.80 M1134.06,417.86 L1110.63,409.95" stroke="#000" stroke-width="1" fill="none" stroke-dasharray="3 3"/></g>
</g>
<g clip-path="url(#hx)" shape-rendering="crispEdges">
<path d="M1296.20,372.86 L1296.27,370.16 L1296.19,367.65 L1295.97,365.35 L1295.60,363.30 L1295.10,361.51 L1294.45,360.00 L1293.67,358.78 L1292.77,357.87 L1291.75,357.28 L1290.62,357.02 L1289.39,357.09 L1288.07,357.49 L1286.68,358.23 L1285.23,359.29 L1283.73,360.66 L1282.20,362.34 L1280.65,364.31 L1279.09,366.56 L1277.56,369.05 L1276.05,371.77 L1274.58,374.68 L1273.18,377.77 L1271.85,380.99 L1270.60,384.32 L1269.46,387.72 L1268.43,391.15 L1267.53,394.59 L1266.76,397.99 L1266.12,401.33 L1265.63,404.56 L1265.30,407.65 L1265.12,410.58 L1265.09,413.32 L1265.21,415.83 L1265.49,418.10 L1265.92,420.10 L1266.49,421.81 L1267.20,423.22 L1268.04,424.32 L1269.00,425.10 L1270.07,425.55 L1271.25,425.66 L1272.50,425.45 L1273.84,424.92 L1275.23,424.07 L1276.68,422.91 L1278.16,421.45 L1279.66,419.71 L1281.17,417.71 L1282.67,415.47 L1284.15,413.00 L1285.60,410.34 L1287.00,407.50 L1288.34,404.52 L1289.61,401.41 L1290.79,398.22 L1291.88,394.96 L1292.87,391.66 L1293.75,388.37 L1294.50,385.10 L1295.13,381.88 L1295.63,378.75 L1295.98,375.74Z" fill="#9ecc51"/>
<path d="M1258.6,378.5 1259.3,375.6 1264.2,377.1 1263.5,380.0Z" fill="#90bb4a"/>
<path d="M1259.3,375.6 1259.9,372.7 1264.8,374.3 1264.2,377.1Z" fill="#89b146"/>
<path d="M1261.8,385.8 1262.7,382.9 1267.7,384.5 1266.8,387.4Z" fill="#9dcb51"/>
<path d="M1260.9,388.7 1261.8,385.8 1266.8,387.4 1265.8,390.3Z" fill="#a2d254"/>
<path d="M1262.7,382.9 1263.5,380.0 1268.5,381.6 1267.7,384.5Z" fill="#97c44e"/>
<path d="M1259.8,391.5 1260.9,388.7 1265.8,390.3 1264.8,393.1Z" fill="#a6d756"/>
<path d="M1259.9,372.7 1260.3,369.9 1265.3,371.4 1264.8,374.3Z" fill="#80a642"/>
<path d="M1263.5,380.0 1264.2,377.1 1269.2,378.7 1268.5,381.6Z" fill="#90bb4a"/>
<path d="M1258.7,394.3 1259.8,391.5 1264.8,393.1 1263.7,395.9Z" fill="#a9db57"/>
<path d="M1264.2,377.1 1264.8,374.3 1269.8,375.8 1269.2,378.7Z" fill="#89b146"/>
<path d="M1260.3,369.9 1260.7,367.2 1265.7,368.7 1265.3,371.4Z" fill="#779a3d"/>
<path d="M1266.8,387.4 1267.7,384.5 1272.6,386.1 1271.8,389.0Z" fill="#9dcb51"/>
<path d="M1265.8,390.3 1266.8,387.4 1271.8,389.0 1270.8,391.9Z" fill="#a2d254"/>
<path d="M1267.7,384.5 1268.5,381.6 1273.4,383.2 1272.6,386.1Z" fill="#97c44e"/>
<path d="M1264.8,393.1 1265.8,390.3 1270.8,391.9 1269.7,394.7Z" fill="#a6d756"/>
<path d="M1264.8,374.3 1265.3,371.4 1270.3,373.0 1269.8,375.8Z" fill="#80a642"/>
<path d="M1268.5,381.6 1269.2,378.7 1274.1,380.2 1273.4,383.2Z" fill="#90bb4a"/>
<path d="M1263.7,395.9 1264.8,393.1 1269.7,394.7 1268.6,397.4Z" fill="#a9db57"/>
<path d="M1260.7,367.2 1261.0,364.5 1265.9,366.1 1265.7,368.7Z" fill="#6d8d38"/>
<path d="M1269.2,378.7 1269.8,375.8 1274.7,377.4 1274.1,380.2Z" fill="#89b146"/>
<path d="M1265.3,371.4 1265.7,368.7 1270.6,370.3 1270.3,373.0Z" fill="#779a3d"/>
<path d="M1262.5,398.5 1263.7,395.9 1268.6,397.4 1267.4,400.1Z" fill="#abdd58"/>
<path d="M1271.8,389.0 1272.6,386.1 1277.6,387.6 1276.7,390.6Z" fill="#9dcb51"/>
<path d="M1270.8,391.9 1271.8,389.0 1276.7,390.6 1275.8,393.4Z" fill="#a2d254"/>
<path d="M1272.6,386.1 1273.4,383.2 1278.4,384.7 1277.6,387.6Z" fill="#97c44e"/>
<path d="M1269.7,394.7 1270.8,391.9 1275.8,393.4 1274.7,396.3Z" fill="#a6d756"/>
<path d="M1269.8,375.8 1270.3,373.0 1275.2,374.6 1274.7,377.4Z" fill="#80a642"/>
<path d="M1273.4,383.2 1274.1,380.2 1279.1,381.8 1278.4,384.7Z" fill="#90bb4a"/>
<path d="M1261.2,401.1 1262.5,398.5 1267.4,400.1 1266.2,402.7Z" fill="#acde59"/>
<path d="M1261.0,364.5 1261.1,362.0 1266.1,363.5 1265.9,366.1Z" fill="#627f33"/>
<path d="M1268.6,397.4 1269.7,394.7 1274.7,396.3 1273.6,399.0Z" fill="#a9db57"/>
<path d="M1265.7,368.7 1265.9,366.1 1270.9,367.6 1270.6,370.3Z" fill="#6d8d38"/>
<path d="M1274.1,380.2 1274.7,377.4 1279.7,378.9 1279.1,381.8Z" fill="#89b146"/>
<path d="M1270.3,373.0 1270.6,370.3 1275.6,371.8 1275.2,374.6Z" fill="#779a3d"/>
<path d="M1267.4,400.1 1268.6,397.4 1273.6,399.0 1272.4,401.7Z" fill="#abdd58"/>
<path d="M1276.7,390.6 1277.6,387.6 1282.6,389.2 1281.7,392.1Z" fill="#9dcb51"/>
<path d="M1275.8,393.4 1276.7,390.6 1281.7,392.1 1280.8,395.0Z" fill="#a2d254"/>
<path d="M1260.0,403.5 1261.2,401.1 1266.2,402.7 1264.9,405.1Z" fill="#acde59"/>
<path d="M1277.6,387.6 1278.4,384.7 1283.4,386.3 1282.6,389.2Z" fill="#97c44e"/>
<path d="M1274.7,396.3 1275.8,393.4 1280.8,395.0 1279.7,397.9Z" fill="#a6d756"/>
<path d="M1274.7,377.4 1275.2,374.6 1280.2,376.1 1279.7,378.9Z" fill="#80a642"/>
<path d="M1278.4,384.7 1279.1,381.8 1284.1,383.4 1283.4,386.3Z" fill="#90bb4a"/>
<path d="M1261.1,362.0 1261.1,359.6 1266.1,361.1 1266.1,363.5Z" fill="#57712d"/>
<path d="M1266.2,402.7 1267.4,400.1 1272.4,401.7 1271.2,404.3Z" fill="#acde59"/>
<path d="M1265.9,366.1 1266.1,363.5 1271.1,365.1 1270.9,367.6Z" fill="#627f33"/>
<path d="M1273.6,399.0 1274.7,396.3 1279.7,397.9 1278.6,400.6Z" fill="#a9db57"/>
<path d="M1270.6,370.3 1270.9,367.6 1275.9,369.2 1275.6,371.8Z" fill="#6d8d38"/>
<path d="M1279.1,381.8 1279.7,378.9 1284.7,380.5 1284.1,383.4Z" fill="#89b146"/>
<path d="M1258.6,405.8 1260.0,403.5 1264.9,405.1 1263.6,407.4Z" fill="#abdc58"/>
<path d="M1272.4,401.7 1273.6,399.0 1278.6,400.6 1277.4,403.3Z" fill="#abdd58"/>
<path d="M1275.2,374.6 1275.6,371.8 1280.6,373.4 1280.2,376.1Z" fill="#779a3d"/>
<path d="M1281.7,392.1 1282.6,389.2 1287.6,390.8 1286.7,393.7Z" fill="#9dcb51"/>
<path d="M1280.8,395.0 1281.7,392.1 1286.7,393.7 1285.8,396.6Z" fill="#a2d254"/>
<path d="M1264.9,405.1 1266.2,402.7 1271.2,404.3 1269.9,406.7Z" fill="#acde59"/>
<path d="M1282.6,389.2 1283.4,386.3 1288.4,387.9 1287.6,390.8Z" fill="#97c44e"/>
<path d="M1279.7,397.9 1280.8,395.0 1285.8,396.6 1284.7,399.5Z" fill="#a6d756"/>
<path d="M1279.7,378.9 1280.2,376.1 1285.3,377.7 1284.7,380.5Z" fill="#80a642"/>
<path d="M1283.4,386.3 1284.1,383.4 1289.2,385.0 1288.4,387.9Z" fill="#90bb4a"/>
<path d="M1271.2,404.3 1272.4,401.7 1277.4,403.3 1276.2,405.9Z" fill="#acde59"/>
<path d="M1266.1,363.5 1266.1,361.1 1271.1,362.7 1271.1,365.1Z" fill="#57712d"/>
<path d="M1278.6,400.6 1279.7,397.9 1284.7,399.5 1283.6,402.2Z" fill="#a9db57"/>
<path d="M1261.1,359.6 1261.1,357.3 1266.0,358.9 1266.1,361.1Z" fill="#4c6227"/>
<path d="M1270.9,367.6 1271.1,365.1 1276.1,366.6 1275.9,369.2Z" fill="#627f33"/>
<path d="M1275.6,371.8 1275.9,369.2 1280.9,370.7 1280.6,373.4Z" fill="#6d8d38"/>
<path d="M1284.1,383.4 1284.7,380.5 1289.8,382.1 1289.2,385.0Z" fill="#89b146"/>
<path d="M1277.4,403.3 1278.6,400.6 1283.6,402.2 1282.4,404.9Z" fill="#abdd58"/>
<path d="M1263.6,407.4 1264.9,405.1 1269.9,406.7 1268.6,409.0Z" fill="#abdc58"/>
<path d="M1280.2,376.1 1280.6,373.4 1285.6,374.9 1285.3,377.7Z" fill="#779a3d"/>
<path d="M1286.7,393.7 1287.6,390.8 1292.7,392.4 1291.8,395.3Z" fill="#9dcb51"/>
<path d="M1285.8,396.6 1286.7,393.7 1291.8,395.3 1290.8,398.2Z" fill="#a2d254"/>
<path d="M1287.6,390.8 1288.4,387.9 1293.5,389.5 1292.7,392.4Z" fill="#97c44e"/>
<path d="M1269.9,406.7 1271.2,404.3 1276.2,405.9 1274.9,408.3Z" fill="#acde59"/>
<path d="M1284.7,399.5 1285.8,396.6 1290.8,398.2 1289.7,401.1Z" fill="#a6d756"/>
<path d="M1284.7,380.5 1285.3,377.7 1290.3,379.3 1289.8,382.1Z" fill="#80a642"/>
<path d="M1288.4,387.9 1289.2,385.0 1294.2,386.5 1293.5,389.5Z" fill="#90bb4a"/>
<path d="M1276.2,405.9 1277.4,403.3 1282.4,404.9 1281.2,407.5Z" fill="#acde59"/>
<path d="M1283.6,402.2 1284.7,399.5 1289.7,401.1 1288.6,403.8Z" fill="#a9db57"/>
<path d="M1271.1,365.1 1271.1,362.7 1276.1,364.2 1276.1,366.6Z" fill="#57712d"/>
<path d="M1275.9,369.2 1276.1,366.6 1281.1,368.2 1280.9,370.7Z" fill="#627f33"/>
<path d="M1266.1,361.1 1266.0,358.9 1271.0,360.4 1271.1,362.7Z" fill="#4c6227"/>
<path d="M1280.6,373.4 1280.9,370.7 1285.9,372.3 1285.6,374.9Z" fill="#6d8d38"/>
<path d="M1261.1,357.3 1260.8,355.2 1265.8,356.8 1266.0,358.9Z" fill="#405321"/>
<path d="M1289.2,385.0 1289.8,382.1 1294.8,383.7 1294.2,386.5Z" fill="#89b146"/>
<path d="M1262.3,409.5 1263.6,407.4 1268.6,409.0 1267.3,411.1Z" fill="#a8d957"/>
<path d="M1282.4,404.9 1283.6,402.2 1288.6,403.8 1287.5,406.5Z" fill="#abdd58"/>
<path d="M1285.3,377.7 1285.6,374.9 1290.7,376.5 1290.3,379.3Z" fill="#779a3d"/>
<path d="M1268.6,409.0 1269.9,406.7 1274.9,408.3 1273.6,410.6Z" fill="#abdc58"/>
<path d="M1274.9,408.3 1276.2,405.9 1281.2,407.5 1279.9,409.9Z" fill="#acde59"/>
<path d="M1289.8,382.1 1290.3,379.3 1295.3,380.8 1294.8,383.7Z" fill="#80a642"/>
<path d="M1281.2,407.5 1282.4,404.9 1287.5,406.5 1286.2,409.1Z" fill="#acde59"/>
<path d="M1276.1,366.6 1276.1,364.2 1281.1,365.8 1281.1,368.2Z" fill="#57712d"/>
<path d="M1280.9,370.7 1281.1,368.2 1286.1,369.7 1285.9,372.3Z" fill="#627f33"/>
<path d="M1271.1,362.7 1271.0,360.4 1276.0,361.9 1276.1,364.2Z" fill="#4c6227"/>
<path d="M1285.6,374.9 1285.9,372.3 1291.0,373.8 1290.7,376.5Z" fill="#6d8d38"/>
<path d="M1266.0,358.9 1265.8,356.8 1270.8,358.3 1271.0,360.4Z" fill="#405321"/>
<path d="M1267.3,411.1 1268.6,409.0 1273.6,410.6 1272.3,412.7Z" fill="#a8d957"/>
<path d="M1260.9,411.4 1262.3,409.5 1267.3,411.1 1265.9,413.1Z" fill="#a5d555"/>
<path d="M1290.3,379.3 1290.7,376.5 1295.7,378.1 1295.3,380.8Z" fill="#779a3d"/>
<path d="M1273.6,410.6 1274.9,408.3 1279.9,409.9 1278.6,412.2Z" fill="#abdc58"/>
<path d="M1260.8,355.2 1260.5,353.3 1265.5,354.9 1265.8,356.8Z" fill="#34431b"/>
<path d="M1279.9,409.9 1281.2,407.5 1286.2,409.1 1285.0,411.5Z" fill="#acde59"/>
<path d="M1281.1,368.2 1281.1,365.8 1286.2,367.3 1286.1,369.7Z" fill="#57712d"/>
<path d="M1285.9,372.3 1286.1,369.7 1291.1,371.3 1291.0,373.8Z" fill="#627f33"/>
<path d="M1276.1,364.2 1276.0,361.9 1281.1,363.5 1281.1,365.8Z" fill="#4c6227"/>
<path d="M1290.7,376.5 1291.0,373.8 1296.0,375.4 1295.7,378.1Z" fill="#6d8d38"/>
<path d="M1271.0,360.4 1270.8,358.3 1275.9,359.9 1276.0,361.9Z" fill="#405321"/>
<path d="M1272.3,412.7 1273.6,410.6 1278.6,412.2 1277.3,414.4Z" fill="#a8d957"/>
<path d="M1265.9,413.1 1267.3,411.1 1272.3,412.7 1270.9,414.7Z" fill="#a5d555"/>
<path d="M1278.6,412.2 1279.9,409.9 1285.0,411.5 1283.7,413.8Z" fill="#abdc58"/>
<path d="M1259.6,413.2 1260.9,411.4 1265.9,413.1 1264.6,414.8Z" fill="#a0cf53"/>
<path d="M1265.8,356.8 1265.5,354.9 1270.5,356.4 1270.8,358.3Z" fill="#34431b"/>
<path d="M1286.1,369.7 1286.2,367.3 1291.2,368.9 1291.1,371.3Z" fill="#57712d"/>
<path d="M1291.0,373.8 1291.1,371.3 1296.2,372.9 1296.0,375.4Z" fill="#627f33"/>
<path d="M1281.1,365.8 1281.1,363.5 1286.1,365.1 1286.2,367.3Z" fill="#4c6227"/>
<path d="M1276.0,361.9 1275.9,359.9 1280.9,361.4 1281.1,363.5Z" fill="#405321"/>
<path d="M1277.3,414.4 1278.6,412.2 1283.7,413.8 1282.3,416.0Z" fill="#a8d957"/>
<path d="M1270.9,414.7 1272.3,412.7 1277.3,414.4 1276.0,416.3Z" fill="#a5d555"/>
<path d="M1264.6,414.8 1265.9,413.1 1270.9,414.7 1269.6,416.4Z" fill="#a0cf53"/>
<path d="M1270.8,358.3 1270.5,356.4 1275.5,357.9 1275.9,359.9Z" fill="#34431b"/>
<path d="M1258.2,414.7 1259.6,413.2 1264.6,414.8 1263.2,416.4Z" fill="#9bc950"/>
<path d="M1265.5,354.9 1265.1,353.1 1270.1,354.7 1270.5,356.4Z" fill="#283315"/>
<path d="M1291.1,371.3 1291.2,368.9 1296.3,370.4 1296.2,372.9Z" fill="#57712d"/>
<path d="M1286.2,367.3 1286.1,365.1 1291.2,366.6 1291.2,368.9Z" fill="#4c6227"/>
<path d="M1281.1,363.5 1280.9,361.4 1285.9,363.0 1286.1,365.1Z" fill="#405321"/>
<path d="M1276.0,416.3 1277.3,414.4 1282.3,416.0 1281.0,417.9Z" fill="#a5d555"/>
<path d="M1269.6,416.4 1270.9,414.7 1276.0,416.3 1274.6,418.1Z" fill="#a0cf53"/>
<path d="M1275.9,359.9 1275.5,357.9 1280.6,359.5 1280.9,361.4Z" fill="#34431b"/>
<path d="M1263.2,416.4 1264.6,414.8 1269.6,416.4 1268.2,418.0Z" fill="#9bc950"/>
<path d="M1270.5,356.4 1270.1,354.7 1275.1,356.2 1275.5,357.9Z" fill="#283315"/>
<path d="M1291.2,368.9 1291.2,366.6 1296.2,368.2 1296.3,370.4Z" fill="#4c6227"/>
<path d="M1286.1,365.1 1285.9,363.0 1291.0,364.5 1291.2,366.6Z" fill="#405321"/>
<path d="M1274.6,418.1 1276.0,416.3 1281.0,417.9 1279.7,419.7Z" fill="#a0cf53"/>
<path d="M1280.9,361.4 1280.6,359.5 1285.6,361.1 1285.9,363.0Z" fill="#34431b"/>
<path d="M1268.2,418.0 1269.6,416.4 1274.6,418.1 1273.3,419.6Z" fill="#9bc950"/>
<path d="M1275.5,357.9 1275.1,356.2 1280.2,357.8 1280.6,359.5Z" fill="#283315"/>
<path d="M1261.9,417.7 1263.2,416.4 1268.2,418.0 1266.9,419.3Z" fill="#95c04d"/>
<path d="M1270.1,354.7 1269.6,353.2 1274.6,354.7 1275.1,356.2Z" fill="#232e12"/>
<path d="M1291.2,366.6 1291.0,364.5 1296.1,366.1 1296.2,368.2Z" fill="#405321"/>
<path d="M1285.9,363.0 1285.6,361.1 1290.7,362.6 1291.0,364.5Z" fill="#34431b"/>
<path d="M1273.3,419.6 1274.6,418.1 1279.7,419.7 1278.3,421.3Z" fill="#9bc950"/>
<path d="M1280.6,359.5 1280.2,357.8 1285.2,359.3 1285.6,361.1Z" fill="#283315"/>
<path d="M1266.9,419.3 1268.2,418.0 1273.3,419.6 1271.9,421.0Z" fill="#95c04d"/>
<path d="M1275.1,356.2 1274.6,354.7 1279.7,356.3 1280.2,357.8Z" fill="#232e12"/>
<path d="M1260.6,418.8 1261.9,417.7 1266.9,419.3 1265.6,420.4Z" fill="#8eb749"/>
<path d="M1291.0,364.5 1290.7,362.6 1295.8,364.2 1296.1,366.1Z" fill="#34431b"/>
<path d="M1285.6,361.1 1285.2,359.3 1290.3,360.9 1290.7,362.6Z" fill="#283315"/>
<path d="M1271.9,421.0 1273.3,419.6 1278.3,421.3 1277.0,422.6Z" fill="#95c04d"/>
<path d="M1280.2,357.8 1279.7,356.3 1284.7,357.8 1285.2,359.3Z" fill="#232e12"/>
<path d="M1265.6,420.4 1266.9,419.3 1271.9,421.0 1270.6,422.1Z" fill="#8eb749"/>
<path d="M1259.3,419.6 1260.6,418.8 1265.6,420.4 1264.3,421.3Z" fill="#86ad45"/>
<path d="M1274.6,354.7 1274.0,353.5 1279.0,355.0 1279.7,356.3Z" fill="#303d19"/>
<path d="M1290.7,362.6 1290.3,360.9 1295.4,362.5 1295.8,364.2Z" fill="#283315"/>
<path d="M1270.6,422.1 1271.9,421.0 1277.0,422.6 1275.7,423.7Z" fill="#8eb749"/>
<path d="M1285.2,359.3 1284.7,357.8 1289.8,359.4 1290.3,360.9Z" fill="#232e12"/>
<path d="M1264.3,421.3 1265.6,420.4 1270.6,422.1 1269.4,422.9Z" fill="#86ad45"/>
<path d="M1279.7,356.3 1279.0,355.0 1284.1,356.6 1284.7,357.8Z" fill="#303d19"/>
<path d="M1258.0,420.2 1259.3,419.6 1264.3,421.3 1263.1,421.9Z" fill="#7da140"/>
<path d="M1290.3,360.9 1289.8,359.4 1294.9,361.0 1295.4,362.5Z" fill="#232e12"/>
<path d="M1269.4,422.9 1270.6,422.1 1275.7,423.7 1274.5,424.6Z" fill="#86ad45"/>
<path d="M1284.7,357.8 1284.1,356.6 1289.2,358.1 1289.8,359.4Z" fill="#303d19"/>
<path d="M1263.1,421.9 1264.3,421.3 1269.4,422.9 1268.2,423.5Z" fill="#7da140"/>
<path d="M1279.0,355.0 1278.3,354.0 1283.4,355.5 1284.1,356.6Z" fill="#3c4d1f"/>
<path d="M1289.8,359.4 1289.2,358.1 1294.3,359.7 1294.9,361.0Z" fill="#303d19"/>
<path d="M1268.2,423.5 1269.4,422.9 1274.5,424.6 1273.2,425.2Z" fill="#7da140"/>
<path d="M1284.1,356.6 1283.4,355.5 1288.5,357.1 1289.2,358.1Z" fill="#3c4d1f"/>
<path d="M1261.9,422.2 1263.1,421.9 1268.2,423.5 1267.0,423.9Z" fill="#73953b"/>
<path d="M1289.2,358.1 1288.5,357.1 1293.6,358.7 1294.3,359.7Z" fill="#3c4d1f"/>
<path d="M1267.0,423.9 1268.2,423.5 1273.2,425.2 1272.1,425.6Z" fill="#73953b"/>
<path d="M1283.4,355.5 1282.5,354.7 1287.6,356.3 1288.5,357.1Z" fill="#485d25"/>
<path d="M1260.8,422.3 1261.9,422.2 1267.0,423.9 1265.9,424.0Z" fill="#698836"/>
<path d="M1288.5,357.1 1287.6,356.3 1292.8,357.9 1293.6,358.7Z" fill="#485d25"/>
<path d="M1265.9,424.0 1267.0,423.9 1272.1,425.6 1271.0,425.7Z" fill="#698836"/>
<path d="M1282.5,354.7 1281.6,354.2 1286.7,355.8 1287.6,356.3Z" fill="#536c2b"/>
<path d="M1259.8,422.2 1260.8,422.3 1265.9,424.0 1264.9,423.8Z" fill="#5e7a31"/>
<path d="M1287.6,356.3 1286.7,355.8 1291.9,357.3 1292.8,357.9Z" fill="#536c2b"/>
<path d="M1264.9,423.8 1265.9,424.0 1271.0,425.7 1270.0,425.5Z" fill="#5e7a31"/>
<g shape-rendering="auto"><path d="M1186.50,361.50 L1280.91,391.41 M1217.42,371.30 L1205.16,384.99 M1248.88,381.27 L1236.90,395.21 M1280.91,391.41 L1269.22,405.61" stroke="#000" stroke-width="1" fill="none"/></g>
</g>
<path d="M1280.91,391.41 L3418.97,1068.83 M1186.50,273.06 L1186.50,-2672.58 M1280.91,391.41 L1269.22,405.61 M1186.50,273.06 L1162.94,266.19 M1313.51,401.74 L1302.12,416.19 M1186.50,241.95 L1162.61,235.19 M1346.71,412.26 L1335.63,426.98 M1186.50,209.98 L1162.28,203.34 M1380.51,422.97 L1369.76,437.96 M1186.50,177.09 L1161.94,170.59 M1414.94,433.88 L1404.53,449.15 M1186.50,143.26 L1161.59,136.91 M1450.01,444.99 L1439.96,460.55 M1186.50,108.44 L1161.23,102.24 M1485.75,456.31 L1476.06,472.17 M1186.50,72.58 L1160.86,66.56 M1522.16,467.85 L1503.31,500.60 M1186.50,35.65 L1134.83,24.05 M1559.27,479.61 L1550.37,496.08 M1186.50,-2.41 L1160.08,-8.06 M1597.10,491.59 L1588.63,508.39 M1186.50,-41.65 L1159.67,-47.09 M1635.67,503.81 L1627.64,520.94 M1186.50,-82.13 L1159.25,-87.34 M1675.01,516.28 L1667.43,533.75 M1186.50,-123.91 L1158.82,-128.87 M1715.13,528.99 L1708.03,546.81 M1186.50,-167.05 L1158.37,-171.74 M1756.06,541.96 L1749.46,560.15 M1186.50,-211.61 L1157.91,-216.02 M1797.82,555.19 L1791.75,573.75 M1186.50,-257.67 L1157.43,-261.78 M1840.45,568.69 L1834.92,587.65 M1186.50,-305.31 L1156.94,-309.09 M1883.96,582.48 L1879.00,601.83 M1186.50,-354.60 L1156.43,-358.03 M1928.38,596.56 L1919.54,636.67 M1186.50,-405.64 L1125.83,-411.68 M1973.75,610.93 L1970.02,631.12 M1186.50,-458.53 L1155.36,-461.16 M2020.10,625.61 L2017.01,646.24 M1186.50,-513.35 L1154.79,-515.54 M2067.45,640.62 L2065.04,661.70 M1186.50,-570.23 L1154.20,-571.94 M2115.83,655.95 L2114.14,677.50 M1186.50,-629.28 L1153.59,-630.46 M2165.30,671.62 L2164.35,693.65 M1186.50,-690.62 L1152.96,-691.24 M2215.87,687.64 L2215.70,710.18 M1186.50,-754.39 L1152.30,-754.41 M2267.59,704.03 L2268.23,727.08 M1186.50,-820.74 L1151.62,-820.11 M2320.50,720.79 L2321.99,744.38 M1186.50,-889.83 L1150.90,-888.49 M2374.63,737.94 L2377.02,762.09 M1186.50,-961.84 L1150.16,-959.72 M2430.04,755.50 L2436.80,805.76 M1186.50,-1036.94 L1113.04,-1031.10 M2486.76,773.47 L2491.07,798.79 M1186.50,-1115.35 L1148.58,-1111.49 M2544.85,791.88 L2550.18,817.81 M1186.50,-1197.28 L1147.73,-1192.44 M2604.36,810.73 L2610.76,837.31 M1186.50,-1282.99 L1146.85,-1277.07 M2665.33,830.05 L2672.86,857.29 M1186.50,-1372.73 L1145.93,-1365.65 M2727.82,849.85 L2736.53,877.78 M1186.50,-1466.81 L1144.96,-1458.44 M2791.89,870.15 L2801.85,898.80 M1186.50,-1565.53 L1143.95,-1555.78 M2857.61,890.97 L2868.86,920.36 M1186.50,-1669.26 L1142.88,-1657.98 M2925.02,912.33 L2937.64,942.49 M1186.50,-1778.39 L1141.76,-1765.43 M2994.21,934.25 L3008.27,965.22 M1186.50,-1893.34 L1140.58,-1878.55 M3065.24,956.75 L3096.96,1021.57 M1186.50,-2014.60 L1093.42,-1981.42 M3138.18,979.87 L3155.34,1012.55 M1186.50,-2142.70 L1138.03,-2123.66 M3213.12,1003.61 L3231.94,1037.20 M1186.50,-2278.24 L1136.64,-2256.74 M3290.14,1028.01 L3310.72,1062.55 M1186.50,-2421.88 L1135.17,-2397.65 M3369.32,1053.10 L3391.75,1088.62 M1186.50,-2574.37 L1133.61,-2547.13 M1526.72,446.14 L1517.64,461.73 M1546.98,452.44 L1560.61,456.67 L1551.90,472.54 L1538.12,468.19 L1546.98,452.44 M1567.46,458.80 L1581.23,463.09 L1572.74,479.12 L1558.82,474.72 L1567.46,458.80 M1219.49,50.07 L1219.68,36.04 L1193.09,30.13 L1193.05,44.08 L1219.49,50.07 M1219.77,28.97 L1219.96,14.70 L1193.14,8.90 L1193.10,23.09 L1219.77,28.97 M1220.06,7.51 L1193.16,1.74 M1015.27,578.67 L1006.60,588.23 M1012.03,597.01 L986.00,586.51 M998.76,611.79 L989.76,621.82 L963.44,610.93 L972.56,601.06 L998.76,611.79 M985.21,626.89 L976.00,637.15 L949.50,626.02 L958.83,615.92 L985.21,626.89 M1925.47,570.09 L1941.88,575.19 L1940.36,582.31 L1923.86,577.15 L1921.15,589.08 L1937.79,594.33 M1950.14,577.76 L1966.74,582.92 L1962.98,602.29 L1946.15,596.97 L1950.14,577.76 M1975.09,585.52 L1991.89,590.74 L1988.48,610.33 L1971.45,604.96 L1975.09,585.52 M1225.38,-392.05 L1225.64,-411.55 L1194.26,-414.58 L1194.21,-395.23 L1225.38,-392.05 M1225.77,-421.40 L1226.03,-441.29 L1194.34,-444.09 L1194.28,-424.35 L1225.77,-421.40 M1226.44,-471.64 L1226.17,-451.34 L1214.17,-452.37 L1214.36,-472.61 L1194.42,-474.20 L1194.36,-454.06 M729.15,894.00 L715.88,908.62 M720.26,922.11 L706.69,937.24 L695.54,931.05 L709.16,916.03 L690.85,905.99 L677.14,920.83 M699.81,944.90 L685.86,960.44 L656.12,943.58 L670.20,928.34 L699.81,944.90 M678.79,968.32 L664.46,984.29 L634.52,966.96 L648.99,951.30 L678.79,968.32 M2415.85,722.53 L2436.26,728.87 L2437.51,737.73 L2416.97,731.31 L2437.51,737.73 L2439.63,752.73 L2418.87,746.17 M2446.54,732.07 L2467.21,738.50 L2471.10,762.66 L2450.07,756.02 L2446.54,732.07 M2477.62,741.73 L2498.57,748.24 L2502.99,772.72 L2481.68,766.00 L2477.62,741.73 M1233.83,-1026.30 L1234.21,-1055.24 L1195.94,-1052.04 L1195.86,-1023.44 L1233.83,-1026.30 M1234.41,-1069.89 L1234.80,-1099.54 L1196.06,-1095.83 L1195.98,-1066.52 L1234.41,-1069.89 M1235.41,-1144.95 L1235.00,-1114.55 L1220.31,-1113.08 L1220.59,-1143.34 L1220.31,-1113.08 L1196.09,-1110.66 L1196.17,-1140.69 M266.12,1404.31 L243.32,1429.44 M244.04,1452.75 L220.46,1479.02 L208.11,1468.25 L231.72,1442.22 L208.11,1468.25 L187.79,1450.52 L211.45,1424.91 M208.46,1492.39 L184.02,1519.62 L151.23,1490.08 L175.75,1463.55 L208.46,1492.39 M171.58,1533.48 L146.23,1561.72 L113.35,1531.09 L138.76,1503.59 L171.58,1533.48 M3033.56,914.54 L3038.97,925.76 L3065.24,933.97 L3059.63,922.65 L3074.78,953.19 M3072.76,926.73 L3099.21,934.95 L3115.20,965.95 L3088.18,957.42 L3072.76,926.73 M3112.54,939.10 L3139.38,947.44 L3156.23,978.90 L3128.81,970.25 L3112.54,939.10 M1246.96,-2012.72 L1247.59,-2060.06 L1198.55,-2042.25 L1198.43,-1995.73 L1246.96,-2012.72 M1247.91,-2084.10 L1248.56,-2132.95 L1198.74,-2113.86 L1198.61,-2065.87 L1247.91,-2084.10 M1249.57,-2208.20 L1230.41,-2200.46 L1229.95,-2150.38 L1248.90,-2157.77 L1198.80,-2138.22 M-611.37,2371.39 L-659.39,2424.32 M-672.41,2473.91 L-684.02,2451.46 L-734.55,2507.15 L-723.10,2530.39 L-753.27,2469.14 M-749.12,2559.38 L-802.55,2618.91 L-832.00,2554.36 L-779.06,2497.06 L-749.12,2559.38 M-829.99,2649.49 L-886.40,2712.34 L-915.00,2644.20 L-859.17,2583.77 L-829.99,2649.49" stroke="#000" stroke-width="1" fill="none"/>
<path d="M1134.06,417.86 L-1406.48,3148.30 M1134.06,417.86 L1110.63,409.95 M1115.38,437.93 L1091.69,429.75 M1096.06,458.70 L1072.09,450.23 M1076.05,480.21 L1051.80,471.44 M1055.32,502.49 L1030.79,493.40 M1033.83,525.59 L1009.01,516.16 M1011.53,549.55 L986.42,539.77 M988.39,574.42 L937.95,554.26 M964.35,600.26 L938.63,589.71 M939.36,627.12 L913.33,616.15 M913.35,655.06 L887.02,643.65 M886.28,684.16 L859.63,672.27 M858.06,714.49 L831.10,702.09 M828.64,746.12 L801.35,733.18 M797.91,779.13 L770.30,765.63 M765.81,813.63 L737.88,799.52 M732.24,849.72 L703.97,834.95 M697.08,887.51 L640.43,856.86 M660.23,927.11 L631.31,910.89 M621.56,968.67 L592.31,951.65 M580.93,1012.33 L551.36,994.44 M538.19,1058.27 L508.31,1039.44 M493.18,1106.65 L462.99,1086.81 M445.70,1157.68 L415.21,1136.74 M395.54,1211.58 L364.77,1189.46 M342.48,1268.61 L311.44,1245.19 M286.25,1329.04 L254.96,1304.22 M226.56,1393.19 L164.31,1341.10 M163.09,1461.41 L131.40,1433.36 M95.45,1534.10 L63.62,1504.19 M23.23,1611.72 L-8.69,1579.76 M-54.06,1694.79 L-86.00,1660.56 M-136.96,1783.89 L-168.86,1747.15 M-226.12,1879.71 L-257.86,1840.17 M-322.27,1983.05 L-353.74,1940.37 M-426.26,2094.82 L-457.31,2048.61 M-539.10,2216.09 L-569.54,2165.91 M-661.97,2348.14 L-720.15,2240.64 M-796.25,2492.46 L-824.74,2432.61 M-943.64,2650.86 L-970.63,2585.09 M-1106.12,2825.50 L-1131.18,2752.88 M-1286.17,3019.00 L-1308.71,2938.42" stroke="#000" stroke-width="1" fill="none" stroke-dasharray="3 3"/>
<line x1="855.7" y1="608.8" x2="885.7" y2="618.6" stroke="#a02020" stroke-width="1"/>
<line x1="855.7" y1="608.8" x2="871.8" y2="592.3" stroke="#40c040" stroke-width="1"/>
<line x1="855.7" y1="608.8" x2="855.7" y2="581.1" stroke="#202090" stroke-width="1"/>
<path d="M853.3,572.5 L859,572.5 L853.3,578.6 L859.2,578.6 M872,585 L875,588 L878,585 M875,588 L875,591 M889,618 L895,624 M895,618 L889,624" stroke="#000" stroke-width="1" fill="none"/>
</g>
<rect x="772" y="671" width="828" height="39" fill="#f0f0f0"/>
<path d="M787.10,678.90 Q789.60,677.70 792.10,678.90 L796.40,681.90 Q798.20,682.50 798.20,684.50 L798.20,690.10 Q798.20,692.10 796.40,692.70 L792.10,695.70 Q789.60,696.90 787.10,695.70 L782.80,692.70 Q781.00,692.10 781.00,690.10 L781.00,684.50 Q781.00,682.50 782.80,681.90 Z" fill="none" stroke="#222" stroke-width="1.3" stroke-dasharray="1.3 1.1"/>
<path d="M782.50,682.80 L789.60,687.30 L796.70,682.80 M789.60,687.30 L789.60,690.80" fill="none" stroke="#222" stroke-width="1.2" stroke-dasharray="1.3 1.1"/>
<path d="M784.20,690.80 L786.40,690.80 L790.40,695.00 L786.40,699.30 L784.20,699.30 L788.20,695.00 Z" fill="#222"/>
<path d="M789.00,690.80 L791.20,690.80 L795.20,695.00 L791.20,699.30 L789.00,699.30 L793.00,695.00 Z" fill="#222"/>
<path d="M820.60,677.80 L829.20,682.80 L829.20,692.80 L820.60,697.80 L812.00,692.80 L812.00,682.80 Z" fill="none" stroke="#222" stroke-width="1.1" stroke-linejoin="round"/>
<path d="M812,682.8 L820.6,687.6 L829.2,682.8 M820.6,687.6 L820.6,690.5" fill="none" stroke="#222" stroke-width="1.1"/>
<path d="M817.5,692 L823.7,692 L820.6,696 Z M817.3,698 L823.9,698 L823.9,700 L817.3,700 Z" fill="#222"/>
<path d="M849.5,683 L849.5,678.5 L853.5,678.5 M860,678.5 L864,678.5 L864,683 M849.5,688.5 L849.5,692.5 L853.5,692.5 M864,688.5 L864,690" fill="none" stroke="#222" stroke-width="1.6"/>
<circle cx="856.3" cy="685.3" r="4.2" fill="none" stroke="#222" stroke-width="2"/><path d="M859.5,688.8 L863.5,693.8" stroke="#222" stroke-width="2.6"/>
<circle cx="887.4" cy="685.5" r="4.6" fill="none" stroke="#222" stroke-width="2"/><path d="M890.6,689 L894.8,695" stroke="#222" stroke-width="2.6"/>
<path d="M885.1,685.5 L889.7,685.5 M887.4,683.2 L887.4,687.8" stroke="#222" stroke-width="1"/>
<circle cx="918.1" cy="685.5" r="4.6" fill="none" stroke="#222" stroke-width="2"/><path d="M921.3,689 L925.5,695" stroke="#222" stroke-width="2.6"/>
<path d="M915.8,685.5 L920.4,685.5" stroke="#222" stroke-width="1"/>
<path d="M944.8,683.5 A7.5,7.5 0 1 0 950.8,680.6" fill="none" stroke="#222" stroke-width="2"/>
<path d="M943,679 L950,685.3 L943.3,686.3 Z" fill="#222"/>
<rect x="970" y="676" width="1" height="24" fill="#c8c8c8"/>
<path d="M982.3,679.3 L990.5,679.3 L993,686.3 L990.3,693.3 L982.2,693 L979.3,686.3 Z M979.3,686.3 L987.7,686.3 L990.5,679.3 M987.7,686.3 L990.3,693.3" fill="none" stroke="#222" stroke-width="1.1" stroke-linejoin="round"/>
<path d="M992.5,684.5 L996.6,686.5 L992.5,688.5 Z" fill="#222"/>
<path d="M1018.90,680.70 L1025.70,684.50 L1025.70,692.10 L1018.90,695.90 L1012.10,692.10 L1012.10,684.50 Z" fill="none" stroke="#222" stroke-width="1.1" stroke-linejoin="round"/>
<path d="M1012.10,684.50 L1018.90,688.30 L1025.70,684.50 M1018.90,688.30 L1018.90,695.90" fill="none" stroke="#222" stroke-width="1.1"/>
<path d="M1016.8,682.3 L1018.9,677.6 L1021,682.3 Z" fill="#222"/>
<path d="M1048.4,678.5 L1055,681.6 L1055.3,689.8 L1048.4,693 L1041.5,689.8 L1041.2,681.6 Z M1048.4,678.5 L1048.4,686.5 L1041.5,689.8 M1048.4,686.5 L1055.3,689.8" fill="none" stroke="#222" stroke-width="1.1" stroke-linejoin="round"/>
<path d="M1046.4,692 L1048.4,696.3 L1050.4,692 Z" fill="#222"/>
<path d="M1077.6,679 L1085.8,679 L1088.6,686.3 L1086,693 L1078,693 L1075.3,686.3 Z M1088.6,686.3 L1080.3,686.3 L1077.6,679 M1080.3,686.3 L1078,693" fill="none" stroke="#222" stroke-width="1.1" stroke-linejoin="round"/>
<path d="M1075.8,684.3 L1071.8,686.3 L1075.8,688.3 Z" fill="#222"/>
<path d="M1104.90,683.70 L1111.70,687.50 L1111.70,695.10 L1104.90,691.30 Z" fill="#222"/>
<path d="M1111.70,679.90 L1118.50,683.70 L1118.50,691.30 L1111.70,695.10 L1104.90,691.30 L1104.90,683.70 Z" fill="none" stroke="#222" stroke-width="1.1" stroke-linejoin="round"/>
<path d="M1104.90,683.70 L1111.70,687.50 L1118.50,683.70 M1111.70,687.50 L1111.70,695.10" fill="none" stroke="#222" stroke-width="1.1"/>
<path d="M1143.00,679.90 L1149.80,683.70 L1149.80,691.30 L1143.00,695.10 L1136.20,691.30 L1136.20,683.70 Z" fill="none" stroke="#222" stroke-width="1.1" stroke-linejoin="round"/>
<path d="M1136.20,683.70 L1143.00,687.50 L1149.80,683.70 M1143.00,687.50 L1143.00,695.10" fill="none" stroke="#222" stroke-width="1.1"/>
<path d="M1143,680 L1149.8,683.7 L1149.8,691.3 L1143,687.5 Z" fill="#222"/>
<rect x="1161.5" y="676" width="1" height="24" fill="#c8c8c8"/>
<rect x="1165.5" y="673.5" width="30" height="29" fill="#b3d4f1" stroke="#7fb3e0" stroke-width="1"/>
<rect x="1233.5" y="673.5" width="30" height="29" fill="#b3d4f1" stroke="#7fb3e0" stroke-width="1"/>
<rect x="1263.5" y="673.5" width="31" height="29" fill="#b3d4f1" stroke="#7fb3e0" stroke-width="1"/>
<path d="M1173.2,688.2 L1178.5,685.8 L1190.5,680.5 L1182,693.5 L1175.5,696 L1173.2,696 Z M1173.2,688.2 L1180.5,688.2 L1180.5,696 L1173.2,696 M1180.5,688.2 L1190.5,680.5 M1180.5,696 L1190.5,680.5" fill="none" stroke="#222" stroke-width="1.1" stroke-linejoin="round"/>
<rect x="1202.5" y="681.8" width="19" height="16" fill="none" stroke="#222" stroke-width="1.8"/>
<rect x="1206.5" y="685.3" width="11" height="9" fill="none" stroke="#222" stroke-width="1.2"/>
<path d="M1202.5,681.8 L1206.5,685.3 M1221.5,681.8 L1217.5,685.3 M1202.5,697.8 L1206.5,694.3 M1221.5,697.8 L1217.5,694.3" stroke="#222" stroke-width="1"/>
<path d="M1248.5,680 L1248.5,688.5 L1259.5,688.5 M1248.5,688.5 L1241.5,695.5" fill="none" stroke="#222" stroke-width="1"/><circle cx="1248.5" cy="688.5" r="1.3" fill="#222"/>
<path d="M1279.5,679.5 L1279.5,688.3 L1290.5,688.3 M1279.5,681.5 L1281.5,681.5 M1279.5,683.5 L1281.5,683.5 M1279.5,685.5 L1281.5,685.5 M1282.5,688.3 L1282.5,686.5 M1284.5,688.3 L1284.5,686.5 M1286.5,688.3 L1286.5,686.5 M1288.5,688.3 L1288.5,686.5 M1279.5,688.3 L1272,695.5" fill="none" stroke="#222" stroke-width="0.9"/>
<text x="1280.5" y="697.3" font-family="Liberation Sans" font-size="8.5" fill="#222">10</text>
<rect x="1303" y="682.3" width="14" height="11" fill="none" stroke="#222" stroke-width="1" stroke-dasharray="2 1"/>
<circle cx="1303" cy="682.3" r="1.1" fill="#222"/>
<circle cx="1317" cy="682.3" r="1.1" fill="#222"/>
<circle cx="1303" cy="693.3" r="1.1" fill="#222"/>
<circle cx="1317" cy="693.3" r="1.1" fill="#222"/>
<rect x="773.5" y="710.5" width="825" height="18" fill="#dadada" stroke="#c2c2c2" stroke-width="1"/>
<text x="777" y="725" font-family="Liberation Sans" font-size="11" fill="#000" textLength="38" lengthAdjust="spacingAndGlyphs">Console</text>
<path d="M1587.6,716.4 L1594.6,723.4 M1594.6,716.4 L1587.6,723.4" stroke="#000" stroke-width="1.7"/>
<rect x="773.5" y="731.5" width="825" height="116" fill="#ffffff" stroke="#828790" stroke-width="1"/>
<rect x="1583" y="732" width="15" height="115" fill="#f0f0f0"/>
<rect x="1583" y="749" width="15" height="67" fill="#cdcdcd"/>
<path d="M1587.3,743.5 L1590.5,740.3 L1593.7,743.5" stroke="#505050" stroke-width="1.7" fill="none"/>
<path d="M1587.3,836 L1590.5,839.2 L1593.7,836" stroke="#505050" stroke-width="1.7" fill="none"/>
<clipPath id="con"><rect x="774" y="732" width="809" height="115"/></clipPath>
<g clip-path="url(#con)">
<text x="777" y="747" font-family="Liberation Sans" font-size="10.6" fill="#000">Compiling design (CSG Tree generation)...</text>
<text x="777" y="760" font-family="Liberation Sans" font-size="10.6" fill="#000">Compiling design (CSG Products generation)...</text>
<text x="777" y="773" font-family="Liberation Sans" font-size="10.6" fill="#000">Geometries in cache: 6</text>
<text x="777" y="786" font-family="Liberation Sans" font-size="10.6" fill="#000">Geometry cache size in bytes: 2199600</text>
<text x="777" y="799" font-family="Liberation Sans" font-size="10.6" fill="#000">CGAL Polyhedrons in cache: 0</text>
<text x="777" y="812" font-family="Liberation Sans" font-size="10.6" fill="#000">CGAL cache size in bytes: 0</text>
<text x="777" y="825" font-family="Liberation Sans" font-size="10.6" fill="#000">Compiling design (CSG Products normalization)...</text>
<text x="777" y="838" font-family="Liberation Sans" font-size="10.6" fill="#000">Normalized CSG tree has 5 elements</text>
<text x="777" y="851" font-family="Liberation Sans" font-size="10.6" fill="#000">Compile and preview finished.</text>
</g>
<text x="2" y="863" font-family="Liberation Sans" font-size="11" fill="#000" textLength="506" lengthAdjust="spacingAndGlyphs">Fenêtre de rendu: translation = [ -0.00 -0.00 -0.00 ], rotation = [ 54.30 0.00 28.50 ], distance = 446.13</text>
<text x="1483" y="863" font-family="Liberation Sans" font-size="11" fill="#000" textLength="97" lengthAdjust="spacingAndGlyphs">OpenSCAD 2015.03</text>
<rect x="1595.5" y="857.5" width="2" height="2" fill="#b8b8b8"/>
<rect x="1592.5" y="860.5" width="2" height="2" fill="#b8b8b8"/>
<rect x="1595.5" y="860.5" width="2" height="2" fill="#b8b8b8"/>
<rect x="1589.5" y="863.5" width="2" height="2" fill="#b8b8b8"/>
<rect x="1592.5" y="863.5" width="2" height="2" fill="#b8b8b8"/>
<rect x="1595.5" y="863.5" width="2" height="2" fill="#b8b8b8"/>
<g fill="none" stroke="#000" stroke-width="4">
<rect x="17" y="108" width="649" height="572"/>
<rect x="786" y="60" width="802" height="598"/>
<rect x="805.3" y="671.3" width="33.6" height="37.2"/>
<rect x="769.2" y="668" width="35.6" height="35.6"/>
</g>
<line x1="623" y1="754" x2="776" y2="692.4" stroke="#000" stroke-width="4"/>
<line x1="829" y1="697" x2="1036" y2="746.7" stroke="#000" stroke-width="4"/>
<text x="129" y="455" font-family="Liberation Sans" font-size="20" fill="#000" textLength="333" lengthAdjust="spacingAndGlyphs">Zone d'édition de la pièce (le code)</text>
<text x="858" y="137.2" font-family="Liberation Sans" font-size="20" fill="#000" textLength="307" lengthAdjust="spacingAndGlyphs">Fenêtre de visualisation du code</text>
<text x="486" y="764.2" font-family="Liberation Sans" font-size="20" fill="#000" textLength="128" lengthAdjust="spacingAndGlyphs">Rendu rapide</text>
<text x="1043" y="756.8" font-family="Liberation Sans" font-size="20" fill="#000" textLength="222" lengthAdjust="spacingAndGlyphs">Rendu pour exportation</text></svg></body></html>
